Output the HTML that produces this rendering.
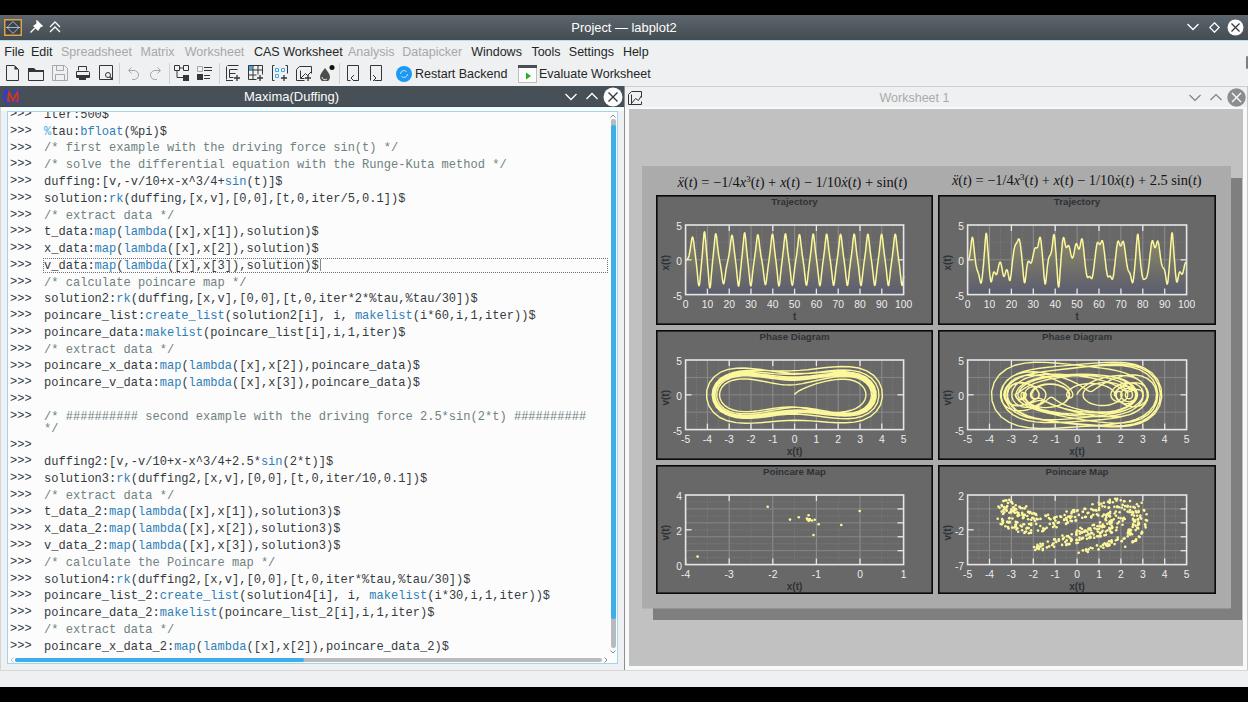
<!DOCTYPE html><html><head><meta charset="utf-8"><style>
*{margin:0;padding:0;box-sizing:border-box}
html,body{width:1248px;height:702px;overflow:hidden;background:#000}
body{position:relative;font-family:"Liberation Sans",sans-serif;font-size:12.5px;color:#232627}
.a{position:absolute}
#title{left:0;top:15px;width:1248px;height:25px;background:linear-gradient(#5d666d,#444c52)}
#tline{left:0;top:40px;width:1248px;height:1px;background:#aee0f6}
#menu{left:0;top:41px;width:1248px;height:629px;background:#eff0f1}
.mi{top:44px;height:16px;line-height:16px;white-space:nowrap}
.dis{color:#a6a8aa}
.sep{top:63px;width:1px;height:21px;background:#cfd1d3}
#ldock{left:0;top:86px;width:625px;height:21px;background:#475057}
#rdockline{left:625px;top:86px;width:623px;height:1px;background:#cdcfd1}
#editorbg{left:0;top:107px;width:624px;height:563px;background:linear-gradient(#fafbfb 0,#fafbfb 4px,#eff0f1 4px)}
#editor{left:7px;top:111px;width:611px;height:553px;background:#fcfcfc;border:1px solid #9fd5ef;overflow:hidden}
#vline{left:624px;top:86px;width:1px;height:585px;background:#8c8e91}
#rstrip{left:625px;top:107px;width:622px;height:563px;background:#f8f9f9}
#rline{left:1247px;top:86px;width:1px;height:584px;background:#c5c7c9}
#lline{left:0;top:107px;width:1px;height:563px;background:#d3d5d7}
#view{left:629px;top:109px;width:614px;height:557px;background:#c1c1c1}
#status{left:0;top:670px;width:1248px;height:17px;background:#eff0f1;border-top:1px solid #d6d8da}
.code{font-family:"Liberation Mono",monospace;font-size:12.05px;white-space:pre;color:#353a3f}
.pr{left:2px}
.kw{color:#2e7fb8}
.cm{color:#6f8181}
.pc{color:#3daee9}
</style></head><body>
<div class="a" id="title"></div><div class="a" id="tline"></div><div class="a" id="menu"></div>
<svg class="a" style="left:4px;top:19px" width="18" height="17" viewBox="0 0 18 17" ><rect x=".75" y=".75" width="16.5" height="15.5" fill="#3b434a" stroke="#e0a240" stroke-width="1.5"/><path d="M2 8.5h14M3 8.5l6-6 6 6-6 6z" fill="none" stroke="#c8d8e8" stroke-width="0.8"/></svg>
<svg class="a" style="left:29px;top:20px" width="14" height="14" viewBox="0 0 14 14" ><path d="M8 1l5 5-2 1-2 3-4-4 3-2zM6.5 7.5l-5 5" fill="#fff" stroke="#fff" stroke-width="1.3"/></svg>
<svg class="a" style="left:48px;top:20px" width="14" height="14" viewBox="0 0 14 14" ><path d="M2 7l5-5 5 5M2 12l5-5 5 5" fill="none" stroke="#fff" stroke-width="1.3"/></svg>
<div class="a" style="left:0;top:20px;width:1248px;text-align:center;color:#fff;font-size:12.9px;line-height:16px;padding-left:0px">Project — labplot2</div>
<svg class="a" style="left:1186px;top:22px" width="14" height="10" viewBox="0 0 14 10" ><path d="M1.5 2l5.5 5.5 5.5-5.5" fill="none" stroke="#fff" stroke-width="1.3"/></svg>
<svg class="a" style="left:1209px;top:22px" width="11" height="11" viewBox="0 0 11 11" ><path d="M5.5 .8l4.7 4.7-4.7 4.7-4.7-4.7z" fill="none" stroke="#fff" stroke-width="1.3"/></svg>
<svg class="a" style="left:1227px;top:19px" width="17" height="17" viewBox="0 0 17 17" ><circle cx="8.5" cy="8.5" r="8" fill="#fcfcfc"/><path d="M4.5 4.5l8 8M12.5 4.5l-8 8" stroke="#31363b" stroke-width="1.2"/></svg>
<div class="a mi" style="left:4.3px">File</div>
<div class="a mi" style="left:31.0px">Edit</div>
<div class="a mi dis" style="left:61.0px">Spreadsheet</div>
<div class="a mi dis" style="left:140.5px">Matrix</div>
<div class="a mi dis" style="left:184.8px">Worksheet</div>
<div class="a mi" style="left:254.0px">CAS Worksheet</div>
<div class="a mi dis" style="left:347.9px">Analysis</div>
<div class="a mi dis" style="left:402.3px">Datapicker</div>
<div class="a mi" style="left:471.2px">Windows</div>
<div class="a mi" style="left:531.4px">Tools</div>
<div class="a mi" style="left:568.8px">Settings</div>
<div class="a mi" style="left:622.9px">Help</div>
<svg class="a" style="left:5px;top:65px" width="16" height="16" viewBox="0 0 16 16" ><path d="M1.5 .5h8l4 4v11h-12z" fill="none" stroke="#31363b"/><path d="M9.5 .5v4h4z" fill="#31363b"/></svg>
<svg class="a" style="left:28px;top:65px" width="16" height="16" viewBox="0 0 16 16" ><path d="M.5 3.5v12h15v-10h-8l-2-2z" fill="none" stroke="#31363b"/><path d="M0 3h6l2 2h8v2h-16z" fill="#31363b"/></svg>
<svg class="a" style="left:52px;top:65px" width="16" height="16" viewBox="0 0 16 16" ><path d="M.5 .5h12l3 3v12h-15z" fill="none" stroke="#a5a7a9"/><path d="M4.5 .5v5h7v-5M3.5 15.5v-6h9v6" fill="none" stroke="#a5a7a9"/></svg>
<svg class="a" style="left:75px;top:65px" width="16" height="16" viewBox="0 0 16 16" ><path d="M3.5 5.5v-4h8v4" fill="none" stroke="#31363b"/><path d="M1.5 6.5h12a1 1 0 0 1 1 1v5h-13z" fill="none" stroke="#31363b"/><rect x="2" y="10" width="12" height="2" fill="#31363b"/><rect x="4" y="12" width="7" height="3" fill="#31363b"/></svg>
<svg class="a" style="left:99px;top:65px" width="16" height="16" viewBox="0 0 16 16" ><path d="M.5 .5h13v14h-13z" fill="none" stroke="#31363b"/><circle cx="9" cy="10" r="2.5" fill="none" stroke="#31363b"/><path d="M10.8 11.8l3 3" stroke="#31363b" stroke-width="1.5"/></svg>
<svg class="a" style="left:125px;top:65px" width="16" height="16" viewBox="0 0 16 16" ><path d="M4 5.5h5a4.5 4.5 0 0 1 0 9h-2" fill="none" stroke="#a5a7a9"/><path d="M6.5 2.5l-3 3 3 3" fill="none" stroke="#a5a7a9"/></svg>
<svg class="a" style="left:148px;top:65px" width="16" height="16" viewBox="0 0 16 16" ><path d="M12 5.5h-5a4.5 4.5 0 0 0 0 9h2" fill="none" stroke="#a5a7a9"/><path d="M9.5 2.5l3 3-3 3" fill="none" stroke="#a5a7a9"/></svg>
<svg class="a" style="left:174px;top:65px" width="16" height="16" viewBox="0 0 16 16" ><path d="M.5 .5h5v5h-5zM9.5 .5h5v5h-5zM5.5 3h4M3 5.5v7h6" fill="none" stroke="#31363b"/><rect x="9" y="10" width="6" height="6" fill="#31363b"/></svg>
<svg class="a" style="left:197px;top:65px" width="16" height="16" viewBox="0 0 16 16" ><path d="M.5 1.5h5v5h-5z" fill="none" stroke="#a5a7a9"/><path d="M7 2.5h8M7 5.5h8M7 10.5h6M7 13.5h6" stroke="#31363b"/><rect x="0" y="9" width="6" height="6" fill="#31363b"/></svg>
<svg class="a" style="left:225px;top:65px" width="16" height="16" viewBox="0 0 16 16" ><path d="M1.5 1.5v13M2.5 .5h11M1 15.5h7" stroke="#31363b"/><path d="M4.5 4.5h8M4.5 12.5v-8M4.5 8.5h6M4.5 12.5h4" fill="none" stroke="#31363b"/><path d="M12 10v6M9 13h6" stroke="#31363b" stroke-width="1.3"/></svg>
<svg class="a" style="left:248px;top:65px" width="16" height="16" viewBox="0 0 16 16" ><rect x=".5" y=".5" width="4" height="4" fill="#3daee9"/><path d="M.5 .5h14v9M.5 .5v14h8M5 .5v14M10 .5v9M.5 5h14M.5 10h8" fill="none" stroke="#31363b"/><path d="M12 10v6M9 13h6" stroke="#31363b" stroke-width="1.3"/></svg>
<svg class="a" style="left:272px;top:65px" width="16" height="16" viewBox="0 0 16 16" ><path d="M2.5 .5h-2v15h2M13.5 .5h2v8" fill="none" stroke="#31363b"/><path d="M3.5 3.5h3v3h-3zM9.5 3.5h3v3h-3zM3.5 9.5h3v3h-3z" fill="none" stroke="#3daee9"/><path d="M12 10v6M9 13h6" stroke="#31363b" stroke-width="1.3"/></svg>
<svg class="a" style="left:296px;top:65px" width="16" height="16" viewBox="0 0 16 16" ><path d="M.5 4.5l3-3h12v7M.5 4.5v11h8M4.5 5.5v8h4M4.5 13.5l5-5 2 2 4-4" fill="none" stroke="#31363b"/><path d="M12 10v6M9 13h6" stroke="#31363b" stroke-width="1.3"/></svg>
<svg class="a" style="left:319px;top:65px" width="16" height="16" viewBox="0 0 16 16" ><path d="M6 3c3 4 5 6 5 9a5 5 0 0 1-10 0c0-3 2-5 5-9z" fill="#4d4d4d"/><path d="M3 12a3 3 0 0 0 5 2" fill="none" stroke="#eee" stroke-width="1"/><circle cx="13" cy="2.5" r="2.5" fill="#111"/></svg>
<svg class="a" style="left:345px;top:65px" width="16" height="16" viewBox="0 0 16 16" ><path d="M2.5 .5h11v15h-5M2.5 .5v15h3" fill="none" stroke="#31363b"/><path d="M9 10l-3 3 3 3" fill="none" stroke="#31363b"/></svg>
<svg class="a" style="left:369px;top:65px" width="16" height="16" viewBox="0 0 16 16" ><path d="M.5 .5h11v15h-7M.5 .5v15" fill="none" stroke="#31363b" transform="translate(1 0)"/><path d="M4 10l3 3-3 3" fill="none" stroke="#31363b"/></svg>
<div class="a sep" style="left:119px"></div>
<div class="a sep" style="left:169px"></div>
<div class="a sep" style="left:219px"></div>
<div class="a sep" style="left:339px"></div>
<svg class="a" style="left:396px;top:66px" width="16" height="16" viewBox="0 0 16 16" ><circle cx="8" cy="8" r="8" fill="#1d99f3"/><path d="M4.5 8a3.5 3.5 0 0 1 6-2.4M11.5 8a3.5 3.5 0 0 1-6 2.4" fill="none" stroke="#bfe4fc" stroke-width="1"/></svg>
<div class="a" style="left:415px;top:66px;height:16px;line-height:16px">Restart Backend</div>
<svg class="a" style="left:518px;top:65px" width="19" height="18" viewBox="0 0 19 18" ><rect x=".5" y=".5" width="18" height="17" fill="#fcfcfc" stroke="#bcbec0"/><rect x="0" y="0" width="19" height="3" fill="#475057"/><path d="M8 7.5l5 3.5-5 3.5z" fill="#1cb31c"/></svg>
<div class="a" style="left:539px;top:66px;height:16px;line-height:16px">Evaluate Worksheet</div>
<div class="a" id="ldock"></div><div class="a" style="left:0;top:106px;width:625px;height:1px;background:#2f4d5c"></div><div class="a" style="left:1px;top:107px;width:623px;height:3px;background:#fafbfb"></div><div class="a" style="left:1246px;top:56px;width:2px;height:13px;background:#7d8083;border-radius:1px"></div>
<svg class="a" style="left:2px;top:88px" width="20" height="18" viewBox="0 0 20 18" ><path d="M2.5 1.8c1.5 1 2.5.3 4 1.3M5.5 3.5C1.5 5.5 .8 10.5 4 12.8c2.5 1.5 3 2.8 1.5 4" fill="none" stroke="#3434f0" stroke-width="2"/><path d="M10.5 3.6h7M17.5 3v2M12.5 13h5.5M18 12v1.5" fill="none" stroke="#3434f0" stroke-width="1.9"/><path d="M6 13l1-8.5 4 8 4.5-8.5.5 9M5 13h3M13.5 13h3" fill="none" stroke="#e8302a" stroke-width="1.4"/></svg>
<div class="a" style="left:244px;top:89px;color:#fcfcfc;font-size:13px;line-height:16px">Maxima(Duffing)</div>
<svg class="a" style="left:564px;top:92px" width="14" height="10" viewBox="0 0 14 10" ><path d="M1.5 2l5.5 5.5 5.5-5.5" fill="none" stroke="#fff" stroke-width="1.3"/></svg>
<svg class="a" style="left:585px;top:91px" width="14" height="10" viewBox="0 0 14 10" ><path d="M1.5 8l5.5-5.5 5.5 5.5" fill="none" stroke="#fff" stroke-width="1.3"/></svg>
<svg class="a" style="left:603px;top:87px" width="20" height="20" viewBox="0 0 20 20" ><circle cx="10" cy="10" r="9.5" fill="#fcfcfc"/><path d="M5.5 5.5l9 9M14.5 5.5l-9 9" stroke="#31363b" stroke-width="1.3"/></svg>
<div class="a" id="rdockline"></div>
<svg class="a" style="left:628px;top:90px" width="15" height="15" viewBox="0 0 15 15" ><path d="M.5 4.5l3-3h10v6M.5 4.5v10h13v-3M3.5 4.5v10M3.5 13.5l4-5 3 2 3-5" fill="none" stroke="#31363b"/></svg>
<div class="a dis" style="left:879.5px;top:90px;line-height:16px;color:#a9abad">Worksheet 1</div>
<svg class="a" style="left:1188px;top:93px" width="14" height="10" viewBox="0 0 14 10" ><path d="M1.5 2l5.5 5.5 5.5-5.5" fill="none" stroke="#7f8285" stroke-width="1.2"/></svg>
<svg class="a" style="left:1209px;top:92px" width="14" height="10" viewBox="0 0 14 10" ><path d="M1.5 8l5.5-5.5 5.5 5.5" fill="none" stroke="#7f8285" stroke-width="1.2"/></svg>
<svg class="a" style="left:1227px;top:88px" width="19" height="19" viewBox="0 0 19 19" ><circle cx="9.5" cy="9.5" r="9.2" fill="#8b8e91"/><path d="M5 5l9 9M14 5l-9 9" stroke="#fcfcfc" stroke-width="1.3"/></svg>
<div class="a" id="editorbg"></div><div class="a" id="vline"></div><div class="a" id="rstrip"></div><div class="a" id="rline"></div><div class="a" id="lline"></div><div class="a" id="status"></div>
<div class="a" id="editor">
<div class="a code pr" style="top:-4.85px;line-height:14.00px">&gt;&gt;&gt;</div>
<div class="a code" style="left:36.00px;top:-3.05px;line-height:12.04px">iter:500$</div>
<div class="a code pr" style="top:11.91px;line-height:14.00px">&gt;&gt;&gt;</div>
<div class="a code" style="left:36.00px;top:13.71px;line-height:12.04px"><span class="pc">%</span>tau:<span class="kw">bfloat</span>(%pi)$</div>
<div class="a code pr" style="top:28.67px;line-height:14.00px">&gt;&gt;&gt;</div>
<div class="a code" style="left:36.00px;top:30.47px;line-height:12.04px"><span class="cm">/* first example with the driving force sin(t) */</span></div>
<div class="a code pr" style="top:45.43px;line-height:14.00px">&gt;&gt;&gt;</div>
<div class="a code" style="left:36.00px;top:47.23px;line-height:12.04px"><span class="cm">/* solve the differential equation with the Runge-Kuta method */</span></div>
<div class="a code pr" style="top:62.19px;line-height:14.00px">&gt;&gt;&gt;</div>
<div class="a code" style="left:36.00px;top:63.99px;line-height:12.04px">duffing:[v,-v/10+x-x^3/4+<span class="kw">sin</span>(t)]$</div>
<div class="a code pr" style="top:78.95px;line-height:14.00px">&gt;&gt;&gt;</div>
<div class="a code" style="left:36.00px;top:80.75px;line-height:12.04px">solution:<span class="kw">rk</span>(duffing,[x,v],[0,0],[t,0,iter/5,0.1])$</div>
<div class="a code pr" style="top:95.71px;line-height:14.00px">&gt;&gt;&gt;</div>
<div class="a code" style="left:36.00px;top:97.51px;line-height:12.04px"><span class="cm">/* extract data */</span></div>
<div class="a code pr" style="top:112.47px;line-height:14.00px">&gt;&gt;&gt;</div>
<div class="a code" style="left:36.00px;top:114.27px;line-height:12.04px">t_data:<span class="kw">map</span>(<span class="kw">lambda</span>([x],x[1]),solution)$</div>
<div class="a code pr" style="top:129.23px;line-height:14.00px">&gt;&gt;&gt;</div>
<div class="a code" style="left:36.00px;top:131.03px;line-height:12.04px">x_data:<span class="kw">map</span>(<span class="kw">lambda</span>([x],x[2]),solution)$</div>
<div class="a code pr" style="top:145.99px;line-height:14.00px">&gt;&gt;&gt;</div>
<div class="a code" style="left:36.00px;top:147.79px;line-height:12.04px">v_data:<span class="kw">map</span>(<span class="kw">lambda</span>([x],x[3]),solution)$</div>
<div class="a code pr" style="top:162.75px;line-height:14.00px">&gt;&gt;&gt;</div>
<div class="a code" style="left:36.00px;top:164.55px;line-height:12.04px"><span class="cm">/* calculate poincare map */</span></div>
<div class="a code pr" style="top:179.51px;line-height:14.00px">&gt;&gt;&gt;</div>
<div class="a code" style="left:36.00px;top:181.31px;line-height:12.04px">solution2:<span class="kw">rk</span>(duffing,[x,v],[0,0],[t,0,iter*2*%tau,%tau/30])$</div>
<div class="a code pr" style="top:196.27px;line-height:14.00px">&gt;&gt;&gt;</div>
<div class="a code" style="left:36.00px;top:198.07px;line-height:12.04px">poincare_list:<span class="kw">create_list</span>(solution2[i], i, <span class="kw">makelist</span>(i*60,i,1,iter))$</div>
<div class="a code pr" style="top:213.03px;line-height:14.00px">&gt;&gt;&gt;</div>
<div class="a code" style="left:36.00px;top:214.83px;line-height:12.04px">poincare_data:<span class="kw">makelist</span>(poincare_list[i],i,1,iter)$</div>
<div class="a code pr" style="top:229.79px;line-height:14.00px">&gt;&gt;&gt;</div>
<div class="a code" style="left:36.00px;top:231.59px;line-height:12.04px"><span class="cm">/* extract data */</span></div>
<div class="a code pr" style="top:246.55px;line-height:14.00px">&gt;&gt;&gt;</div>
<div class="a code" style="left:36.00px;top:248.35px;line-height:12.04px">poincare_x_data:<span class="kw">map</span>(<span class="kw">lambda</span>([x],x[2]),poincare_data)$</div>
<div class="a code pr" style="top:263.31px;line-height:14.00px">&gt;&gt;&gt;</div>
<div class="a code" style="left:36.00px;top:265.11px;line-height:12.04px">poincare_v_data:<span class="kw">map</span>(<span class="kw">lambda</span>([x],x[3]),poincare_data)$</div>
<div class="a code pr" style="top:280.07px;line-height:14.00px">&gt;&gt;&gt;</div>
<div class="a code pr" style="top:296.83px;line-height:14.00px">&gt;&gt;&gt;</div>
<div class="a code" style="left:36.00px;top:298.63px;line-height:12.04px"><span class="cm">/* ########## second example with the driving force 2.5*sin(2*t) ##########
*/</span></div>
<div class="a code pr" style="top:325.63px;line-height:14.00px">&gt;&gt;&gt;</div>
<div class="a code pr" style="top:342.39px;line-height:14.00px">&gt;&gt;&gt;</div>
<div class="a code" style="left:36.00px;top:344.19px;line-height:12.04px">duffing2:[v,-v/10+x-x^3/4+2.5*<span class="kw">sin</span>(2*t)]$</div>
<div class="a code pr" style="top:359.15px;line-height:14.00px">&gt;&gt;&gt;</div>
<div class="a code" style="left:36.00px;top:360.95px;line-height:12.04px">solution3:<span class="kw">rk</span>(duffing2,[x,v],[0,0],[t,0,iter/10,0.1])$</div>
<div class="a code pr" style="top:375.91px;line-height:14.00px">&gt;&gt;&gt;</div>
<div class="a code" style="left:36.00px;top:377.71px;line-height:12.04px"><span class="cm">/* extract data */</span></div>
<div class="a code pr" style="top:392.67px;line-height:14.00px">&gt;&gt;&gt;</div>
<div class="a code" style="left:36.00px;top:394.47px;line-height:12.04px">t_data_2:<span class="kw">map</span>(<span class="kw">lambda</span>([x],x[1]),solution3)$</div>
<div class="a code pr" style="top:409.43px;line-height:14.00px">&gt;&gt;&gt;</div>
<div class="a code" style="left:36.00px;top:411.23px;line-height:12.04px">x_data_2:<span class="kw">map</span>(<span class="kw">lambda</span>([x],x[2]),solution3)$</div>
<div class="a code pr" style="top:426.19px;line-height:14.00px">&gt;&gt;&gt;</div>
<div class="a code" style="left:36.00px;top:427.99px;line-height:12.04px">v_data_2:<span class="kw">map</span>(<span class="kw">lambda</span>([x],x[3]),solution3)$</div>
<div class="a code pr" style="top:442.95px;line-height:14.00px">&gt;&gt;&gt;</div>
<div class="a code" style="left:36.00px;top:444.75px;line-height:12.04px"><span class="cm">/* calculate the Poincare map */</span></div>
<div class="a code pr" style="top:459.71px;line-height:14.00px">&gt;&gt;&gt;</div>
<div class="a code" style="left:36.00px;top:461.51px;line-height:12.04px">solution4:<span class="kw">rk</span>(duffing2,[x,v],[0,0],[t,0,iter*%tau,%tau/30])$</div>
<div class="a code pr" style="top:476.47px;line-height:14.00px">&gt;&gt;&gt;</div>
<div class="a code" style="left:36.00px;top:478.27px;line-height:12.04px">poincare_list_2:<span class="kw">create_list</span>(solution4[i], i, <span class="kw">makelist</span>(i*30,i,1,iter))$</div>
<div class="a code pr" style="top:493.23px;line-height:14.00px">&gt;&gt;&gt;</div>
<div class="a code" style="left:36.00px;top:495.03px;line-height:12.04px">poincare_data_2:<span class="kw">makelist</span>(poincare_list_2[i],i,1,iter)$</div>
<div class="a code pr" style="top:509.99px;line-height:14.00px">&gt;&gt;&gt;</div>
<div class="a code" style="left:36.00px;top:511.79px;line-height:12.04px"><span class="cm">/* extract data */</span></div>
<div class="a code pr" style="top:526.75px;line-height:14.00px">&gt;&gt;&gt;</div>
<div class="a code" style="left:36.00px;top:528.55px;line-height:12.04px">poincare_x_data_2:<span class="kw">map</span>(<span class="kw">lambda</span>([x],x[2]),poincare_data_2)$</div>
<div class="a" style="left:34.50px;top:145.50px;width:565.50px;height:15.50px;border:1px dotted #707070"></div>
<div class="a" style="left:312.00px;top:147.00px;width:1.00px;height:12.00px;background:#8a8a8a"></div>
<div class="a" style="left:603.00px;top:7.00px;width:4.50px;height:529.00px;background:#b9babc;border-radius:2.25px"></div>
<div class="a" style="left:603.00px;top:12.50px;width:4.50px;height:494.00px;background:#3daee9;border-radius:2.25px"></div>
<svg class="a" style="left:601px;top:1px" width="8" height="6"><path d="M1.5 4.5l2.5-2.5 2.5 2.5" fill="none" stroke="#8a8c8e" stroke-width="1"/></svg>
<svg class="a" style="left:601px;top:537px" width="8" height="6"><path d="M1.5 1.5l2.5 2.5 2.5-2.5" fill="none" stroke="#8a8c8e" stroke-width="1"/></svg>
<div class="a" style="left:7.00px;top:546.00px;width:586.50px;height:4.00px;background:#b9babc;border-radius:2px"></div>
<div class="a" style="left:7.00px;top:546.00px;width:289.00px;height:4.00px;background:#3daee9;border-radius:2px"></div>
<svg class="a" style="left:1px;top:544px" width="6" height="8"><path d="M4.5 1.5l-2.5 2.5 2.5 2.5" fill="none" stroke="#c0c2c4" stroke-width="1"/></svg>
<svg class="a" style="left:595px;top:544px" width="6" height="8"><path d="M1.5 1.5l2.5 2.5-2.5 2.5" fill="none" stroke="#8a8c8e" stroke-width="1"/></svg>
</div>
<div class="a" id="view"></div>
<svg class="a" style="left:0;top:0" width="1248" height="702" font-family="Liberation Sans, sans-serif">
<rect x="653" y="178" width="589" height="442" fill="#7f7f7f"/>
<rect x="642" y="166" width="589" height="442.5" fill="#ababab"/>
<text x="792.5" y="187.3" text-anchor="middle" font-family="Liberation Serif, serif" font-size="14.5" fill="#141414"><tspan font-style="italic">x&#776;</tspan>(<tspan font-style="italic">t</tspan>) = &#8722;1/4<tspan font-style="italic">x</tspan><tspan font-size="9" dy="-5">3</tspan><tspan dy="5">(</tspan><tspan font-style="italic">t</tspan>) + <tspan font-style="italic">x</tspan>(<tspan font-style="italic">t</tspan>) &#8722; 1/10<tspan font-style="italic">x&#775;</tspan>(<tspan font-style="italic">t</tspan>) + sin(<tspan font-style="italic">t</tspan>)</text>
<text x="1076.8" y="185.1" text-anchor="middle" font-family="Liberation Serif, serif" font-size="14.4" fill="#141414"><tspan font-style="italic">x&#776;</tspan>(<tspan font-style="italic">t</tspan>) = &#8722;1/4<tspan font-style="italic">x</tspan><tspan font-size="9" dy="-5">3</tspan><tspan dy="5">(</tspan><tspan font-style="italic">t</tspan>) + <tspan font-style="italic">x</tspan>(<tspan font-style="italic">t</tspan>) &#8722; 1/10<tspan font-style="italic">x&#775;</tspan>(<tspan font-style="italic">t</tspan>) + 2.5 sin(<tspan font-style="italic">t</tspan>)</text>
<rect x="656.80" y="195.80" width="275.40" height="128.40" fill="#686868" stroke="#0a0a0a" stroke-width="1.6"/>
<text x="794.50" y="205.20" text-anchor="middle" font-size="9.7" font-weight="bold" fill="#2d3236">Trajectory</text>
<line x1="696.50" y1="225.00" x2="696.50" y2="294.60" stroke="#7c7c7c" stroke-width="0.8" stroke-dasharray="1.5,1.5"/>
<line x1="718.30" y1="225.00" x2="718.30" y2="294.60" stroke="#7c7c7c" stroke-width="0.8" stroke-dasharray="1.5,1.5"/>
<line x1="740.10" y1="225.00" x2="740.10" y2="294.60" stroke="#7c7c7c" stroke-width="0.8" stroke-dasharray="1.5,1.5"/>
<line x1="761.90" y1="225.00" x2="761.90" y2="294.60" stroke="#7c7c7c" stroke-width="0.8" stroke-dasharray="1.5,1.5"/>
<line x1="783.70" y1="225.00" x2="783.70" y2="294.60" stroke="#7c7c7c" stroke-width="0.8" stroke-dasharray="1.5,1.5"/>
<line x1="805.50" y1="225.00" x2="805.50" y2="294.60" stroke="#7c7c7c" stroke-width="0.8" stroke-dasharray="1.5,1.5"/>
<line x1="827.30" y1="225.00" x2="827.30" y2="294.60" stroke="#7c7c7c" stroke-width="0.8" stroke-dasharray="1.5,1.5"/>
<line x1="849.10" y1="225.00" x2="849.10" y2="294.60" stroke="#7c7c7c" stroke-width="0.8" stroke-dasharray="1.5,1.5"/>
<line x1="870.90" y1="225.00" x2="870.90" y2="294.60" stroke="#7c7c7c" stroke-width="0.8" stroke-dasharray="1.5,1.5"/>
<line x1="892.70" y1="225.00" x2="892.70" y2="294.60" stroke="#7c7c7c" stroke-width="0.8" stroke-dasharray="1.5,1.5"/>
<line x1="685.60" y1="277.20" x2="903.60" y2="277.20" stroke="#7c7c7c" stroke-width="0.8" stroke-dasharray="1.5,1.5"/>
<line x1="685.60" y1="242.40" x2="903.60" y2="242.40" stroke="#7c7c7c" stroke-width="0.8" stroke-dasharray="1.5,1.5"/>
<line x1="707.40" y1="225.00" x2="707.40" y2="294.60" stroke="#8e8e8e" stroke-width="1"/>
<line x1="729.20" y1="225.00" x2="729.20" y2="294.60" stroke="#8e8e8e" stroke-width="1"/>
<line x1="751.00" y1="225.00" x2="751.00" y2="294.60" stroke="#8e8e8e" stroke-width="1"/>
<line x1="772.80" y1="225.00" x2="772.80" y2="294.60" stroke="#8e8e8e" stroke-width="1"/>
<line x1="794.60" y1="225.00" x2="794.60" y2="294.60" stroke="#8e8e8e" stroke-width="1"/>
<line x1="816.40" y1="225.00" x2="816.40" y2="294.60" stroke="#8e8e8e" stroke-width="1"/>
<line x1="838.20" y1="225.00" x2="838.20" y2="294.60" stroke="#8e8e8e" stroke-width="1"/>
<line x1="860.00" y1="225.00" x2="860.00" y2="294.60" stroke="#8e8e8e" stroke-width="1"/>
<line x1="881.80" y1="225.00" x2="881.80" y2="294.60" stroke="#8e8e8e" stroke-width="1"/>
<line x1="685.60" y1="259.80" x2="903.60" y2="259.80" stroke="#8a8a8a" stroke-width="0.9"/>
<defs><linearGradient id="g1" x1="0" y1="0" x2="0" y2="1"><stop offset="0" stop-color="#8c8b71"/><stop offset="0.4" stop-color="#7b7a69"/><stop offset="0.7" stop-color="#6a6a6b"/><stop offset="1" stop-color="#5b5d6f"/></linearGradient></defs>
<polygon points="685.6,294.6 685.6,259.8 685.8,259.8 686.0,259.8 686.3,259.8 686.5,259.7 686.7,259.7 686.9,259.6 687.1,259.4 687.3,259.2 687.6,259.0 687.8,258.7 688.0,258.3 688.2,257.9 688.4,257.3 688.7,256.7 688.9,256.0 689.1,255.2 689.3,254.3 689.5,253.3 689.7,252.2 690.0,251.0 690.2,249.7 690.4,248.3 690.6,246.8 690.8,245.2 691.1,243.7 691.3,242.1 691.5,240.7 691.7,239.4 691.9,238.3 692.1,237.6 692.4,237.1 692.6,237.0 692.8,237.4 693.0,238.0 693.2,239.0 693.4,240.3 693.7,241.8 693.9,243.4 694.1,245.1 694.3,246.9 694.5,248.6 694.8,250.4 695.0,252.2 695.2,253.9 695.4,255.7 695.6,257.5 695.8,259.3 696.1,261.1 696.3,263.0 696.5,265.0 696.7,267.1 696.9,269.3 697.2,271.5 697.4,273.9 697.6,276.2 697.8,278.5 698.0,280.7 698.2,282.6 698.5,284.2 698.7,285.3 698.9,285.8 699.1,285.6 699.3,284.9 699.6,283.6 699.8,281.8 700.0,279.7 700.2,277.4 700.4,275.0 700.6,272.6 700.9,270.1 701.1,267.7 701.3,265.3 701.5,262.9 701.7,260.6 702.0,258.1 702.2,255.7 702.4,253.1 702.6,250.5 702.8,247.7 703.0,244.9 703.3,242.1 703.5,239.3 703.7,236.8 703.9,234.6 704.1,232.9 704.3,232.0 704.6,231.8 704.8,232.4 705.0,233.7 705.2,235.7 705.4,238.1 705.7,240.7 705.9,243.5 706.1,246.3 706.3,249.0 706.5,251.7 706.7,254.4 707.0,257.0 707.2,259.5 707.4,262.1 707.6,264.7 707.8,267.3 708.1,270.1 708.3,272.9 708.5,275.7 708.7,278.5 708.9,281.2 709.1,283.7 709.4,285.7 709.6,287.2 709.8,287.9 710.0,287.8 710.2,287.0 710.5,285.5 710.7,283.4 710.9,281.0 711.1,278.4 711.3,275.7 711.5,273.1 711.8,270.5 712.0,268.0 712.2,265.6 712.4,263.4 712.6,261.2 712.9,259.0 713.1,256.9 713.3,254.8 713.5,252.6 713.7,250.4 713.9,248.1 714.2,245.8 714.4,243.5 714.6,241.2 714.8,239.1 715.0,237.1 715.2,235.6 715.5,234.4 715.7,233.8 715.9,233.8 716.1,234.3 716.3,235.4 716.6,236.9 716.8,238.7 717.0,240.6 717.2,242.7 717.4,244.8 717.6,246.8 717.9,248.7 718.1,250.5 718.3,252.2 718.5,253.8 718.7,255.3 719.0,256.7 719.2,258.0 719.4,259.2 719.6,260.5 719.8,261.7 720.0,262.9 720.3,264.1 720.5,265.4 720.7,266.8 720.9,268.2 721.1,269.6 721.4,271.2 721.6,272.8 721.8,274.4 722.0,276.1 722.2,277.8 722.4,279.4 722.7,280.8 722.9,282.0 723.1,283.0 723.3,283.6 723.5,283.8 723.8,283.6 724.0,283.0 724.2,282.1 724.4,280.9 724.6,279.5 724.8,278.0 725.1,276.4 725.3,274.8 725.5,273.3 725.7,271.8 725.9,270.4 726.1,269.0 726.4,267.8 726.6,266.6 726.8,265.5 727.0,264.4 727.2,263.4 727.5,262.4 727.7,261.4 727.9,260.4 728.1,259.4 728.3,258.4 728.5,257.3 728.8,256.1 729.0,254.9 729.2,253.5 729.4,252.1 729.6,250.6 729.9,249.0 730.1,247.2 730.3,245.4 730.5,243.6 730.7,241.7 730.9,240.0 731.2,238.4 731.4,237.0 731.6,236.0 731.8,235.4 732.0,235.2 732.3,235.6 732.5,236.3 732.7,237.5 732.9,238.9 733.1,240.6 733.3,242.4 733.6,244.4 733.8,246.3 734.0,248.2 734.2,250.0 734.4,251.9 734.6,253.6 734.9,255.4 735.1,257.1 735.3,258.8 735.5,260.6 735.7,262.4 736.0,264.2 736.2,266.2 736.4,268.2 736.6,270.4 736.8,272.6 737.0,274.9 737.3,277.2 737.5,279.4 737.7,281.6 737.9,283.4 738.1,284.8 738.4,285.8 738.6,286.1 738.8,285.8 739.0,285.0 739.2,283.6 739.4,281.8 739.7,279.7 739.9,277.5 740.1,275.2 740.3,272.9 740.5,270.6 740.8,268.4 741.0,266.2 741.2,264.1 741.4,262.1 741.6,260.0 741.8,257.9 742.1,255.8 742.3,253.7 742.5,251.4 742.7,249.1 742.9,246.7 743.2,244.2 743.4,241.7 743.6,239.3 743.8,237.1 744.0,235.3 744.2,233.9 744.5,233.1 744.7,232.9 744.9,233.4 745.1,234.5 745.3,236.1 745.6,238.1 745.8,240.3 746.0,242.7 746.2,245.1 746.4,247.4 746.6,249.7 746.9,251.9 747.1,254.0 747.3,256.0 747.5,258.0 747.7,260.0 747.9,261.9 748.2,263.9 748.4,265.9 748.6,268.0 748.8,270.2 749.0,272.4 749.3,274.6 749.5,276.9 749.7,279.2 749.9,281.3 750.1,283.1 750.3,284.6 750.6,285.6 750.8,286.0 751.0,285.8 751.2,285.1 751.4,283.9 751.7,282.2 751.9,280.3 752.1,278.3 752.3,276.1 752.5,274.0 752.7,271.9 753.0,269.9 753.2,268.1 753.4,266.3 753.6,264.6 753.8,263.0 754.1,261.4 754.3,259.9 754.5,258.3 754.7,256.8 754.9,255.2 755.1,253.6 755.4,251.9 755.6,250.2 755.8,248.3 756.0,246.4 756.2,244.5 756.5,242.6 756.7,240.7 756.9,238.9 757.1,237.3 757.3,236.1 757.5,235.2 757.8,234.8 758.0,234.9 758.2,235.4 758.4,236.4 758.6,237.7 758.8,239.3 759.1,241.1 759.3,242.9 759.5,244.8 759.7,246.6 759.9,248.3 760.2,250.0 760.4,251.6 760.6,253.0 760.8,254.5 761.0,255.8 761.2,257.1 761.5,258.4 761.7,259.6 761.9,260.9 762.1,262.2 762.3,263.5 762.6,265.0 762.8,266.4 763.0,268.0 763.2,269.7 763.4,271.4 763.6,273.3 763.9,275.2 764.1,277.1 764.3,278.9 764.5,280.7 764.7,282.2 765.0,283.4 765.2,284.3 765.4,284.7 765.6,284.6 765.8,284.0 766.0,283.0 766.3,281.7 766.5,280.1 766.7,278.3 766.9,276.5 767.1,274.6 767.4,272.7 767.6,270.9 767.8,269.1 768.0,267.4 768.2,265.8 768.4,264.2 768.7,262.7 768.9,261.1 769.1,259.6 769.3,258.0 769.5,256.4 769.7,254.7 770.0,253.0 770.2,251.1 770.4,249.2 770.6,247.2 770.8,245.1 771.1,243.0 771.3,240.9 771.5,238.9 771.7,237.1 771.9,235.7 772.1,234.7 772.4,234.2 772.6,234.2 772.8,234.8 773.0,235.9 773.2,237.4 773.5,239.2 773.7,241.2 773.9,243.2 774.1,245.3 774.3,247.4 774.5,249.5 774.8,251.4 775.0,253.3 775.2,255.2 775.4,257.0 775.6,258.7 775.9,260.5 776.1,262.3 776.3,264.2 776.5,266.1 776.7,268.1 776.9,270.2 777.2,272.4 777.4,274.6 777.6,276.9 777.8,279.1 778.0,281.2 778.2,283.0 778.5,284.5 778.7,285.5 778.9,286.0 779.1,285.8 779.3,285.1 779.6,283.9 779.8,282.2 780.0,280.3 780.2,278.2 780.4,276.0 780.6,273.8 780.9,271.6 781.1,269.6 781.3,267.6 781.5,265.6 781.7,263.8 782.0,262.0 782.2,260.2 782.4,258.4 782.6,256.6 782.8,254.7 783.0,252.8 783.3,250.8 783.5,248.8 783.7,246.6 783.9,244.4 784.1,242.2 784.4,240.0 784.6,238.1 784.8,236.3 785.0,235.0 785.2,234.1 785.4,233.8 785.7,234.1 785.9,234.9 786.1,236.1 786.3,237.8 786.5,239.7 786.8,241.8 787.0,243.9 787.2,246.0 787.4,248.0 787.6,250.0 787.8,251.9 788.1,253.7 788.3,255.4 788.5,257.0 788.7,258.6 788.9,260.2 789.1,261.9 789.4,263.5 789.6,265.2 789.8,266.9 790.0,268.8 790.2,270.7 790.5,272.7 790.7,274.7 790.9,276.8 791.1,278.8 791.3,280.7 791.5,282.4 791.8,283.8 792.0,284.7 792.2,285.2 792.4,285.2 792.6,284.6 792.9,283.6 793.1,282.2 793.3,280.5 793.5,278.6 793.7,276.7 793.9,274.7 794.2,272.8 794.4,270.9 794.6,269.1 794.8,267.4 795.0,265.8 795.3,264.2 795.5,262.7 795.7,261.2 795.9,259.8 796.1,258.3 796.3,256.8 796.6,255.3 796.8,253.7 797.0,252.0 797.2,250.2 797.4,248.3 797.7,246.4 797.9,244.4 798.1,242.4 798.3,240.5 798.5,238.6 798.7,237.0 799.0,235.8 799.2,234.9 799.4,234.6 799.6,234.7 799.8,235.3 800.1,236.4 800.3,237.8 800.5,239.5 800.7,241.4 800.9,243.3 801.1,245.3 801.4,247.2 801.6,249.1 801.8,250.9 802.0,252.6 802.2,254.2 802.4,255.8 802.7,257.3 802.9,258.9 803.1,260.4 803.3,261.9 803.5,263.5 803.8,265.2 804.0,266.9 804.2,268.7 804.4,270.7 804.6,272.6 804.8,274.7 805.1,276.8 805.3,278.8 805.5,280.8 805.7,282.5 805.9,283.9 806.2,284.8 806.4,285.3 806.6,285.2 806.8,284.7 807.0,283.6 807.2,282.1 807.5,280.4 807.7,278.5 807.9,276.4 808.1,274.4 808.3,272.4 808.6,270.4 808.8,268.5 809.0,266.7 809.2,265.0 809.4,263.3 809.6,261.6 809.9,260.0 810.1,258.3 810.3,256.6 810.5,254.8 810.7,253.0 811.0,251.1 811.2,249.1 811.4,247.0 811.6,244.9 811.8,242.7 812.0,240.6 812.3,238.6 812.5,236.8 812.7,235.4 812.9,234.4 813.1,234.0 813.3,234.1 813.6,234.8 813.8,235.9 814.0,237.5 814.2,239.3 814.4,241.3 814.7,243.4 814.9,245.5 815.1,247.6 815.3,249.6 815.5,251.5 815.7,253.4 816.0,255.1 816.2,256.9 816.4,258.6 816.6,260.2 816.8,262.0 817.1,263.7 817.3,265.5 817.5,267.4 817.7,269.3 817.9,271.4 818.1,273.5 818.4,275.6 818.6,277.8 818.8,279.9 819.0,281.8 819.2,283.4 819.5,284.7 819.7,285.4 819.9,285.6 820.1,285.3 820.3,284.4 820.5,283.1 820.8,281.4 821.0,279.5 821.2,277.5 821.4,275.4 821.6,273.3 821.9,271.3 822.1,269.4 822.3,267.5 822.5,265.7 822.7,264.0 822.9,262.4 823.2,260.7 823.4,259.1 823.6,257.5 823.8,255.8 824.0,254.1 824.2,252.3 824.5,250.4 824.7,248.4 824.9,246.4 825.1,244.3 825.3,242.2 825.6,240.2 825.8,238.3 826.0,236.6 826.2,235.4 826.4,234.5 826.6,234.2 826.9,234.4 827.1,235.2 827.3,236.3 827.5,237.9 827.7,239.7 828.0,241.7 828.2,243.7 828.4,245.7 828.6,247.7 828.8,249.6 829.0,251.4 829.3,253.1 829.5,254.8 829.7,256.4 829.9,257.9 830.1,259.5 830.4,261.0 830.6,262.6 830.8,264.2 831.0,265.9 831.2,267.7 831.4,269.5 831.7,271.5 831.9,273.5 832.1,275.5 832.3,277.6 832.5,279.6 832.8,281.4 833.0,283.0 833.2,284.2 833.4,285.0 833.6,285.3 833.8,285.0 834.1,284.3 834.3,283.1 834.5,281.5 834.7,279.7 834.9,277.8 835.1,275.8 835.4,273.8 835.6,271.9 835.8,270.0 836.0,268.2 836.2,266.5 836.5,264.8 836.7,263.2 836.9,261.6 837.1,260.1 837.3,258.5 837.5,256.9 837.8,255.3 838.0,253.6 838.2,251.8 838.4,249.9 838.6,248.0 838.9,245.9 839.1,243.9 839.3,241.8 839.5,239.8 839.7,238.0 839.9,236.4 840.2,235.2 840.4,234.5 840.6,234.3 840.8,234.6 841.0,235.4 841.3,236.7 841.5,238.3 841.7,240.1 841.9,242.1 842.1,244.1 842.3,246.1 842.6,248.1 842.8,250.0 843.0,251.8 843.2,253.6 843.4,255.3 843.6,256.9 843.9,258.5 844.1,260.2 844.3,261.8 844.5,263.4 844.7,265.2 845.0,267.0 845.2,268.9 845.4,270.8 845.6,272.9 845.8,275.0 846.0,277.1 846.3,279.2 846.5,281.1 846.7,282.8 846.9,284.2 847.1,285.1 847.4,285.5 847.6,285.3 847.8,284.6 848.0,283.5 848.2,281.9 848.4,280.1 848.7,278.1 848.9,276.1 849.1,274.0 849.3,272.0 849.5,270.0 849.8,268.2 850.0,266.4 850.2,264.6 850.4,262.9 850.6,261.3 850.8,259.7 851.1,258.0 851.3,256.3 851.5,254.6 851.7,252.8 851.9,250.9 852.2,248.9 852.4,246.8 852.6,244.7 852.8,242.6 853.0,240.5 853.2,238.5 853.5,236.8 853.7,235.4 853.9,234.5 854.1,234.1 854.3,234.2 854.6,234.9 854.8,236.0 855.0,237.6 855.2,239.4 855.4,241.4 855.6,243.4 855.9,245.5 856.1,247.5 856.3,249.5 856.5,251.3 856.7,253.1 856.9,254.9 857.2,256.5 857.4,258.2 857.6,259.8 857.8,261.4 858.0,263.1 858.3,264.8 858.5,266.5 858.7,268.4 858.9,270.3 859.1,272.4 859.3,274.5 859.6,276.6 859.8,278.6 860.0,280.6 860.2,282.4 860.4,283.8 860.7,284.8 860.9,285.4 861.1,285.4 861.3,284.8 861.5,283.8 861.7,282.4 862.0,280.6 862.2,278.7 862.4,276.7 862.6,274.7 862.8,272.6 863.1,270.7 863.3,268.8 863.5,267.0 863.7,265.3 863.9,263.7 864.1,262.1 864.4,260.5 864.6,258.9 864.8,257.3 865.0,255.7 865.2,253.9 865.5,252.2 865.7,250.3 865.9,248.3 866.1,246.3 866.3,244.2 866.5,242.1 866.8,240.1 867.0,238.3 867.2,236.6 867.4,235.4 867.6,234.5 867.8,234.2 868.1,234.5 868.3,235.2 868.5,236.4 868.7,238.0 868.9,239.8 869.2,241.7 869.4,243.7 869.6,245.7 869.8,247.7 870.0,249.6 870.2,251.5 870.5,253.2 870.7,254.9 870.9,256.5 871.1,258.1 871.3,259.7 871.6,261.2 871.8,262.8 872.0,264.5 872.2,266.2 872.4,268.1 872.6,270.0 872.9,271.9 873.1,274.0 873.3,276.1 873.5,278.2 873.7,280.1 874.0,281.9 874.2,283.5 874.4,284.6 874.6,285.2 874.8,285.4 875.0,284.9 875.3,284.0 875.5,282.7 875.7,281.0 875.9,279.2 876.1,277.2 876.4,275.1 876.6,273.1 876.8,271.2 877.0,269.3 877.2,267.5 877.4,265.7 877.7,264.1 877.9,262.4 878.1,260.8 878.3,259.2 878.5,257.6 878.7,256.0 879.0,254.2 879.2,252.5 879.4,250.6 879.6,248.6 879.8,246.6 880.1,244.5 880.3,242.4 880.5,240.3 880.7,238.4 880.9,236.7 881.1,235.4 881.4,234.5 881.6,234.2 881.8,234.3 882.0,235.1 882.2,236.2 882.5,237.8 882.7,239.6 882.9,241.5 883.1,243.6 883.3,245.6 883.5,247.6 883.8,249.6 884.0,251.4 884.2,253.2 884.4,254.9 884.6,256.6 884.9,258.2 885.1,259.8 885.3,261.5 885.5,263.1 885.7,264.8 885.9,266.6 886.2,268.5 886.4,270.4 886.6,272.5 886.8,274.6 887.0,276.7 887.2,278.8 887.5,280.7 887.7,282.5 887.9,283.9 888.1,284.9 888.3,285.4 888.6,285.4 888.8,284.8 889.0,283.7 889.2,282.3 889.4,280.5 889.6,278.6 889.9,276.5 890.1,274.5 890.3,272.5 890.5,270.5 890.7,268.6 891.0,266.8 891.2,265.1 891.4,263.4 891.6,261.8 891.8,260.2 892.0,258.6 892.3,256.9 892.5,255.2 892.7,253.5 892.9,251.6 893.1,249.7 893.4,247.7 893.6,245.6 893.8,243.5 894.0,241.4 894.2,239.4 894.4,237.6 894.7,236.1 894.9,235.0 895.1,234.3 895.3,234.2 895.5,234.6 895.8,235.5 896.0,236.9 896.2,238.5 896.4,240.4 896.6,242.4 896.8,244.5 897.1,246.5 897.3,248.5 897.5,250.4 897.7,252.2 897.9,253.9 898.1,255.6 898.4,257.2 898.6,258.8 898.8,260.4 899.0,262.0 899.2,263.7 899.5,265.4 899.7,267.2 899.9,269.0 900.1,271.0 900.3,273.0 900.5,275.1 900.8,277.2 901.0,279.3 901.2,281.2 901.4,282.8 901.6,284.1 901.9,285.0 902.1,285.4 902.3,285.2 902.5,284.5 902.7,283.4 902.9,281.8 903.2,280.1 903.4,278.1 903.6,276.1 903.6,294.6" fill="url(#g1)"/>
<polyline points="685.6,259.8 685.8,259.8 686.0,259.8 686.3,259.8 686.5,259.7 686.7,259.7 686.9,259.6 687.1,259.4 687.3,259.2 687.6,259.0 687.8,258.7 688.0,258.3 688.2,257.9 688.4,257.3 688.7,256.7 688.9,256.0 689.1,255.2 689.3,254.3 689.5,253.3 689.7,252.2 690.0,251.0 690.2,249.7 690.4,248.3 690.6,246.8 690.8,245.2 691.1,243.7 691.3,242.1 691.5,240.7 691.7,239.4 691.9,238.3 692.1,237.6 692.4,237.1 692.6,237.0 692.8,237.4 693.0,238.0 693.2,239.0 693.4,240.3 693.7,241.8 693.9,243.4 694.1,245.1 694.3,246.9 694.5,248.6 694.8,250.4 695.0,252.2 695.2,253.9 695.4,255.7 695.6,257.5 695.8,259.3 696.1,261.1 696.3,263.0 696.5,265.0 696.7,267.1 696.9,269.3 697.2,271.5 697.4,273.9 697.6,276.2 697.8,278.5 698.0,280.7 698.2,282.6 698.5,284.2 698.7,285.3 698.9,285.8 699.1,285.6 699.3,284.9 699.6,283.6 699.8,281.8 700.0,279.7 700.2,277.4 700.4,275.0 700.6,272.6 700.9,270.1 701.1,267.7 701.3,265.3 701.5,262.9 701.7,260.6 702.0,258.1 702.2,255.7 702.4,253.1 702.6,250.5 702.8,247.7 703.0,244.9 703.3,242.1 703.5,239.3 703.7,236.8 703.9,234.6 704.1,232.9 704.3,232.0 704.6,231.8 704.8,232.4 705.0,233.7 705.2,235.7 705.4,238.1 705.7,240.7 705.9,243.5 706.1,246.3 706.3,249.0 706.5,251.7 706.7,254.4 707.0,257.0 707.2,259.5 707.4,262.1 707.6,264.7 707.8,267.3 708.1,270.1 708.3,272.9 708.5,275.7 708.7,278.5 708.9,281.2 709.1,283.7 709.4,285.7 709.6,287.2 709.8,287.9 710.0,287.8 710.2,287.0 710.5,285.5 710.7,283.4 710.9,281.0 711.1,278.4 711.3,275.7 711.5,273.1 711.8,270.5 712.0,268.0 712.2,265.6 712.4,263.4 712.6,261.2 712.9,259.0 713.1,256.9 713.3,254.8 713.5,252.6 713.7,250.4 713.9,248.1 714.2,245.8 714.4,243.5 714.6,241.2 714.8,239.1 715.0,237.1 715.2,235.6 715.5,234.4 715.7,233.8 715.9,233.8 716.1,234.3 716.3,235.4 716.6,236.9 716.8,238.7 717.0,240.6 717.2,242.7 717.4,244.8 717.6,246.8 717.9,248.7 718.1,250.5 718.3,252.2 718.5,253.8 718.7,255.3 719.0,256.7 719.2,258.0 719.4,259.2 719.6,260.5 719.8,261.7 720.0,262.9 720.3,264.1 720.5,265.4 720.7,266.8 720.9,268.2 721.1,269.6 721.4,271.2 721.6,272.8 721.8,274.4 722.0,276.1 722.2,277.8 722.4,279.4 722.7,280.8 722.9,282.0 723.1,283.0 723.3,283.6 723.5,283.8 723.8,283.6 724.0,283.0 724.2,282.1 724.4,280.9 724.6,279.5 724.8,278.0 725.1,276.4 725.3,274.8 725.5,273.3 725.7,271.8 725.9,270.4 726.1,269.0 726.4,267.8 726.6,266.6 726.8,265.5 727.0,264.4 727.2,263.4 727.5,262.4 727.7,261.4 727.9,260.4 728.1,259.4 728.3,258.4 728.5,257.3 728.8,256.1 729.0,254.9 729.2,253.5 729.4,252.1 729.6,250.6 729.9,249.0 730.1,247.2 730.3,245.4 730.5,243.6 730.7,241.7 730.9,240.0 731.2,238.4 731.4,237.0 731.6,236.0 731.8,235.4 732.0,235.2 732.3,235.6 732.5,236.3 732.7,237.5 732.9,238.9 733.1,240.6 733.3,242.4 733.6,244.4 733.8,246.3 734.0,248.2 734.2,250.0 734.4,251.9 734.6,253.6 734.9,255.4 735.1,257.1 735.3,258.8 735.5,260.6 735.7,262.4 736.0,264.2 736.2,266.2 736.4,268.2 736.6,270.4 736.8,272.6 737.0,274.9 737.3,277.2 737.5,279.4 737.7,281.6 737.9,283.4 738.1,284.8 738.4,285.8 738.6,286.1 738.8,285.8 739.0,285.0 739.2,283.6 739.4,281.8 739.7,279.7 739.9,277.5 740.1,275.2 740.3,272.9 740.5,270.6 740.8,268.4 741.0,266.2 741.2,264.1 741.4,262.1 741.6,260.0 741.8,257.9 742.1,255.8 742.3,253.7 742.5,251.4 742.7,249.1 742.9,246.7 743.2,244.2 743.4,241.7 743.6,239.3 743.8,237.1 744.0,235.3 744.2,233.9 744.5,233.1 744.7,232.9 744.9,233.4 745.1,234.5 745.3,236.1 745.6,238.1 745.8,240.3 746.0,242.7 746.2,245.1 746.4,247.4 746.6,249.7 746.9,251.9 747.1,254.0 747.3,256.0 747.5,258.0 747.7,260.0 747.9,261.9 748.2,263.9 748.4,265.9 748.6,268.0 748.8,270.2 749.0,272.4 749.3,274.6 749.5,276.9 749.7,279.2 749.9,281.3 750.1,283.1 750.3,284.6 750.6,285.6 750.8,286.0 751.0,285.8 751.2,285.1 751.4,283.9 751.7,282.2 751.9,280.3 752.1,278.3 752.3,276.1 752.5,274.0 752.7,271.9 753.0,269.9 753.2,268.1 753.4,266.3 753.6,264.6 753.8,263.0 754.1,261.4 754.3,259.9 754.5,258.3 754.7,256.8 754.9,255.2 755.1,253.6 755.4,251.9 755.6,250.2 755.8,248.3 756.0,246.4 756.2,244.5 756.5,242.6 756.7,240.7 756.9,238.9 757.1,237.3 757.3,236.1 757.5,235.2 757.8,234.8 758.0,234.9 758.2,235.4 758.4,236.4 758.6,237.7 758.8,239.3 759.1,241.1 759.3,242.9 759.5,244.8 759.7,246.6 759.9,248.3 760.2,250.0 760.4,251.6 760.6,253.0 760.8,254.5 761.0,255.8 761.2,257.1 761.5,258.4 761.7,259.6 761.9,260.9 762.1,262.2 762.3,263.5 762.6,265.0 762.8,266.4 763.0,268.0 763.2,269.7 763.4,271.4 763.6,273.3 763.9,275.2 764.1,277.1 764.3,278.9 764.5,280.7 764.7,282.2 765.0,283.4 765.2,284.3 765.4,284.7 765.6,284.6 765.8,284.0 766.0,283.0 766.3,281.7 766.5,280.1 766.7,278.3 766.9,276.5 767.1,274.6 767.4,272.7 767.6,270.9 767.8,269.1 768.0,267.4 768.2,265.8 768.4,264.2 768.7,262.7 768.9,261.1 769.1,259.6 769.3,258.0 769.5,256.4 769.7,254.7 770.0,253.0 770.2,251.1 770.4,249.2 770.6,247.2 770.8,245.1 771.1,243.0 771.3,240.9 771.5,238.9 771.7,237.1 771.9,235.7 772.1,234.7 772.4,234.2 772.6,234.2 772.8,234.8 773.0,235.9 773.2,237.4 773.5,239.2 773.7,241.2 773.9,243.2 774.1,245.3 774.3,247.4 774.5,249.5 774.8,251.4 775.0,253.3 775.2,255.2 775.4,257.0 775.6,258.7 775.9,260.5 776.1,262.3 776.3,264.2 776.5,266.1 776.7,268.1 776.9,270.2 777.2,272.4 777.4,274.6 777.6,276.9 777.8,279.1 778.0,281.2 778.2,283.0 778.5,284.5 778.7,285.5 778.9,286.0 779.1,285.8 779.3,285.1 779.6,283.9 779.8,282.2 780.0,280.3 780.2,278.2 780.4,276.0 780.6,273.8 780.9,271.6 781.1,269.6 781.3,267.6 781.5,265.6 781.7,263.8 782.0,262.0 782.2,260.2 782.4,258.4 782.6,256.6 782.8,254.7 783.0,252.8 783.3,250.8 783.5,248.8 783.7,246.6 783.9,244.4 784.1,242.2 784.4,240.0 784.6,238.1 784.8,236.3 785.0,235.0 785.2,234.1 785.4,233.8 785.7,234.1 785.9,234.9 786.1,236.1 786.3,237.8 786.5,239.7 786.8,241.8 787.0,243.9 787.2,246.0 787.4,248.0 787.6,250.0 787.8,251.9 788.1,253.7 788.3,255.4 788.5,257.0 788.7,258.6 788.9,260.2 789.1,261.9 789.4,263.5 789.6,265.2 789.8,266.9 790.0,268.8 790.2,270.7 790.5,272.7 790.7,274.7 790.9,276.8 791.1,278.8 791.3,280.7 791.5,282.4 791.8,283.8 792.0,284.7 792.2,285.2 792.4,285.2 792.6,284.6 792.9,283.6 793.1,282.2 793.3,280.5 793.5,278.6 793.7,276.7 793.9,274.7 794.2,272.8 794.4,270.9 794.6,269.1 794.8,267.4 795.0,265.8 795.3,264.2 795.5,262.7 795.7,261.2 795.9,259.8 796.1,258.3 796.3,256.8 796.6,255.3 796.8,253.7 797.0,252.0 797.2,250.2 797.4,248.3 797.7,246.4 797.9,244.4 798.1,242.4 798.3,240.5 798.5,238.6 798.7,237.0 799.0,235.8 799.2,234.9 799.4,234.6 799.6,234.7 799.8,235.3 800.1,236.4 800.3,237.8 800.5,239.5 800.7,241.4 800.9,243.3 801.1,245.3 801.4,247.2 801.6,249.1 801.8,250.9 802.0,252.6 802.2,254.2 802.4,255.8 802.7,257.3 802.9,258.9 803.1,260.4 803.3,261.9 803.5,263.5 803.8,265.2 804.0,266.9 804.2,268.7 804.4,270.7 804.6,272.6 804.8,274.7 805.1,276.8 805.3,278.8 805.5,280.8 805.7,282.5 805.9,283.9 806.2,284.8 806.4,285.3 806.6,285.2 806.8,284.7 807.0,283.6 807.2,282.1 807.5,280.4 807.7,278.5 807.9,276.4 808.1,274.4 808.3,272.4 808.6,270.4 808.8,268.5 809.0,266.7 809.2,265.0 809.4,263.3 809.6,261.6 809.9,260.0 810.1,258.3 810.3,256.6 810.5,254.8 810.7,253.0 811.0,251.1 811.2,249.1 811.4,247.0 811.6,244.9 811.8,242.7 812.0,240.6 812.3,238.6 812.5,236.8 812.7,235.4 812.9,234.4 813.1,234.0 813.3,234.1 813.6,234.8 813.8,235.9 814.0,237.5 814.2,239.3 814.4,241.3 814.7,243.4 814.9,245.5 815.1,247.6 815.3,249.6 815.5,251.5 815.7,253.4 816.0,255.1 816.2,256.9 816.4,258.6 816.6,260.2 816.8,262.0 817.1,263.7 817.3,265.5 817.5,267.4 817.7,269.3 817.9,271.4 818.1,273.5 818.4,275.6 818.6,277.8 818.8,279.9 819.0,281.8 819.2,283.4 819.5,284.7 819.7,285.4 819.9,285.6 820.1,285.3 820.3,284.4 820.5,283.1 820.8,281.4 821.0,279.5 821.2,277.5 821.4,275.4 821.6,273.3 821.9,271.3 822.1,269.4 822.3,267.5 822.5,265.7 822.7,264.0 822.9,262.4 823.2,260.7 823.4,259.1 823.6,257.5 823.8,255.8 824.0,254.1 824.2,252.3 824.5,250.4 824.7,248.4 824.9,246.4 825.1,244.3 825.3,242.2 825.6,240.2 825.8,238.3 826.0,236.6 826.2,235.4 826.4,234.5 826.6,234.2 826.9,234.4 827.1,235.2 827.3,236.3 827.5,237.9 827.7,239.7 828.0,241.7 828.2,243.7 828.4,245.7 828.6,247.7 828.8,249.6 829.0,251.4 829.3,253.1 829.5,254.8 829.7,256.4 829.9,257.9 830.1,259.5 830.4,261.0 830.6,262.6 830.8,264.2 831.0,265.9 831.2,267.7 831.4,269.5 831.7,271.5 831.9,273.5 832.1,275.5 832.3,277.6 832.5,279.6 832.8,281.4 833.0,283.0 833.2,284.2 833.4,285.0 833.6,285.3 833.8,285.0 834.1,284.3 834.3,283.1 834.5,281.5 834.7,279.7 834.9,277.8 835.1,275.8 835.4,273.8 835.6,271.9 835.8,270.0 836.0,268.2 836.2,266.5 836.5,264.8 836.7,263.2 836.9,261.6 837.1,260.1 837.3,258.5 837.5,256.9 837.8,255.3 838.0,253.6 838.2,251.8 838.4,249.9 838.6,248.0 838.9,245.9 839.1,243.9 839.3,241.8 839.5,239.8 839.7,238.0 839.9,236.4 840.2,235.2 840.4,234.5 840.6,234.3 840.8,234.6 841.0,235.4 841.3,236.7 841.5,238.3 841.7,240.1 841.9,242.1 842.1,244.1 842.3,246.1 842.6,248.1 842.8,250.0 843.0,251.8 843.2,253.6 843.4,255.3 843.6,256.9 843.9,258.5 844.1,260.2 844.3,261.8 844.5,263.4 844.7,265.2 845.0,267.0 845.2,268.9 845.4,270.8 845.6,272.9 845.8,275.0 846.0,277.1 846.3,279.2 846.5,281.1 846.7,282.8 846.9,284.2 847.1,285.1 847.4,285.5 847.6,285.3 847.8,284.6 848.0,283.5 848.2,281.9 848.4,280.1 848.7,278.1 848.9,276.1 849.1,274.0 849.3,272.0 849.5,270.0 849.8,268.2 850.0,266.4 850.2,264.6 850.4,262.9 850.6,261.3 850.8,259.7 851.1,258.0 851.3,256.3 851.5,254.6 851.7,252.8 851.9,250.9 852.2,248.9 852.4,246.8 852.6,244.7 852.8,242.6 853.0,240.5 853.2,238.5 853.5,236.8 853.7,235.4 853.9,234.5 854.1,234.1 854.3,234.2 854.6,234.9 854.8,236.0 855.0,237.6 855.2,239.4 855.4,241.4 855.6,243.4 855.9,245.5 856.1,247.5 856.3,249.5 856.5,251.3 856.7,253.1 856.9,254.9 857.2,256.5 857.4,258.2 857.6,259.8 857.8,261.4 858.0,263.1 858.3,264.8 858.5,266.5 858.7,268.4 858.9,270.3 859.1,272.4 859.3,274.5 859.6,276.6 859.8,278.6 860.0,280.6 860.2,282.4 860.4,283.8 860.7,284.8 860.9,285.4 861.1,285.4 861.3,284.8 861.5,283.8 861.7,282.4 862.0,280.6 862.2,278.7 862.4,276.7 862.6,274.7 862.8,272.6 863.1,270.7 863.3,268.8 863.5,267.0 863.7,265.3 863.9,263.7 864.1,262.1 864.4,260.5 864.6,258.9 864.8,257.3 865.0,255.7 865.2,253.9 865.5,252.2 865.7,250.3 865.9,248.3 866.1,246.3 866.3,244.2 866.5,242.1 866.8,240.1 867.0,238.3 867.2,236.6 867.4,235.4 867.6,234.5 867.8,234.2 868.1,234.5 868.3,235.2 868.5,236.4 868.7,238.0 868.9,239.8 869.2,241.7 869.4,243.7 869.6,245.7 869.8,247.7 870.0,249.6 870.2,251.5 870.5,253.2 870.7,254.9 870.9,256.5 871.1,258.1 871.3,259.7 871.6,261.2 871.8,262.8 872.0,264.5 872.2,266.2 872.4,268.1 872.6,270.0 872.9,271.9 873.1,274.0 873.3,276.1 873.5,278.2 873.7,280.1 874.0,281.9 874.2,283.5 874.4,284.6 874.6,285.2 874.8,285.4 875.0,284.9 875.3,284.0 875.5,282.7 875.7,281.0 875.9,279.2 876.1,277.2 876.4,275.1 876.6,273.1 876.8,271.2 877.0,269.3 877.2,267.5 877.4,265.7 877.7,264.1 877.9,262.4 878.1,260.8 878.3,259.2 878.5,257.6 878.7,256.0 879.0,254.2 879.2,252.5 879.4,250.6 879.6,248.6 879.8,246.6 880.1,244.5 880.3,242.4 880.5,240.3 880.7,238.4 880.9,236.7 881.1,235.4 881.4,234.5 881.6,234.2 881.8,234.3 882.0,235.1 882.2,236.2 882.5,237.8 882.7,239.6 882.9,241.5 883.1,243.6 883.3,245.6 883.5,247.6 883.8,249.6 884.0,251.4 884.2,253.2 884.4,254.9 884.6,256.6 884.9,258.2 885.1,259.8 885.3,261.5 885.5,263.1 885.7,264.8 885.9,266.6 886.2,268.5 886.4,270.4 886.6,272.5 886.8,274.6 887.0,276.7 887.2,278.8 887.5,280.7 887.7,282.5 887.9,283.9 888.1,284.9 888.3,285.4 888.6,285.4 888.8,284.8 889.0,283.7 889.2,282.3 889.4,280.5 889.6,278.6 889.9,276.5 890.1,274.5 890.3,272.5 890.5,270.5 890.7,268.6 891.0,266.8 891.2,265.1 891.4,263.4 891.6,261.8 891.8,260.2 892.0,258.6 892.3,256.9 892.5,255.2 892.7,253.5 892.9,251.6 893.1,249.7 893.4,247.7 893.6,245.6 893.8,243.5 894.0,241.4 894.2,239.4 894.4,237.6 894.7,236.1 894.9,235.0 895.1,234.3 895.3,234.2 895.5,234.6 895.8,235.5 896.0,236.9 896.2,238.5 896.4,240.4 896.6,242.4 896.8,244.5 897.1,246.5 897.3,248.5 897.5,250.4 897.7,252.2 897.9,253.9 898.1,255.6 898.4,257.2 898.6,258.8 898.8,260.4 899.0,262.0 899.2,263.7 899.5,265.4 899.7,267.2 899.9,269.0 900.1,271.0 900.3,273.0 900.5,275.1 900.8,277.2 901.0,279.3 901.2,281.2 901.4,282.8 901.6,284.1 901.9,285.0 902.1,285.4 902.3,285.2 902.5,284.5 902.7,283.4 902.9,281.8 903.2,280.1 903.4,278.1 903.6,276.1" fill="none" stroke="#fbf79a" stroke-width="1.5" stroke-linejoin="round"/>
<rect x="685.60" y="225.00" width="218.00" height="69.60" fill="none" stroke="#e6e6e6" stroke-width="1.6"/>
<line x1="707.40" y1="294.60" x2="707.40" y2="288.60" stroke="#e6e6e6" stroke-width="1.3"/>
<line x1="729.20" y1="294.60" x2="729.20" y2="288.60" stroke="#e6e6e6" stroke-width="1.3"/>
<line x1="729.20" y1="225.00" x2="729.20" y2="231.00" stroke="#e6e6e6" stroke-width="1.3"/>
<line x1="751.00" y1="294.60" x2="751.00" y2="288.60" stroke="#e6e6e6" stroke-width="1.3"/>
<line x1="772.80" y1="294.60" x2="772.80" y2="288.60" stroke="#e6e6e6" stroke-width="1.3"/>
<line x1="772.80" y1="225.00" x2="772.80" y2="231.00" stroke="#e6e6e6" stroke-width="1.3"/>
<line x1="794.60" y1="294.60" x2="794.60" y2="288.60" stroke="#e6e6e6" stroke-width="1.3"/>
<line x1="816.40" y1="294.60" x2="816.40" y2="288.60" stroke="#e6e6e6" stroke-width="1.3"/>
<line x1="816.40" y1="225.00" x2="816.40" y2="231.00" stroke="#e6e6e6" stroke-width="1.3"/>
<line x1="838.20" y1="294.60" x2="838.20" y2="288.60" stroke="#e6e6e6" stroke-width="1.3"/>
<line x1="860.00" y1="294.60" x2="860.00" y2="288.60" stroke="#e6e6e6" stroke-width="1.3"/>
<line x1="860.00" y1="225.00" x2="860.00" y2="231.00" stroke="#e6e6e6" stroke-width="1.3"/>
<line x1="881.80" y1="294.60" x2="881.80" y2="288.60" stroke="#e6e6e6" stroke-width="1.3"/>
<line x1="685.60" y1="259.80" x2="691.60" y2="259.80" stroke="#e6e6e6" stroke-width="1.3"/>
<line x1="903.60" y1="259.80" x2="897.60" y2="259.80" stroke="#e6e6e6" stroke-width="1.3"/>
<text x="685.60" y="308.10" text-anchor="middle" font-size="10.3" fill="#ededed">0</text>
<text x="707.40" y="308.10" text-anchor="middle" font-size="10.3" fill="#ededed">10</text>
<text x="729.20" y="308.10" text-anchor="middle" font-size="10.3" fill="#ededed">20</text>
<text x="751.00" y="308.10" text-anchor="middle" font-size="10.3" fill="#ededed">30</text>
<text x="772.80" y="308.10" text-anchor="middle" font-size="10.3" fill="#ededed">40</text>
<text x="794.60" y="308.10" text-anchor="middle" font-size="10.3" fill="#ededed">50</text>
<text x="816.40" y="308.10" text-anchor="middle" font-size="10.3" fill="#ededed">60</text>
<text x="838.20" y="308.10" text-anchor="middle" font-size="10.3" fill="#ededed">70</text>
<text x="860.00" y="308.10" text-anchor="middle" font-size="10.3" fill="#ededed">80</text>
<text x="881.80" y="308.10" text-anchor="middle" font-size="10.3" fill="#ededed">90</text>
<text x="903.60" y="308.10" text-anchor="middle" font-size="10.3" fill="#ededed">100</text>
<text x="682.10" y="230.30" text-anchor="end" font-size="10.3" fill="#ededed">5</text>
<text x="682.10" y="265.10" text-anchor="end" font-size="10.3" fill="#ededed">0</text>
<text x="682.10" y="299.90" text-anchor="end" font-size="10.3" fill="#ededed">-5</text>
<text x="794.60" y="320.10" text-anchor="middle" font-size="10" font-weight="bold" fill="#2d3236">t</text>
<text x="666.10" y="266.10" text-anchor="middle" font-size="10" font-weight="bold" fill="#2d3236" transform="rotate(-90 666.10 262.80)">x(t)</text>
<rect x="938.80" y="195.80" width="276.40" height="128.40" fill="#686868" stroke="#0a0a0a" stroke-width="1.6"/>
<text x="1077.00" y="205.20" text-anchor="middle" font-size="9.7" font-weight="bold" fill="#2d3236">Trajectory</text>
<line x1="978.55" y1="225.00" x2="978.55" y2="294.60" stroke="#7c7c7c" stroke-width="0.8" stroke-dasharray="1.5,1.5"/>
<line x1="1000.45" y1="225.00" x2="1000.45" y2="294.60" stroke="#7c7c7c" stroke-width="0.8" stroke-dasharray="1.5,1.5"/>
<line x1="1022.35" y1="225.00" x2="1022.35" y2="294.60" stroke="#7c7c7c" stroke-width="0.8" stroke-dasharray="1.5,1.5"/>
<line x1="1044.25" y1="225.00" x2="1044.25" y2="294.60" stroke="#7c7c7c" stroke-width="0.8" stroke-dasharray="1.5,1.5"/>
<line x1="1066.15" y1="225.00" x2="1066.15" y2="294.60" stroke="#7c7c7c" stroke-width="0.8" stroke-dasharray="1.5,1.5"/>
<line x1="1088.05" y1="225.00" x2="1088.05" y2="294.60" stroke="#7c7c7c" stroke-width="0.8" stroke-dasharray="1.5,1.5"/>
<line x1="1109.95" y1="225.00" x2="1109.95" y2="294.60" stroke="#7c7c7c" stroke-width="0.8" stroke-dasharray="1.5,1.5"/>
<line x1="1131.85" y1="225.00" x2="1131.85" y2="294.60" stroke="#7c7c7c" stroke-width="0.8" stroke-dasharray="1.5,1.5"/>
<line x1="1153.75" y1="225.00" x2="1153.75" y2="294.60" stroke="#7c7c7c" stroke-width="0.8" stroke-dasharray="1.5,1.5"/>
<line x1="1175.65" y1="225.00" x2="1175.65" y2="294.60" stroke="#7c7c7c" stroke-width="0.8" stroke-dasharray="1.5,1.5"/>
<line x1="967.60" y1="277.20" x2="1186.60" y2="277.20" stroke="#7c7c7c" stroke-width="0.8" stroke-dasharray="1.5,1.5"/>
<line x1="967.60" y1="242.40" x2="1186.60" y2="242.40" stroke="#7c7c7c" stroke-width="0.8" stroke-dasharray="1.5,1.5"/>
<line x1="989.50" y1="225.00" x2="989.50" y2="294.60" stroke="#8e8e8e" stroke-width="1"/>
<line x1="1011.40" y1="225.00" x2="1011.40" y2="294.60" stroke="#8e8e8e" stroke-width="1"/>
<line x1="1033.30" y1="225.00" x2="1033.30" y2="294.60" stroke="#8e8e8e" stroke-width="1"/>
<line x1="1055.20" y1="225.00" x2="1055.20" y2="294.60" stroke="#8e8e8e" stroke-width="1"/>
<line x1="1077.10" y1="225.00" x2="1077.10" y2="294.60" stroke="#8e8e8e" stroke-width="1"/>
<line x1="1099.00" y1="225.00" x2="1099.00" y2="294.60" stroke="#8e8e8e" stroke-width="1"/>
<line x1="1120.90" y1="225.00" x2="1120.90" y2="294.60" stroke="#8e8e8e" stroke-width="1"/>
<line x1="1142.80" y1="225.00" x2="1142.80" y2="294.60" stroke="#8e8e8e" stroke-width="1"/>
<line x1="1164.70" y1="225.00" x2="1164.70" y2="294.60" stroke="#8e8e8e" stroke-width="1"/>
<line x1="967.60" y1="259.80" x2="1186.60" y2="259.80" stroke="#8a8a8a" stroke-width="0.9"/>
<defs><linearGradient id="g2" x1="0" y1="0" x2="0" y2="1"><stop offset="0" stop-color="#8c8b71"/><stop offset="0.4" stop-color="#7b7a69"/><stop offset="0.7" stop-color="#6a6a6b"/><stop offset="1" stop-color="#5b5d6f"/></linearGradient></defs>
<polygon points="967.6,294.6 967.6,259.8 967.8,259.8 968.0,259.8 968.3,259.6 968.5,259.4 968.7,259.1 968.9,258.6 969.1,258.0 969.4,257.2 969.6,256.1 969.8,254.9 970.0,253.5 970.2,252.0 970.4,250.2 970.7,248.4 970.9,246.5 971.1,244.5 971.3,242.6 971.5,240.9 971.8,239.4 972.0,238.3 972.2,237.6 972.4,237.4 972.6,237.8 972.9,238.6 973.1,239.8 973.3,241.5 973.5,243.4 973.7,245.4 974.0,247.6 974.2,249.8 974.4,252.0 974.6,254.1 974.8,256.1 975.0,258.1 975.3,259.9 975.5,261.5 975.7,263.1 975.9,264.5 976.1,265.7 976.4,266.9 976.6,267.8 976.8,268.7 977.0,269.5 977.2,270.2 977.5,270.8 977.7,271.4 977.9,272.0 978.1,272.6 978.3,273.2 978.6,273.9 978.8,274.7 979.0,275.6 979.2,276.5 979.4,277.6 979.6,278.7 979.9,279.8 980.1,280.8 980.3,281.7 980.5,282.5 980.7,282.9 981.0,283.1 981.2,282.9 981.4,282.3 981.6,281.4 981.8,280.1 982.1,278.6 982.3,276.8 982.5,274.8 982.7,272.7 982.9,270.4 983.1,268.0 983.4,265.6 983.6,263.0 983.8,260.4 984.0,257.6 984.2,254.7 984.5,251.7 984.7,248.7 984.9,245.6 985.1,242.6 985.3,239.8 985.6,237.3 985.8,235.2 986.0,233.9 986.2,233.3 986.4,233.6 986.7,234.8 986.9,236.6 987.1,239.0 987.3,241.8 987.5,244.8 987.7,247.9 988.0,251.0 988.2,254.1 988.4,257.1 988.6,260.0 988.8,262.8 989.1,265.6 989.3,268.3 989.5,270.8 989.7,273.2 989.9,275.4 990.2,277.4 990.4,279.1 990.6,280.4 990.8,281.3 991.0,281.8 991.3,281.9 991.5,281.6 991.7,280.9 991.9,280.0 992.1,278.9 992.3,277.7 992.6,276.5 992.8,275.3 993.0,274.3 993.2,273.5 993.4,272.8 993.7,272.3 993.9,272.0 994.1,271.9 994.3,272.0 994.5,272.2 994.8,272.5 995.0,272.9 995.2,273.4 995.4,273.8 995.6,274.2 995.9,274.4 996.1,274.6 996.3,274.6 996.5,274.4 996.7,274.1 996.9,273.6 997.2,272.9 997.4,272.1 997.6,271.1 997.8,270.1 998.0,269.0 998.3,267.9 998.5,266.8 998.7,265.8 998.9,264.9 999.1,264.0 999.4,263.3 999.6,262.8 999.8,262.4 1000.0,262.2 1000.2,262.2 1000.5,262.4 1000.7,262.8 1000.9,263.3 1001.1,264.1 1001.3,265.0 1001.5,266.0 1001.8,267.2 1002.0,268.4 1002.2,269.6 1002.4,270.9 1002.6,272.2 1002.9,273.3 1003.1,274.3 1003.3,275.2 1003.5,275.8 1003.7,276.3 1004.0,276.5 1004.2,276.4 1004.4,276.1 1004.6,275.6 1004.8,275.0 1005.0,274.3 1005.3,273.4 1005.5,272.6 1005.7,271.8 1005.9,271.1 1006.1,270.5 1006.4,270.0 1006.6,269.8 1006.8,269.7 1007.0,269.9 1007.2,270.2 1007.5,270.8 1007.7,271.6 1007.9,272.5 1008.1,273.6 1008.3,274.8 1008.6,276.1 1008.8,277.3 1009.0,278.5 1009.2,279.4 1009.4,280.1 1009.6,280.5 1009.9,280.5 1010.1,280.2 1010.3,279.4 1010.5,278.3 1010.7,276.9 1011.0,275.3 1011.2,273.5 1011.4,271.5 1011.6,269.5 1011.8,267.4 1012.1,265.4 1012.3,263.3 1012.5,261.3 1012.7,259.4 1012.9,257.6 1013.2,255.8 1013.4,254.1 1013.6,252.6 1013.8,251.2 1014.0,249.9 1014.2,248.7 1014.5,247.7 1014.7,246.8 1014.9,246.0 1015.1,245.4 1015.3,244.9 1015.6,244.5 1015.8,244.1 1016.0,243.8 1016.2,243.5 1016.4,243.2 1016.7,242.9 1016.9,242.5 1017.1,242.1 1017.3,241.6 1017.5,241.1 1017.8,240.6 1018.0,240.1 1018.2,239.6 1018.4,239.2 1018.6,239.0 1018.8,238.9 1019.1,239.0 1019.3,239.4 1019.5,240.0 1019.7,240.8 1019.9,241.9 1020.2,243.2 1020.4,244.7 1020.6,246.3 1020.8,248.1 1021.0,250.0 1021.3,252.0 1021.5,254.1 1021.7,256.3 1021.9,258.6 1022.1,260.9 1022.4,263.3 1022.6,265.8 1022.8,268.3 1023.0,270.8 1023.2,273.2 1023.4,275.6 1023.7,277.7 1023.9,279.6 1024.1,281.1 1024.3,282.2 1024.5,282.7 1024.8,282.6 1025.0,282.0 1025.2,281.0 1025.4,279.5 1025.6,277.8 1025.9,275.9 1026.1,273.9 1026.3,271.9 1026.5,270.0 1026.7,268.3 1026.9,266.7 1027.2,265.3 1027.4,264.1 1027.6,263.1 1027.8,262.3 1028.0,261.8 1028.3,261.4 1028.5,261.2 1028.7,261.2 1028.9,261.3 1029.1,261.5 1029.4,261.7 1029.6,262.0 1029.8,262.3 1030.0,262.6 1030.2,262.9 1030.5,263.1 1030.7,263.1 1030.9,263.1 1031.1,262.9 1031.3,262.6 1031.5,262.1 1031.8,261.5 1032.0,260.8 1032.2,259.9 1032.4,259.0 1032.6,257.9 1032.9,256.8 1033.1,255.7 1033.3,254.6 1033.5,253.5 1033.7,252.4 1034.0,251.4 1034.2,250.5 1034.4,249.7 1034.6,249.0 1034.8,248.5 1035.1,248.1 1035.3,247.9 1035.5,247.7 1035.7,247.7 1035.9,247.7 1036.1,247.8 1036.4,247.9 1036.6,247.9 1036.8,247.9 1037.0,247.8 1037.2,247.6 1037.5,247.2 1037.7,246.7 1037.9,246.0 1038.1,245.2 1038.3,244.1 1038.6,243.0 1038.8,241.8 1039.0,240.6 1039.2,239.5 1039.4,238.5 1039.7,237.7 1039.9,237.2 1040.1,237.2 1040.3,237.5 1040.5,238.2 1040.7,239.4 1041.0,240.8 1041.2,242.6 1041.4,244.6 1041.6,246.8 1041.8,249.1 1042.1,251.6 1042.3,254.1 1042.5,256.7 1042.7,259.3 1042.9,262.0 1043.2,264.7 1043.4,267.5 1043.6,270.2 1043.8,273.0 1044.0,275.6 1044.2,278.1 1044.5,280.3 1044.7,282.0 1044.9,283.3 1045.1,283.9 1045.3,283.9 1045.6,283.2 1045.8,282.0 1046.0,280.3 1046.2,278.3 1046.4,276.1 1046.7,273.8 1046.9,271.5 1047.1,269.3 1047.3,267.2 1047.5,265.3 1047.8,263.6 1048.0,262.1 1048.2,260.7 1048.4,259.6 1048.6,258.6 1048.8,257.8 1049.1,257.1 1049.3,256.6 1049.5,256.2 1049.7,255.8 1049.9,255.5 1050.2,255.2 1050.4,254.8 1050.6,254.4 1050.8,253.8 1051.0,253.1 1051.3,252.3 1051.5,251.2 1051.7,250.0 1051.9,248.5 1052.1,246.9 1052.4,245.1 1052.6,243.1 1052.8,241.1 1053.0,239.2 1053.2,237.4 1053.4,236.0 1053.7,235.0 1053.9,234.6 1054.1,234.7 1054.3,235.5 1054.5,236.9 1054.8,238.8 1055.0,241.1 1055.2,243.7 1055.4,246.5 1055.6,249.4 1055.9,252.4 1056.1,255.5 1056.3,258.6 1056.5,261.9 1056.7,265.1 1057.0,268.5 1057.2,271.9 1057.4,275.2 1057.6,278.4 1057.8,281.4 1058.0,283.9 1058.3,285.8 1058.5,286.8 1058.7,287.0 1058.9,286.2 1059.1,284.6 1059.4,282.3 1059.6,279.5 1059.8,276.4 1060.0,273.2 1060.2,269.9 1060.5,266.7 1060.7,263.6 1060.9,260.6 1061.1,257.6 1061.3,254.8 1061.6,252.0 1061.8,249.4 1062.0,247.0 1062.2,244.7 1062.4,242.6 1062.6,240.8 1062.9,239.4 1063.1,238.3 1063.3,237.7 1063.5,237.5 1063.7,237.7 1064.0,238.2 1064.2,239.1 1064.4,240.2 1064.6,241.3 1064.8,242.5 1065.1,243.7 1065.3,244.7 1065.5,245.6 1065.7,246.3 1065.9,246.9 1066.2,247.2 1066.4,247.4 1066.6,247.4 1066.8,247.2 1067.0,247.0 1067.2,246.7 1067.5,246.4 1067.7,246.0 1067.9,245.8 1068.1,245.6 1068.3,245.5 1068.6,245.6 1068.8,245.8 1069.0,246.2 1069.2,246.8 1069.4,247.5 1069.7,248.3 1069.9,249.2 1070.1,250.3 1070.3,251.3 1070.5,252.4 1070.7,253.4 1071.0,254.4 1071.2,255.4 1071.4,256.2 1071.6,256.8 1071.8,257.4 1072.1,257.7 1072.3,257.9 1072.5,257.9 1072.7,257.7 1072.9,257.3 1073.2,256.7 1073.4,256.0 1073.6,255.1 1073.8,254.1 1074.0,252.9 1074.3,251.7 1074.5,250.5 1074.7,249.3 1074.9,248.1 1075.1,246.9 1075.3,245.9 1075.6,245.1 1075.8,244.4 1076.0,244.0 1076.2,243.7 1076.4,243.7 1076.7,243.9 1076.9,244.3 1077.1,244.8 1077.3,245.5 1077.5,246.2 1077.8,246.9 1078.0,247.5 1078.2,248.1 1078.4,248.6 1078.6,248.9 1078.9,249.1 1079.1,249.0 1079.3,248.8 1079.5,248.3 1079.7,247.6 1079.9,246.8 1080.2,245.7 1080.4,244.6 1080.6,243.4 1080.8,242.2 1081.0,241.1 1081.3,240.1 1081.5,239.3 1081.7,238.9 1081.9,238.8 1082.1,239.0 1082.4,239.7 1082.6,240.7 1082.8,242.1 1083.0,243.7 1083.2,245.5 1083.5,247.5 1083.7,249.6 1083.9,251.7 1084.1,253.9 1084.3,256.1 1084.5,258.2 1084.8,260.3 1085.0,262.4 1085.2,264.4 1085.4,266.3 1085.6,268.2 1085.9,269.9 1086.1,271.5 1086.3,273.0 1086.5,274.2 1086.7,275.3 1087.0,276.2 1087.2,276.9 1087.4,277.3 1087.6,277.6 1087.8,277.6 1088.0,277.6 1088.3,277.4 1088.5,277.2 1088.7,277.0 1088.9,276.7 1089.1,276.6 1089.4,276.5 1089.6,276.4 1089.8,276.5 1090.0,276.7 1090.2,277.0 1090.5,277.3 1090.7,277.7 1090.9,278.0 1091.1,278.3 1091.3,278.5 1091.6,278.6 1091.8,278.5 1092.0,278.2 1092.2,277.7 1092.4,276.9 1092.6,276.0 1092.9,274.8 1093.1,273.5 1093.3,272.0 1093.5,270.4 1093.7,268.6 1094.0,266.8 1094.2,265.0 1094.4,263.1 1094.6,261.1 1094.8,259.2 1095.1,257.3 1095.3,255.4 1095.5,253.5 1095.7,251.7 1095.9,250.0 1096.2,248.4 1096.4,246.9 1096.6,245.6 1096.8,244.5 1097.0,243.6 1097.2,242.9 1097.5,242.4 1097.7,242.2 1097.9,242.2 1098.1,242.3 1098.3,242.6 1098.6,243.0 1098.8,243.4 1099.0,243.7 1099.2,244.1 1099.4,244.3 1099.7,244.5 1099.9,244.5 1100.1,244.3 1100.3,244.1 1100.5,243.7 1100.8,243.2 1101.0,242.6 1101.2,242.1 1101.4,241.5 1101.6,241.1 1101.8,240.8 1102.1,240.6 1102.3,240.7 1102.5,241.0 1102.7,241.6 1102.9,242.4 1103.2,243.5 1103.4,244.8 1103.6,246.3 1103.8,247.9 1104.0,249.7 1104.3,251.5 1104.5,253.4 1104.7,255.3 1104.9,257.2 1105.1,259.2 1105.4,261.1 1105.6,263.0 1105.8,264.9 1106.0,266.7 1106.2,268.4 1106.4,270.0 1106.7,271.5 1106.9,272.8 1107.1,274.0 1107.3,274.9 1107.5,275.7 1107.8,276.3 1108.0,276.7 1108.2,276.9 1108.4,276.9 1108.6,276.8 1108.9,276.7 1109.1,276.5 1109.3,276.3 1109.5,276.1 1109.7,276.0 1110.0,276.0 1110.2,276.0 1110.4,276.2 1110.6,276.5 1110.8,276.9 1111.0,277.4 1111.3,277.9 1111.5,278.3 1111.7,278.8 1111.9,279.1 1112.1,279.2 1112.4,279.2 1112.6,278.9 1112.8,278.4 1113.0,277.7 1113.2,276.7 1113.5,275.5 1113.7,274.1 1113.9,272.5 1114.1,270.8 1114.3,269.0 1114.5,267.1 1114.8,265.2 1115.0,263.2 1115.2,261.1 1115.4,259.1 1115.6,257.0 1115.9,255.0 1116.1,253.0 1116.3,251.0 1116.5,249.2 1116.7,247.4 1117.0,245.8 1117.2,244.4 1117.4,243.2 1117.6,242.2 1117.8,241.5 1118.1,241.1 1118.3,241.0 1118.5,241.2 1118.7,241.5 1118.9,242.1 1119.1,242.7 1119.4,243.4 1119.6,244.1 1119.8,244.7 1120.0,245.2 1120.2,245.6 1120.5,245.8 1120.7,245.9 1120.9,245.8 1121.1,245.5 1121.3,245.1 1121.6,244.6 1121.8,243.9 1122.0,243.3 1122.2,242.6 1122.4,242.0 1122.7,241.6 1122.9,241.3 1123.1,241.2 1123.3,241.4 1123.5,241.8 1123.7,242.5 1124.0,243.4 1124.2,244.6 1124.4,246.0 1124.6,247.5 1124.8,249.1 1125.1,250.8 1125.3,252.6 1125.5,254.3 1125.7,256.1 1125.9,257.8 1126.2,259.5 1126.4,261.1 1126.6,262.6 1126.8,264.0 1127.0,265.3 1127.3,266.5 1127.5,267.6 1127.7,268.5 1127.9,269.3 1128.1,270.0 1128.3,270.5 1128.6,271.0 1128.8,271.4 1129.0,271.8 1129.2,272.1 1129.4,272.5 1129.7,272.9 1129.9,273.4 1130.1,273.9 1130.3,274.6 1130.5,275.4 1130.8,276.3 1131.0,277.3 1131.2,278.3 1131.4,279.4 1131.6,280.4 1131.8,281.3 1132.1,282.1 1132.3,282.5 1132.5,282.7 1132.7,282.5 1132.9,281.9 1133.2,281.0 1133.4,279.7 1133.6,278.2 1133.8,276.4 1134.0,274.4 1134.3,272.2 1134.5,269.9 1134.7,267.6 1134.9,265.1 1135.1,262.5 1135.4,259.9 1135.6,257.1 1135.8,254.3 1136.0,251.4 1136.2,248.4 1136.4,245.5 1136.7,242.6 1136.9,240.0 1137.1,237.6 1137.3,235.8 1137.5,234.6 1137.8,234.2 1138.0,234.5 1138.2,235.6 1138.4,237.3 1138.6,239.5 1138.9,242.0 1139.1,244.8 1139.3,247.6 1139.5,250.4 1139.7,253.2 1140.0,255.8 1140.2,258.4 1140.4,260.8 1140.6,263.1 1140.8,265.3 1141.0,267.3 1141.3,269.2 1141.5,270.9 1141.7,272.5 1141.9,274.0 1142.1,275.3 1142.4,276.4 1142.6,277.3 1142.8,278.0 1143.0,278.6 1143.2,279.0 1143.5,279.3 1143.7,279.4 1143.9,279.4 1144.1,279.4 1144.3,279.3 1144.6,279.2 1144.8,279.1 1145.0,279.0 1145.2,278.8 1145.4,278.7 1145.6,278.6 1145.9,278.4 1146.1,278.2 1146.3,277.9 1146.5,277.5 1146.7,277.0 1147.0,276.3 1147.2,275.6 1147.4,274.7 1147.6,273.6 1147.8,272.5 1148.1,271.1 1148.3,269.7 1148.5,268.2 1148.7,266.5 1148.9,264.8 1149.2,263.0 1149.4,261.2 1149.6,259.3 1149.8,257.3 1150.0,255.3 1150.2,253.3 1150.5,251.4 1150.7,249.5 1150.9,247.7 1151.1,246.0 1151.3,244.4 1151.6,243.1 1151.8,242.1 1152.0,241.3 1152.2,240.8 1152.4,240.7 1152.7,240.9 1152.9,241.3 1153.1,241.9 1153.3,242.7 1153.5,243.6 1153.8,244.5 1154.0,245.3 1154.2,246.1 1154.4,246.7 1154.6,247.2 1154.8,247.5 1155.1,247.6 1155.3,247.5 1155.5,247.2 1155.7,246.7 1155.9,246.1 1156.2,245.3 1156.4,244.5 1156.6,243.6 1156.8,242.8 1157.0,242.1 1157.3,241.5 1157.5,241.1 1157.7,241.0 1157.9,241.2 1158.1,241.6 1158.3,242.4 1158.6,243.4 1158.8,244.6 1159.0,246.0 1159.2,247.5 1159.4,249.2 1159.7,250.9 1159.9,252.6 1160.1,254.3 1160.3,256.0 1160.5,257.6 1160.8,259.1 1161.0,260.5 1161.2,261.8 1161.4,263.0 1161.6,264.0 1161.9,264.9 1162.1,265.7 1162.3,266.3 1162.5,266.8 1162.7,267.2 1162.9,267.5 1163.2,267.8 1163.4,268.1 1163.6,268.3 1163.8,268.6 1164.0,268.9 1164.3,269.4 1164.5,270.0 1164.7,270.7 1164.9,271.7 1165.1,272.8 1165.4,274.0 1165.6,275.5 1165.8,277.0 1166.0,278.6 1166.2,280.2 1166.5,281.6 1166.7,282.8 1166.9,283.7 1167.1,284.1 1167.3,284.1 1167.5,283.5 1167.8,282.4 1168.0,280.9 1168.2,279.0 1168.4,276.8 1168.6,274.3 1168.9,271.7 1169.1,269.0 1169.3,266.2 1169.5,263.3 1169.7,260.4 1170.0,257.3 1170.2,254.2 1170.4,251.0 1170.6,247.8 1170.8,244.5 1171.1,241.4 1171.3,238.5 1171.5,236.0 1171.7,234.2 1171.9,233.1 1172.1,232.9 1172.4,233.6 1172.6,235.1 1172.8,237.3 1173.0,240.0 1173.2,243.0 1173.5,246.1 1173.7,249.3 1173.9,252.5 1174.1,255.6 1174.3,258.7 1174.6,261.6 1174.8,264.5 1175.0,267.2 1175.2,269.8 1175.4,272.3 1175.6,274.7 1175.9,276.8 1176.1,278.6 1176.3,280.1 1176.5,281.2 1176.7,281.9 1177.0,282.1 1177.2,282.0 1177.4,281.4 1177.6,280.5 1177.8,279.5 1178.1,278.3 1178.3,277.0 1178.5,275.8 1178.7,274.7 1178.9,273.8 1179.2,273.0 1179.4,272.5 1179.6,272.1 1179.8,271.9 1180.0,271.9 1180.2,272.0 1180.5,272.3 1180.7,272.6 1180.9,273.0 1181.1,273.4 1181.3,273.7 1181.6,274.0 1181.8,274.2 1182.0,274.2 1182.2,274.1 1182.4,273.8 1182.7,273.4 1182.9,272.7 1183.1,272.0 1183.3,271.1 1183.5,270.1 1183.8,269.1 1184.0,268.0 1184.2,267.0 1184.4,266.0 1184.6,265.1 1184.8,264.2 1185.1,263.5 1185.3,263.0 1185.5,262.6 1185.7,262.4 1185.9,262.4 1186.2,262.6 1186.4,263.0 1186.6,263.5 1186.6,294.6" fill="url(#g2)"/>
<polyline points="967.6,259.8 967.8,259.8 968.0,259.8 968.3,259.6 968.5,259.4 968.7,259.1 968.9,258.6 969.1,258.0 969.4,257.2 969.6,256.1 969.8,254.9 970.0,253.5 970.2,252.0 970.4,250.2 970.7,248.4 970.9,246.5 971.1,244.5 971.3,242.6 971.5,240.9 971.8,239.4 972.0,238.3 972.2,237.6 972.4,237.4 972.6,237.8 972.9,238.6 973.1,239.8 973.3,241.5 973.5,243.4 973.7,245.4 974.0,247.6 974.2,249.8 974.4,252.0 974.6,254.1 974.8,256.1 975.0,258.1 975.3,259.9 975.5,261.5 975.7,263.1 975.9,264.5 976.1,265.7 976.4,266.9 976.6,267.8 976.8,268.7 977.0,269.5 977.2,270.2 977.5,270.8 977.7,271.4 977.9,272.0 978.1,272.6 978.3,273.2 978.6,273.9 978.8,274.7 979.0,275.6 979.2,276.5 979.4,277.6 979.6,278.7 979.9,279.8 980.1,280.8 980.3,281.7 980.5,282.5 980.7,282.9 981.0,283.1 981.2,282.9 981.4,282.3 981.6,281.4 981.8,280.1 982.1,278.6 982.3,276.8 982.5,274.8 982.7,272.7 982.9,270.4 983.1,268.0 983.4,265.6 983.6,263.0 983.8,260.4 984.0,257.6 984.2,254.7 984.5,251.7 984.7,248.7 984.9,245.6 985.1,242.6 985.3,239.8 985.6,237.3 985.8,235.2 986.0,233.9 986.2,233.3 986.4,233.6 986.7,234.8 986.9,236.6 987.1,239.0 987.3,241.8 987.5,244.8 987.7,247.9 988.0,251.0 988.2,254.1 988.4,257.1 988.6,260.0 988.8,262.8 989.1,265.6 989.3,268.3 989.5,270.8 989.7,273.2 989.9,275.4 990.2,277.4 990.4,279.1 990.6,280.4 990.8,281.3 991.0,281.8 991.3,281.9 991.5,281.6 991.7,280.9 991.9,280.0 992.1,278.9 992.3,277.7 992.6,276.5 992.8,275.3 993.0,274.3 993.2,273.5 993.4,272.8 993.7,272.3 993.9,272.0 994.1,271.9 994.3,272.0 994.5,272.2 994.8,272.5 995.0,272.9 995.2,273.4 995.4,273.8 995.6,274.2 995.9,274.4 996.1,274.6 996.3,274.6 996.5,274.4 996.7,274.1 996.9,273.6 997.2,272.9 997.4,272.1 997.6,271.1 997.8,270.1 998.0,269.0 998.3,267.9 998.5,266.8 998.7,265.8 998.9,264.9 999.1,264.0 999.4,263.3 999.6,262.8 999.8,262.4 1000.0,262.2 1000.2,262.2 1000.5,262.4 1000.7,262.8 1000.9,263.3 1001.1,264.1 1001.3,265.0 1001.5,266.0 1001.8,267.2 1002.0,268.4 1002.2,269.6 1002.4,270.9 1002.6,272.2 1002.9,273.3 1003.1,274.3 1003.3,275.2 1003.5,275.8 1003.7,276.3 1004.0,276.5 1004.2,276.4 1004.4,276.1 1004.6,275.6 1004.8,275.0 1005.0,274.3 1005.3,273.4 1005.5,272.6 1005.7,271.8 1005.9,271.1 1006.1,270.5 1006.4,270.0 1006.6,269.8 1006.8,269.7 1007.0,269.9 1007.2,270.2 1007.5,270.8 1007.7,271.6 1007.9,272.5 1008.1,273.6 1008.3,274.8 1008.6,276.1 1008.8,277.3 1009.0,278.5 1009.2,279.4 1009.4,280.1 1009.6,280.5 1009.9,280.5 1010.1,280.2 1010.3,279.4 1010.5,278.3 1010.7,276.9 1011.0,275.3 1011.2,273.5 1011.4,271.5 1011.6,269.5 1011.8,267.4 1012.1,265.4 1012.3,263.3 1012.5,261.3 1012.7,259.4 1012.9,257.6 1013.2,255.8 1013.4,254.1 1013.6,252.6 1013.8,251.2 1014.0,249.9 1014.2,248.7 1014.5,247.7 1014.7,246.8 1014.9,246.0 1015.1,245.4 1015.3,244.9 1015.6,244.5 1015.8,244.1 1016.0,243.8 1016.2,243.5 1016.4,243.2 1016.7,242.9 1016.9,242.5 1017.1,242.1 1017.3,241.6 1017.5,241.1 1017.8,240.6 1018.0,240.1 1018.2,239.6 1018.4,239.2 1018.6,239.0 1018.8,238.9 1019.1,239.0 1019.3,239.4 1019.5,240.0 1019.7,240.8 1019.9,241.9 1020.2,243.2 1020.4,244.7 1020.6,246.3 1020.8,248.1 1021.0,250.0 1021.3,252.0 1021.5,254.1 1021.7,256.3 1021.9,258.6 1022.1,260.9 1022.4,263.3 1022.6,265.8 1022.8,268.3 1023.0,270.8 1023.2,273.2 1023.4,275.6 1023.7,277.7 1023.9,279.6 1024.1,281.1 1024.3,282.2 1024.5,282.7 1024.8,282.6 1025.0,282.0 1025.2,281.0 1025.4,279.5 1025.6,277.8 1025.9,275.9 1026.1,273.9 1026.3,271.9 1026.5,270.0 1026.7,268.3 1026.9,266.7 1027.2,265.3 1027.4,264.1 1027.6,263.1 1027.8,262.3 1028.0,261.8 1028.3,261.4 1028.5,261.2 1028.7,261.2 1028.9,261.3 1029.1,261.5 1029.4,261.7 1029.6,262.0 1029.8,262.3 1030.0,262.6 1030.2,262.9 1030.5,263.1 1030.7,263.1 1030.9,263.1 1031.1,262.9 1031.3,262.6 1031.5,262.1 1031.8,261.5 1032.0,260.8 1032.2,259.9 1032.4,259.0 1032.6,257.9 1032.9,256.8 1033.1,255.7 1033.3,254.6 1033.5,253.5 1033.7,252.4 1034.0,251.4 1034.2,250.5 1034.4,249.7 1034.6,249.0 1034.8,248.5 1035.1,248.1 1035.3,247.9 1035.5,247.7 1035.7,247.7 1035.9,247.7 1036.1,247.8 1036.4,247.9 1036.6,247.9 1036.8,247.9 1037.0,247.8 1037.2,247.6 1037.5,247.2 1037.7,246.7 1037.9,246.0 1038.1,245.2 1038.3,244.1 1038.6,243.0 1038.8,241.8 1039.0,240.6 1039.2,239.5 1039.4,238.5 1039.7,237.7 1039.9,237.2 1040.1,237.2 1040.3,237.5 1040.5,238.2 1040.7,239.4 1041.0,240.8 1041.2,242.6 1041.4,244.6 1041.6,246.8 1041.8,249.1 1042.1,251.6 1042.3,254.1 1042.5,256.7 1042.7,259.3 1042.9,262.0 1043.2,264.7 1043.4,267.5 1043.6,270.2 1043.8,273.0 1044.0,275.6 1044.2,278.1 1044.5,280.3 1044.7,282.0 1044.9,283.3 1045.1,283.9 1045.3,283.9 1045.6,283.2 1045.8,282.0 1046.0,280.3 1046.2,278.3 1046.4,276.1 1046.7,273.8 1046.9,271.5 1047.1,269.3 1047.3,267.2 1047.5,265.3 1047.8,263.6 1048.0,262.1 1048.2,260.7 1048.4,259.6 1048.6,258.6 1048.8,257.8 1049.1,257.1 1049.3,256.6 1049.5,256.2 1049.7,255.8 1049.9,255.5 1050.2,255.2 1050.4,254.8 1050.6,254.4 1050.8,253.8 1051.0,253.1 1051.3,252.3 1051.5,251.2 1051.7,250.0 1051.9,248.5 1052.1,246.9 1052.4,245.1 1052.6,243.1 1052.8,241.1 1053.0,239.2 1053.2,237.4 1053.4,236.0 1053.7,235.0 1053.9,234.6 1054.1,234.7 1054.3,235.5 1054.5,236.9 1054.8,238.8 1055.0,241.1 1055.2,243.7 1055.4,246.5 1055.6,249.4 1055.9,252.4 1056.1,255.5 1056.3,258.6 1056.5,261.9 1056.7,265.1 1057.0,268.5 1057.2,271.9 1057.4,275.2 1057.6,278.4 1057.8,281.4 1058.0,283.9 1058.3,285.8 1058.5,286.8 1058.7,287.0 1058.9,286.2 1059.1,284.6 1059.4,282.3 1059.6,279.5 1059.8,276.4 1060.0,273.2 1060.2,269.9 1060.5,266.7 1060.7,263.6 1060.9,260.6 1061.1,257.6 1061.3,254.8 1061.6,252.0 1061.8,249.4 1062.0,247.0 1062.2,244.7 1062.4,242.6 1062.6,240.8 1062.9,239.4 1063.1,238.3 1063.3,237.7 1063.5,237.5 1063.7,237.7 1064.0,238.2 1064.2,239.1 1064.4,240.2 1064.6,241.3 1064.8,242.5 1065.1,243.7 1065.3,244.7 1065.5,245.6 1065.7,246.3 1065.9,246.9 1066.2,247.2 1066.4,247.4 1066.6,247.4 1066.8,247.2 1067.0,247.0 1067.2,246.7 1067.5,246.4 1067.7,246.0 1067.9,245.8 1068.1,245.6 1068.3,245.5 1068.6,245.6 1068.8,245.8 1069.0,246.2 1069.2,246.8 1069.4,247.5 1069.7,248.3 1069.9,249.2 1070.1,250.3 1070.3,251.3 1070.5,252.4 1070.7,253.4 1071.0,254.4 1071.2,255.4 1071.4,256.2 1071.6,256.8 1071.8,257.4 1072.1,257.7 1072.3,257.9 1072.5,257.9 1072.7,257.7 1072.9,257.3 1073.2,256.7 1073.4,256.0 1073.6,255.1 1073.8,254.1 1074.0,252.9 1074.3,251.7 1074.5,250.5 1074.7,249.3 1074.9,248.1 1075.1,246.9 1075.3,245.9 1075.6,245.1 1075.8,244.4 1076.0,244.0 1076.2,243.7 1076.4,243.7 1076.7,243.9 1076.9,244.3 1077.1,244.8 1077.3,245.5 1077.5,246.2 1077.8,246.9 1078.0,247.5 1078.2,248.1 1078.4,248.6 1078.6,248.9 1078.9,249.1 1079.1,249.0 1079.3,248.8 1079.5,248.3 1079.7,247.6 1079.9,246.8 1080.2,245.7 1080.4,244.6 1080.6,243.4 1080.8,242.2 1081.0,241.1 1081.3,240.1 1081.5,239.3 1081.7,238.9 1081.9,238.8 1082.1,239.0 1082.4,239.7 1082.6,240.7 1082.8,242.1 1083.0,243.7 1083.2,245.5 1083.5,247.5 1083.7,249.6 1083.9,251.7 1084.1,253.9 1084.3,256.1 1084.5,258.2 1084.8,260.3 1085.0,262.4 1085.2,264.4 1085.4,266.3 1085.6,268.2 1085.9,269.9 1086.1,271.5 1086.3,273.0 1086.5,274.2 1086.7,275.3 1087.0,276.2 1087.2,276.9 1087.4,277.3 1087.6,277.6 1087.8,277.6 1088.0,277.6 1088.3,277.4 1088.5,277.2 1088.7,277.0 1088.9,276.7 1089.1,276.6 1089.4,276.5 1089.6,276.4 1089.8,276.5 1090.0,276.7 1090.2,277.0 1090.5,277.3 1090.7,277.7 1090.9,278.0 1091.1,278.3 1091.3,278.5 1091.6,278.6 1091.8,278.5 1092.0,278.2 1092.2,277.7 1092.4,276.9 1092.6,276.0 1092.9,274.8 1093.1,273.5 1093.3,272.0 1093.5,270.4 1093.7,268.6 1094.0,266.8 1094.2,265.0 1094.4,263.1 1094.6,261.1 1094.8,259.2 1095.1,257.3 1095.3,255.4 1095.5,253.5 1095.7,251.7 1095.9,250.0 1096.2,248.4 1096.4,246.9 1096.6,245.6 1096.8,244.5 1097.0,243.6 1097.2,242.9 1097.5,242.4 1097.7,242.2 1097.9,242.2 1098.1,242.3 1098.3,242.6 1098.6,243.0 1098.8,243.4 1099.0,243.7 1099.2,244.1 1099.4,244.3 1099.7,244.5 1099.9,244.5 1100.1,244.3 1100.3,244.1 1100.5,243.7 1100.8,243.2 1101.0,242.6 1101.2,242.1 1101.4,241.5 1101.6,241.1 1101.8,240.8 1102.1,240.6 1102.3,240.7 1102.5,241.0 1102.7,241.6 1102.9,242.4 1103.2,243.5 1103.4,244.8 1103.6,246.3 1103.8,247.9 1104.0,249.7 1104.3,251.5 1104.5,253.4 1104.7,255.3 1104.9,257.2 1105.1,259.2 1105.4,261.1 1105.6,263.0 1105.8,264.9 1106.0,266.7 1106.2,268.4 1106.4,270.0 1106.7,271.5 1106.9,272.8 1107.1,274.0 1107.3,274.9 1107.5,275.7 1107.8,276.3 1108.0,276.7 1108.2,276.9 1108.4,276.9 1108.6,276.8 1108.9,276.7 1109.1,276.5 1109.3,276.3 1109.5,276.1 1109.7,276.0 1110.0,276.0 1110.2,276.0 1110.4,276.2 1110.6,276.5 1110.8,276.9 1111.0,277.4 1111.3,277.9 1111.5,278.3 1111.7,278.8 1111.9,279.1 1112.1,279.2 1112.4,279.2 1112.6,278.9 1112.8,278.4 1113.0,277.7 1113.2,276.7 1113.5,275.5 1113.7,274.1 1113.9,272.5 1114.1,270.8 1114.3,269.0 1114.5,267.1 1114.8,265.2 1115.0,263.2 1115.2,261.1 1115.4,259.1 1115.6,257.0 1115.9,255.0 1116.1,253.0 1116.3,251.0 1116.5,249.2 1116.7,247.4 1117.0,245.8 1117.2,244.4 1117.4,243.2 1117.6,242.2 1117.8,241.5 1118.1,241.1 1118.3,241.0 1118.5,241.2 1118.7,241.5 1118.9,242.1 1119.1,242.7 1119.4,243.4 1119.6,244.1 1119.8,244.7 1120.0,245.2 1120.2,245.6 1120.5,245.8 1120.7,245.9 1120.9,245.8 1121.1,245.5 1121.3,245.1 1121.6,244.6 1121.8,243.9 1122.0,243.3 1122.2,242.6 1122.4,242.0 1122.7,241.6 1122.9,241.3 1123.1,241.2 1123.3,241.4 1123.5,241.8 1123.7,242.5 1124.0,243.4 1124.2,244.6 1124.4,246.0 1124.6,247.5 1124.8,249.1 1125.1,250.8 1125.3,252.6 1125.5,254.3 1125.7,256.1 1125.9,257.8 1126.2,259.5 1126.4,261.1 1126.6,262.6 1126.8,264.0 1127.0,265.3 1127.3,266.5 1127.5,267.6 1127.7,268.5 1127.9,269.3 1128.1,270.0 1128.3,270.5 1128.6,271.0 1128.8,271.4 1129.0,271.8 1129.2,272.1 1129.4,272.5 1129.7,272.9 1129.9,273.4 1130.1,273.9 1130.3,274.6 1130.5,275.4 1130.8,276.3 1131.0,277.3 1131.2,278.3 1131.4,279.4 1131.6,280.4 1131.8,281.3 1132.1,282.1 1132.3,282.5 1132.5,282.7 1132.7,282.5 1132.9,281.9 1133.2,281.0 1133.4,279.7 1133.6,278.2 1133.8,276.4 1134.0,274.4 1134.3,272.2 1134.5,269.9 1134.7,267.6 1134.9,265.1 1135.1,262.5 1135.4,259.9 1135.6,257.1 1135.8,254.3 1136.0,251.4 1136.2,248.4 1136.4,245.5 1136.7,242.6 1136.9,240.0 1137.1,237.6 1137.3,235.8 1137.5,234.6 1137.8,234.2 1138.0,234.5 1138.2,235.6 1138.4,237.3 1138.6,239.5 1138.9,242.0 1139.1,244.8 1139.3,247.6 1139.5,250.4 1139.7,253.2 1140.0,255.8 1140.2,258.4 1140.4,260.8 1140.6,263.1 1140.8,265.3 1141.0,267.3 1141.3,269.2 1141.5,270.9 1141.7,272.5 1141.9,274.0 1142.1,275.3 1142.4,276.4 1142.6,277.3 1142.8,278.0 1143.0,278.6 1143.2,279.0 1143.5,279.3 1143.7,279.4 1143.9,279.4 1144.1,279.4 1144.3,279.3 1144.6,279.2 1144.8,279.1 1145.0,279.0 1145.2,278.8 1145.4,278.7 1145.6,278.6 1145.9,278.4 1146.1,278.2 1146.3,277.9 1146.5,277.5 1146.7,277.0 1147.0,276.3 1147.2,275.6 1147.4,274.7 1147.6,273.6 1147.8,272.5 1148.1,271.1 1148.3,269.7 1148.5,268.2 1148.7,266.5 1148.9,264.8 1149.2,263.0 1149.4,261.2 1149.6,259.3 1149.8,257.3 1150.0,255.3 1150.2,253.3 1150.5,251.4 1150.7,249.5 1150.9,247.7 1151.1,246.0 1151.3,244.4 1151.6,243.1 1151.8,242.1 1152.0,241.3 1152.2,240.8 1152.4,240.7 1152.7,240.9 1152.9,241.3 1153.1,241.9 1153.3,242.7 1153.5,243.6 1153.8,244.5 1154.0,245.3 1154.2,246.1 1154.4,246.7 1154.6,247.2 1154.8,247.5 1155.1,247.6 1155.3,247.5 1155.5,247.2 1155.7,246.7 1155.9,246.1 1156.2,245.3 1156.4,244.5 1156.6,243.6 1156.8,242.8 1157.0,242.1 1157.3,241.5 1157.5,241.1 1157.7,241.0 1157.9,241.2 1158.1,241.6 1158.3,242.4 1158.6,243.4 1158.8,244.6 1159.0,246.0 1159.2,247.5 1159.4,249.2 1159.7,250.9 1159.9,252.6 1160.1,254.3 1160.3,256.0 1160.5,257.6 1160.8,259.1 1161.0,260.5 1161.2,261.8 1161.4,263.0 1161.6,264.0 1161.9,264.9 1162.1,265.7 1162.3,266.3 1162.5,266.8 1162.7,267.2 1162.9,267.5 1163.2,267.8 1163.4,268.1 1163.6,268.3 1163.8,268.6 1164.0,268.9 1164.3,269.4 1164.5,270.0 1164.7,270.7 1164.9,271.7 1165.1,272.8 1165.4,274.0 1165.6,275.5 1165.8,277.0 1166.0,278.6 1166.2,280.2 1166.5,281.6 1166.7,282.8 1166.9,283.7 1167.1,284.1 1167.3,284.1 1167.5,283.5 1167.8,282.4 1168.0,280.9 1168.2,279.0 1168.4,276.8 1168.6,274.3 1168.9,271.7 1169.1,269.0 1169.3,266.2 1169.5,263.3 1169.7,260.4 1170.0,257.3 1170.2,254.2 1170.4,251.0 1170.6,247.8 1170.8,244.5 1171.1,241.4 1171.3,238.5 1171.5,236.0 1171.7,234.2 1171.9,233.1 1172.1,232.9 1172.4,233.6 1172.6,235.1 1172.8,237.3 1173.0,240.0 1173.2,243.0 1173.5,246.1 1173.7,249.3 1173.9,252.5 1174.1,255.6 1174.3,258.7 1174.6,261.6 1174.8,264.5 1175.0,267.2 1175.2,269.8 1175.4,272.3 1175.6,274.7 1175.9,276.8 1176.1,278.6 1176.3,280.1 1176.5,281.2 1176.7,281.9 1177.0,282.1 1177.2,282.0 1177.4,281.4 1177.6,280.5 1177.8,279.5 1178.1,278.3 1178.3,277.0 1178.5,275.8 1178.7,274.7 1178.9,273.8 1179.2,273.0 1179.4,272.5 1179.6,272.1 1179.8,271.9 1180.0,271.9 1180.2,272.0 1180.5,272.3 1180.7,272.6 1180.9,273.0 1181.1,273.4 1181.3,273.7 1181.6,274.0 1181.8,274.2 1182.0,274.2 1182.2,274.1 1182.4,273.8 1182.7,273.4 1182.9,272.7 1183.1,272.0 1183.3,271.1 1183.5,270.1 1183.8,269.1 1184.0,268.0 1184.2,267.0 1184.4,266.0 1184.6,265.1 1184.8,264.2 1185.1,263.5 1185.3,263.0 1185.5,262.6 1185.7,262.4 1185.9,262.4 1186.2,262.6 1186.4,263.0 1186.6,263.5" fill="none" stroke="#fbf79a" stroke-width="1.5" stroke-linejoin="round"/>
<rect x="967.60" y="225.00" width="219.00" height="69.60" fill="none" stroke="#e6e6e6" stroke-width="1.6"/>
<line x1="989.50" y1="294.60" x2="989.50" y2="288.60" stroke="#e6e6e6" stroke-width="1.3"/>
<line x1="1011.40" y1="294.60" x2="1011.40" y2="288.60" stroke="#e6e6e6" stroke-width="1.3"/>
<line x1="1011.40" y1="225.00" x2="1011.40" y2="231.00" stroke="#e6e6e6" stroke-width="1.3"/>
<line x1="1033.30" y1="294.60" x2="1033.30" y2="288.60" stroke="#e6e6e6" stroke-width="1.3"/>
<line x1="1055.20" y1="294.60" x2="1055.20" y2="288.60" stroke="#e6e6e6" stroke-width="1.3"/>
<line x1="1055.20" y1="225.00" x2="1055.20" y2="231.00" stroke="#e6e6e6" stroke-width="1.3"/>
<line x1="1077.10" y1="294.60" x2="1077.10" y2="288.60" stroke="#e6e6e6" stroke-width="1.3"/>
<line x1="1099.00" y1="294.60" x2="1099.00" y2="288.60" stroke="#e6e6e6" stroke-width="1.3"/>
<line x1="1099.00" y1="225.00" x2="1099.00" y2="231.00" stroke="#e6e6e6" stroke-width="1.3"/>
<line x1="1120.90" y1="294.60" x2="1120.90" y2="288.60" stroke="#e6e6e6" stroke-width="1.3"/>
<line x1="1142.80" y1="294.60" x2="1142.80" y2="288.60" stroke="#e6e6e6" stroke-width="1.3"/>
<line x1="1142.80" y1="225.00" x2="1142.80" y2="231.00" stroke="#e6e6e6" stroke-width="1.3"/>
<line x1="1164.70" y1="294.60" x2="1164.70" y2="288.60" stroke="#e6e6e6" stroke-width="1.3"/>
<line x1="967.60" y1="259.80" x2="973.60" y2="259.80" stroke="#e6e6e6" stroke-width="1.3"/>
<line x1="1186.60" y1="259.80" x2="1180.60" y2="259.80" stroke="#e6e6e6" stroke-width="1.3"/>
<text x="967.60" y="308.10" text-anchor="middle" font-size="10.3" fill="#ededed">0</text>
<text x="989.50" y="308.10" text-anchor="middle" font-size="10.3" fill="#ededed">10</text>
<text x="1011.40" y="308.10" text-anchor="middle" font-size="10.3" fill="#ededed">20</text>
<text x="1033.30" y="308.10" text-anchor="middle" font-size="10.3" fill="#ededed">30</text>
<text x="1055.20" y="308.10" text-anchor="middle" font-size="10.3" fill="#ededed">40</text>
<text x="1077.10" y="308.10" text-anchor="middle" font-size="10.3" fill="#ededed">50</text>
<text x="1099.00" y="308.10" text-anchor="middle" font-size="10.3" fill="#ededed">60</text>
<text x="1120.90" y="308.10" text-anchor="middle" font-size="10.3" fill="#ededed">70</text>
<text x="1142.80" y="308.10" text-anchor="middle" font-size="10.3" fill="#ededed">80</text>
<text x="1164.70" y="308.10" text-anchor="middle" font-size="10.3" fill="#ededed">90</text>
<text x="1186.60" y="308.10" text-anchor="middle" font-size="10.3" fill="#ededed">100</text>
<text x="964.10" y="230.30" text-anchor="end" font-size="10.3" fill="#ededed">5</text>
<text x="964.10" y="265.10" text-anchor="end" font-size="10.3" fill="#ededed">0</text>
<text x="964.10" y="299.90" text-anchor="end" font-size="10.3" fill="#ededed">-5</text>
<text x="1077.10" y="320.10" text-anchor="middle" font-size="10" font-weight="bold" fill="#2d3236">t</text>
<text x="948.10" y="266.10" text-anchor="middle" font-size="10" font-weight="bold" fill="#2d3236" transform="rotate(-90 948.10 262.80)">x(t)</text>
<rect x="656.80" y="330.80" width="275.40" height="128.40" fill="#686868" stroke="#0a0a0a" stroke-width="1.6"/>
<text x="794.50" y="340.20" text-anchor="middle" font-size="9.7" font-weight="bold" fill="#2d3236">Phase Diagram</text>
<line x1="696.50" y1="360.00" x2="696.50" y2="429.60" stroke="#7c7c7c" stroke-width="0.8" stroke-dasharray="1.5,1.5"/>
<line x1="718.30" y1="360.00" x2="718.30" y2="429.60" stroke="#7c7c7c" stroke-width="0.8" stroke-dasharray="1.5,1.5"/>
<line x1="740.10" y1="360.00" x2="740.10" y2="429.60" stroke="#7c7c7c" stroke-width="0.8" stroke-dasharray="1.5,1.5"/>
<line x1="761.90" y1="360.00" x2="761.90" y2="429.60" stroke="#7c7c7c" stroke-width="0.8" stroke-dasharray="1.5,1.5"/>
<line x1="783.70" y1="360.00" x2="783.70" y2="429.60" stroke="#7c7c7c" stroke-width="0.8" stroke-dasharray="1.5,1.5"/>
<line x1="805.50" y1="360.00" x2="805.50" y2="429.60" stroke="#7c7c7c" stroke-width="0.8" stroke-dasharray="1.5,1.5"/>
<line x1="827.30" y1="360.00" x2="827.30" y2="429.60" stroke="#7c7c7c" stroke-width="0.8" stroke-dasharray="1.5,1.5"/>
<line x1="849.10" y1="360.00" x2="849.10" y2="429.60" stroke="#7c7c7c" stroke-width="0.8" stroke-dasharray="1.5,1.5"/>
<line x1="870.90" y1="360.00" x2="870.90" y2="429.60" stroke="#7c7c7c" stroke-width="0.8" stroke-dasharray="1.5,1.5"/>
<line x1="892.70" y1="360.00" x2="892.70" y2="429.60" stroke="#7c7c7c" stroke-width="0.8" stroke-dasharray="1.5,1.5"/>
<line x1="707.40" y1="360.00" x2="707.40" y2="429.60" stroke="#8e8e8e" stroke-width="1"/>
<line x1="729.20" y1="360.00" x2="729.20" y2="429.60" stroke="#8e8e8e" stroke-width="1"/>
<line x1="751.00" y1="360.00" x2="751.00" y2="429.60" stroke="#8e8e8e" stroke-width="1"/>
<line x1="772.80" y1="360.00" x2="772.80" y2="429.60" stroke="#8e8e8e" stroke-width="1"/>
<line x1="794.60" y1="360.00" x2="794.60" y2="429.60" stroke="#8e8e8e" stroke-width="1"/>
<line x1="816.40" y1="360.00" x2="816.40" y2="429.60" stroke="#8e8e8e" stroke-width="1"/>
<line x1="838.20" y1="360.00" x2="838.20" y2="429.60" stroke="#8e8e8e" stroke-width="1"/>
<line x1="860.00" y1="360.00" x2="860.00" y2="429.60" stroke="#8e8e8e" stroke-width="1"/>
<line x1="881.80" y1="360.00" x2="881.80" y2="429.60" stroke="#8e8e8e" stroke-width="1"/>
<line x1="685.60" y1="394.80" x2="903.60" y2="394.80" stroke="#8a8a8a" stroke-width="0.9"/>
<line x1="685.60" y1="412.20" x2="903.60" y2="412.20" stroke="#8a8a8a" stroke-width="0.9"/>
<line x1="685.60" y1="377.40" x2="903.60" y2="377.40" stroke="#8a8a8a" stroke-width="0.9"/>
<polyline points="794.6,394.8 794.6,394.8 794.6,394.7 794.7,394.5 794.8,394.3 795.0,393.9 795.4,393.6 795.8,393.1 796.4,392.6 797.2,392.1 798.1,391.4 799.3,390.7 800.7,390.0 802.3,389.2 804.2,388.3 806.4,387.3 808.9,386.3 811.7,385.3 814.9,384.2 818.4,383.1 822.2,382.1 826.3,381.1 830.8,380.2 835.4,379.6 840.3,379.2 845.2,379.3 850.0,379.8 854.5,381.0 858.5,382.9 861.8,385.5 864.3,388.6 865.7,392.3 865.9,396.1 864.9,399.8 862.7,403.3 859.6,406.2 855.6,408.6 851.0,410.3 846.0,411.5 840.6,412.2 835.1,412.5 829.6,412.5 824.0,412.5 818.5,412.4 813.0,412.4 807.5,412.4 801.9,412.6 796.3,413.0 790.5,413.6 784.5,414.3 778.3,415.1 771.8,416.1 765.0,417.0 757.9,417.8 750.6,418.3 743.2,418.3 735.9,417.5 729.1,415.6 723.0,412.5 718.1,408.2 714.8,402.7 713.2,396.6 713.7,390.3 716.0,384.3 720.1,379.3 725.6,375.4 732.1,372.8 739.3,371.2 746.9,370.4 754.5,370.3 762.2,370.4 769.8,370.7 777.3,370.9 784.8,371.0 792.2,370.8 799.8,370.4 807.6,369.7 815.6,368.8 823.9,367.8 832.5,367.0 841.3,366.5 850.1,366.7 858.7,368.0 866.7,370.8 873.6,375.3 878.7,381.5 881.8,388.9 882.4,397.0 880.5,404.8 876.2,411.5 870.2,416.7 862.7,420.2 854.4,422.1 845.7,422.8 837.0,422.7 828.3,422.2 819.8,421.5 811.6,420.9 803.5,420.5 795.5,420.3 787.4,420.5 779.3,421.0 771.0,421.7 762.5,422.5 753.7,423.1 744.8,423.2 736.0,422.6 727.5,420.8 719.8,417.5 713.5,412.4 708.9,405.9 706.7,398.2 706.8,390.2 709.5,382.8 714.2,376.7 720.6,372.2 728.2,369.4 736.4,368.2 744.8,368.0 753.1,368.6 761.1,369.5 768.9,370.6 776.3,371.7 783.4,372.5 790.3,373.1 797.0,373.4 803.7,373.5 810.4,373.3 817.2,372.9 824.1,372.4 831.2,371.9 838.5,371.6 845.7,371.8 852.8,372.6 859.5,374.3 865.6,377.0 870.5,381.0 874.1,385.9 876.0,391.6 876.1,397.4 874.4,403.0 871.1,407.7 866.4,411.4 860.8,413.9 854.6,415.2 848.1,415.6 841.6,415.3 835.3,414.5 829.3,413.5 823.6,412.3 818.3,411.1 813.4,410.0 808.8,409.1 804.5,408.3 800.4,407.6 796.4,407.2 792.6,407.0 788.8,406.9 784.9,407.1 781.0,407.4 777.0,407.9 772.8,408.5 768.4,409.2 763.8,409.9 759.0,410.6 753.9,411.2 748.7,411.6 743.5,411.6 738.3,411.1 733.3,410.0 728.8,408.3 724.9,405.7 722.0,402.5 720.1,398.8 719.5,394.8 720.1,390.9 721.9,387.2 724.8,384.2 728.5,381.8 732.9,380.2 737.6,379.2 742.6,378.9 747.5,379.0 752.4,379.5 757.1,380.2 761.5,381.0 765.7,381.8 769.7,382.6 773.4,383.3 776.9,383.9 780.2,384.4 783.4,384.8 786.5,384.9 789.6,385.0 792.7,384.9 795.8,384.6 799.1,384.1 802.5,383.6 806.1,382.8 810.0,382.0 814.2,381.0 818.7,380.0 823.5,379.0 828.6,378.0 834.0,377.1 839.6,376.5 845.4,376.3 851.2,376.7 856.7,377.9 861.7,379.9 865.9,382.8 869.1,386.5 871.0,390.9 871.5,395.6 870.5,400.3 868.2,404.5 864.5,408.0 860.0,410.7 854.7,412.5 848.9,413.6 843.0,414.0 837.0,414.0 831.0,413.7 825.2,413.2 819.5,412.8 813.9,412.4 808.5,412.1 803.1,412.0 797.6,412.2 792.2,412.5 786.5,413.1 780.7,413.8 774.6,414.7 768.2,415.7 761.5,416.7 754.6,417.5 747.4,417.9 740.1,417.8 733.1,416.8 726.5,414.7 720.7,411.4 716.2,406.9 713.3,401.3 712.2,395.1 713.0,389.0 715.8,383.4 720.1,378.7 725.7,375.3 732.2,373.1 739.2,371.9 746.4,371.6 753.7,371.8 760.8,372.3 767.7,373.0 774.5,373.6 781.0,374.0 787.5,374.3 793.9,374.2 800.4,374.0 807.0,373.4 813.8,372.7 820.9,371.9 828.2,371.0 835.8,370.3 843.5,370.0 851.2,370.4 858.7,371.7 865.5,374.3 871.4,378.2 875.8,383.5 878.4,389.7 878.9,396.4 877.4,402.9 873.9,408.6 868.8,413.1 862.6,416.2 855.6,418.0 848.2,418.7 840.7,418.6 833.3,418.0 826.2,417.2 819.3,416.3 812.7,415.5 806.4,414.8 800.2,414.4 794.0,414.3 787.9,414.4 781.8,414.7 775.4,415.3 768.9,416.0 762.2,416.7 755.2,417.3 748.1,417.7 740.9,417.5 734.0,416.6 727.4,414.6 721.7,411.5 717.0,407.3 713.9,402.0 712.6,396.2 713.1,390.3 715.3,384.8 719.2,380.3 724.3,376.9 730.3,374.7 736.8,373.6 743.5,373.4 750.1,373.7 756.6,374.5 762.8,375.5 768.7,376.5 774.3,377.4 779.6,378.3 784.7,378.9 789.6,379.3 794.4,379.6 799.2,379.5 804.0,379.3 808.9,378.9 814.0,378.3 819.2,377.6 824.7,376.8 830.5,376.1 836.4,375.5 842.5,375.3 848.6,375.5 854.5,376.3 860.1,378.0 865.0,380.6 868.9,384.1 871.6,388.4 872.9,393.1 872.6,398.0 870.9,402.6 867.8,406.5 863.7,409.5 858.7,411.6 853.2,412.8 847.5,413.3 841.7,413.2 836.0,412.6 830.6,411.9 825.4,411.0 820.4,410.1 815.8,409.3 811.4,408.6 807.1,408.0 803.1,407.6 799.1,407.4 795.1,407.4 791.1,407.6 787.1,408.0 782.9,408.5 778.5,409.2 773.8,410.1 768.9,411.0 763.7,411.9 758.2,412.8 752.4,413.5 746.5,413.8 740.6,413.7 734.7,412.9 729.3,411.3 724.5,408.8 720.6,405.3 718.0,401.1 716.7,396.4 717.0,391.6 718.7,387.0 721.8,383.1 726.0,380.0 731.0,377.8 736.5,376.5 742.4,375.9 748.3,375.9 754.2,376.3 759.9,376.8 765.4,377.5 770.7,378.2 775.9,378.8 780.8,379.2 785.6,379.4 790.4,379.5 795.2,379.3 800.1,379.0 805.2,378.4 810.4,377.7 815.9,376.8 821.7,375.9 827.8,374.9 834.1,374.1 840.7,373.6 847.4,373.6 853.9,374.3 860.1,375.9 865.6,378.6 870.2,382.4 873.3,387.1 874.9,392.5 874.8,398.1 872.9,403.3 869.5,407.9 864.8,411.4 859.2,413.9 853.0,415.3 846.5,415.9 839.9,415.9 833.3,415.4 827.0,414.8 820.8,414.1 814.9,413.4 809.1,412.9 803.5,412.6 797.9,412.5 792.4,412.7 786.7,413.1 780.9,413.6 774.9,414.4 768.6,415.3 762.1,416.2 755.2,416.9 748.2,417.4 741.1,417.3 734.2,416.5 727.7,414.7 721.9,411.7 717.2,407.5 714.0,402.2 712.6,396.4 713.1,390.4 715.3,384.9 719.2,380.2 724.3,376.7 730.4,374.4 737.0,373.1 743.9,372.8 750.8,373.0 757.5,373.6 764.0,374.4 770.3,375.2 776.3,375.9 782.1,376.5 787.8,376.9 793.4,377.0 798.9,376.9 804.6,376.5 810.4,376.0 816.4,375.2 822.7,374.4 829.2,373.6 836.0,373.0 842.8,372.7 849.8,372.9 856.5,374.0 862.7,376.1 868.1,379.3 872.3,383.6 875.0,388.8 876.0,394.5 875.2,400.2 872.7,405.4 868.7,409.6 863.5,412.8 857.5,414.8 851.1,415.8 844.5,416.0 837.9,415.6 831.5,414.9 825.3,414.0 819.5,413.1 813.9,412.3 808.5,411.6 803.3,411.1 798.2,410.9 793.2,410.8 788.2,411.0 783.0,411.4 777.7,412.0 772.3,412.7 766.5,413.5 760.5,414.3 754.3,415.0 747.9,415.4 741.4,415.3 735.1,414.6 729.1,412.9 723.9,410.3 719.6,406.6 716.5,402.1 715.0,397.0 715.2,391.7 716.9,386.8 720.1,382.5 724.5,379.2 729.8,376.9 735.6,375.6 741.8,375.0 747.9,375.2 754.0,375.7 759.9,376.5 765.5,377.3 770.8,378.2 775.9,378.9 780.8,379.5 785.5,380.0 790.1,380.2 794.7,380.2 799.3,380.0 804.0,379.6 808.8,379.1 813.8,378.3 819.1,377.5 824.7,376.6 830.5,375.8 836.6,375.1 842.8,374.8 849.1,374.9 855.2,375.8 860.9,377.6 865.9,380.3 869.8,384.1 872.5,388.6 873.7,393.6 873.2,398.7 871.2,403.5 867.9,407.5 863.4,410.6 858.1,412.7 852.2,413.9 846.2,414.4 840.0,414.2 834.0,413.7 828.2,413.0 822.6,412.3 817.3,411.5 812.1,410.9 807.2,410.4 802.3,410.1 797.6,410.0 792.8,410.1 787.9,410.5 782.9,411.0 777.7,411.7 772.3,412.6 766.6,413.5 760.6,414.4 754.4,415.1 747.9,415.6 741.4,415.6 735.0,414.8 728.9,413.2 723.6,410.5 719.2,406.8 716.2,402.1 714.7,396.9 714.9,391.5 716.8,386.4 720.1,382.0 724.7,378.6 730.1,376.3 736.2,374.9 742.5,374.4 748.9,374.4 755.2,374.9 761.4,375.6 767.3,376.3 773.0,377.0 778.4,377.6 783.7,378.0 788.9,378.3 794.1,378.2 799.3,378.0 804.7,377.6 810.2,376.9 815.9,376.1 821.9,375.2 828.1,374.4 834.7,373.6 841.4,373.2 848.2,373.2 854.8,374.1 861.0,375.8 866.6,378.7 871.0,382.7 874.1,387.6 875.5,393.1 875.1,398.8 873.0,404.0 869.4,408.5 864.6,411.9 858.8,414.2 852.5,415.5 845.9,415.9 839.3,415.8 832.9,415.2 826.6,414.4 820.6,413.6 814.8,412.9 809.2,412.3 803.8,411.9 798.5,411.7 793.2,411.7 787.9,412.0 782.4,412.5 776.8,413.1 770.9,413.9 764.8,414.8 758.4,415.6 751.7,416.2 745.0,416.5 738.2,416.1 731.7,414.9 725.8,412.7 720.7,409.3 716.8,405.0 714.4,399.8 713.7,394.2 714.8,388.6 717.5,383.7 721.6,379.7 726.9,376.7 732.8,374.9 739.2,374.0 745.8,373.9 752.2,374.3 758.6,375.0 764.6,375.8 770.5,376.7 776.0,377.4 781.4,378.0 786.6,378.4 791.7,378.6 796.7,378.5 801.9,378.3 807.1,377.8 812.5,377.2 818.2,376.4 824.1,375.5 830.3,374.7 836.7,374.1 843.2,373.8 849.8,374.0 856.1,375.0 862.0,377.0 867.2,380.0 871.2,384.1 873.8,389.0 874.8,394.3 874.1,399.7 871.8,404.6 868.1,408.7 863.2,411.7 857.6,413.7 851.4,414.8 845.1,415.1 838.8,414.8 832.6,414.2 826.7,413.4 821.0,412.5 815.5,411.7 810.3,411.1 805.3,410.6 800.4,410.3 795.6,410.2 790.7,410.4 785.8,410.7 780.7,411.3 775.4,412.0 769.9,412.8 764.1,413.7 758.1,414.5 751.8,415.2 745.4,415.4 738.9,415.1 732.7,414.1 727.0,412.1 722.0,409.0 718.2,405.0 715.7,400.2 714.8,394.9 715.6,389.7 718.0,384.9 721.8,380.9 726.6,378.0 732.2,376.1 738.2,375.0 744.5,374.8 750.7,375.0 756.8,375.6 762.7,376.4 768.4,377.2 773.8,377.9 778.9,378.6 783.9,379.0 788.8,379.3 793.7,379.3 798.6,379.1 803.6,378.7 808.7,378.1 814.0,377.4 819.6,376.5 825.5,375.6 831.6,374.8 838.0,374.2 844.5,374.0 851.0,374.3 857.2,375.5 863.0,377.6 867.9,380.8 871.6,385.0 873.9,390.0 874.6,395.4 873.6,400.6 871.0,405.4 867.0,409.3 862.0,412.2 856.3,414.0 850.1,414.9 843.7,415.1 837.4,414.8 831.2,414.2 825.2,413.5 819.5,412.7 814.0,412.0 808.7,411.4 803.6,411.0 798.5,410.9 793.5,410.9 788.4,411.2 783.2,411.7 777.8,412.4 772.2,413.2 766.3,414.1 760.1,415.0 753.6,415.7 747.0,416.0 740.4,415.9 733.9,415.0 727.8,413.2 722.5,410.3 718.2,406.3 715.4,401.4 714.1,396.0 714.6,390.5 716.8,385.4 720.4,381.1 725.2,377.9 730.9,375.7 737.1,374.5 743.6,374.1 750.0,374.3 756.4,374.8 762.5,375.6 768.4,376.4 774.1,377.1 779.5,377.7 784.8,378.2 789.9,378.4 795.1,378.4 800.2,378.1 805.5,377.7 811.0,377.1 816.6,376.3 822.6,375.4 828.8,374.6 835.2,373.8 841.9,373.5 848.6,373.6 855.1,374.4 861.2,376.3 866.6,379.1 870.9,383.1 873.8,388.0 875.1,393.4 874.7,398.9 872.6,404.0 869.0,408.4 864.2,411.7 858.6,413.9 852.4,415.1 845.9,415.5 839.4,415.3 833.1,414.7 827.0,414.0 821.1,413.1 815.5,412.4 810.1,411.7 804.8,411.3 799.7,411.0 794.7,411.0 789.6,411.2 784.4,411.6 779.0,412.2 773.5,412.9 767.7,413.8 761.6,414.6 755.2,415.4 748.7,415.9 742.1,415.9 735.6,415.2 729.4,413.6 723.9,411.0 719.4,407.3 716.2,402.7 714.5,397.5 714.5,392.0 716.2,386.8 719.4,382.3 723.9,378.8 729.3,376.4 735.3,375.0 741.7,374.4 748.1,374.5 754.4,375.0 760.5,375.7 766.3,376.5 771.9,377.3 777.3,378.0 782.5,378.5 787.5,378.9 792.4,379.0 797.4,378.9 802.4,378.6 807.6,378.1 812.9,377.4 818.5,376.5 824.4,375.7 830.5,374.8 836.9,374.2 843.4,373.9 849.9,374.2 856.2,375.2 862.1,377.2 867.2,380.2 871.1,384.2 873.7,389.1 874.7,394.4 873.9,399.7 871.6,404.6 867.9,408.7 863.0,411.7 857.4,413.7 851.3,414.8 844.9,415.1 838.6,414.8 832.4,414.2 826.5,413.4 820.7,412.6 815.3,411.9 810.0,411.3 805.0,410.8 800.0,410.6 795.1,410.5 790.1,410.7 785.0,411.1 779.8,411.7 774.4,412.5 768.7,413.3 762.8,414.2 756.6,415.0 750.2,415.6 743.6,415.7 737.1,415.2 730.9,413.9 725.3,411.6 720.5,408.2 717.0,403.8 714.9,398.7 714.6,393.3 715.8,388.1 718.7,383.4 722.9,379.7 728.1,377.0 733.9,375.3 740.2,374.6 746.5,374.5 752.9,374.9 759.0,375.5 764.9,376.3 770.6,377.1 776.0,377.8 781.2,378.3 786.3,378.7 791.4,378.8 796.4,378.8 801.4,378.5 806.6,378.0 812.0,377.3 817.6,376.5 823.5,375.6 829.6,374.7 836.0,374.0 842.6,373.7 849.2,373.9 855.6,374.8 861.6,376.7 866.9,379.6 871.0,383.6 873.8,388.5 874.9,393.9 874.3,399.3 872.1,404.3 868.4,408.5 863.6,411.7 858.0,413.8 851.8,415.0 845.4,415.4 839.0,415.1 832.7,414.6 826.6,413.8 820.8,413.0 815.2,412.2 809.8,411.6 804.6,411.2 799.5,411.0 794.5,411.0 789.4,411.2 784.2,411.6 778.8,412.2 773.3,413.0 767.4,413.9 761.3,414.8 754.9,415.5 748.4,416.0 741.7,415.9 735.2,415.2 729.0,413.6 723.5,410.9 719.1,407.2 715.9,402.5 714.3,397.1 714.5,391.7 716.3,386.5 719.6,382.0 724.2,378.5 729.7,376.1 735.8,374.8 742.1,374.2 748.6,374.3 754.9,374.8 761.1,375.6 767.0,376.4 772.6,377.2 778.0,377.8 783.2,378.3 788.4,378.6 793.4,378.7 798.5,378.5 803.6,378.2 808.9,377.6 814.4,376.9 820.1,376.0 826.2,375.2 832.4,374.4 838.9,373.8 845.5,373.7 852.1,374.2 858.4,375.5 864.1,377.9 868.9,381.3 872.4,385.7 874.5,390.8 874.9,396.3 873.6,401.6 870.7,406.3 866.4,410.1 861.2,412.8 855.3,414.4 849.0,415.2 842.6,415.3 836.3,414.8 830.1,414.2 824.1,413.3 818.5,412.5 813.0,411.8 807.8,411.3 802.7,410.9 797.7,410.7 792.7,410.8 787.6,411.1 782.5,411.6 777.1,412.3 771.5,413.1 765.7,413.9 759.5,414.8 753.2,415.5 746.6,415.8 740.1,415.6 733.7,414.7 727.7,412.8 722.5,409.9 718.3,406.0 715.6,401.1 714.4,395.8 715.0,390.4 717.1,385.4 720.8,381.2 725.5,378.0 731.2,375.9 737.3,374.8 743.6,374.4" fill="none" stroke="#fbf79a" stroke-width="1.4" stroke-linejoin="round"/>
<rect x="685.60" y="360.00" width="218.00" height="69.60" fill="none" stroke="#e6e6e6" stroke-width="1.6"/>
<line x1="707.40" y1="429.60" x2="707.40" y2="423.60" stroke="#e6e6e6" stroke-width="1.3"/>
<line x1="729.20" y1="429.60" x2="729.20" y2="423.60" stroke="#e6e6e6" stroke-width="1.3"/>
<line x1="729.20" y1="360.00" x2="729.20" y2="366.00" stroke="#e6e6e6" stroke-width="1.3"/>
<line x1="751.00" y1="429.60" x2="751.00" y2="423.60" stroke="#e6e6e6" stroke-width="1.3"/>
<line x1="772.80" y1="429.60" x2="772.80" y2="423.60" stroke="#e6e6e6" stroke-width="1.3"/>
<line x1="772.80" y1="360.00" x2="772.80" y2="366.00" stroke="#e6e6e6" stroke-width="1.3"/>
<line x1="794.60" y1="429.60" x2="794.60" y2="423.60" stroke="#e6e6e6" stroke-width="1.3"/>
<line x1="816.40" y1="429.60" x2="816.40" y2="423.60" stroke="#e6e6e6" stroke-width="1.3"/>
<line x1="816.40" y1="360.00" x2="816.40" y2="366.00" stroke="#e6e6e6" stroke-width="1.3"/>
<line x1="838.20" y1="429.60" x2="838.20" y2="423.60" stroke="#e6e6e6" stroke-width="1.3"/>
<line x1="860.00" y1="429.60" x2="860.00" y2="423.60" stroke="#e6e6e6" stroke-width="1.3"/>
<line x1="860.00" y1="360.00" x2="860.00" y2="366.00" stroke="#e6e6e6" stroke-width="1.3"/>
<line x1="881.80" y1="429.60" x2="881.80" y2="423.60" stroke="#e6e6e6" stroke-width="1.3"/>
<line x1="685.60" y1="394.80" x2="691.60" y2="394.80" stroke="#e6e6e6" stroke-width="1.3"/>
<line x1="903.60" y1="394.80" x2="897.60" y2="394.80" stroke="#e6e6e6" stroke-width="1.3"/>
<text x="685.60" y="443.10" text-anchor="middle" font-size="10.3" fill="#ededed">-5</text>
<text x="707.40" y="443.10" text-anchor="middle" font-size="10.3" fill="#ededed">-4</text>
<text x="729.20" y="443.10" text-anchor="middle" font-size="10.3" fill="#ededed">-3</text>
<text x="751.00" y="443.10" text-anchor="middle" font-size="10.3" fill="#ededed">-2</text>
<text x="772.80" y="443.10" text-anchor="middle" font-size="10.3" fill="#ededed">-1</text>
<text x="794.60" y="443.10" text-anchor="middle" font-size="10.3" fill="#ededed">0</text>
<text x="816.40" y="443.10" text-anchor="middle" font-size="10.3" fill="#ededed">1</text>
<text x="838.20" y="443.10" text-anchor="middle" font-size="10.3" fill="#ededed">2</text>
<text x="860.00" y="443.10" text-anchor="middle" font-size="10.3" fill="#ededed">3</text>
<text x="881.80" y="443.10" text-anchor="middle" font-size="10.3" fill="#ededed">4</text>
<text x="903.60" y="443.10" text-anchor="middle" font-size="10.3" fill="#ededed">5</text>
<text x="682.10" y="365.30" text-anchor="end" font-size="10.3" fill="#ededed">5</text>
<text x="682.10" y="400.10" text-anchor="end" font-size="10.3" fill="#ededed">0</text>
<text x="682.10" y="434.90" text-anchor="end" font-size="10.3" fill="#ededed">-5</text>
<text x="794.60" y="455.10" text-anchor="middle" font-size="10" font-weight="bold" fill="#2d3236">x(t)</text>
<text x="666.10" y="401.10" text-anchor="middle" font-size="10" font-weight="bold" fill="#2d3236" transform="rotate(-90 666.10 397.80)">v(t)</text>
<rect x="938.80" y="330.80" width="276.40" height="128.40" fill="#686868" stroke="#0a0a0a" stroke-width="1.6"/>
<text x="1077.00" y="340.20" text-anchor="middle" font-size="9.7" font-weight="bold" fill="#2d3236">Phase Diagram</text>
<line x1="978.55" y1="360.00" x2="978.55" y2="429.60" stroke="#7c7c7c" stroke-width="0.8" stroke-dasharray="1.5,1.5"/>
<line x1="1000.45" y1="360.00" x2="1000.45" y2="429.60" stroke="#7c7c7c" stroke-width="0.8" stroke-dasharray="1.5,1.5"/>
<line x1="1022.35" y1="360.00" x2="1022.35" y2="429.60" stroke="#7c7c7c" stroke-width="0.8" stroke-dasharray="1.5,1.5"/>
<line x1="1044.25" y1="360.00" x2="1044.25" y2="429.60" stroke="#7c7c7c" stroke-width="0.8" stroke-dasharray="1.5,1.5"/>
<line x1="1066.15" y1="360.00" x2="1066.15" y2="429.60" stroke="#7c7c7c" stroke-width="0.8" stroke-dasharray="1.5,1.5"/>
<line x1="1088.05" y1="360.00" x2="1088.05" y2="429.60" stroke="#7c7c7c" stroke-width="0.8" stroke-dasharray="1.5,1.5"/>
<line x1="1109.95" y1="360.00" x2="1109.95" y2="429.60" stroke="#7c7c7c" stroke-width="0.8" stroke-dasharray="1.5,1.5"/>
<line x1="1131.85" y1="360.00" x2="1131.85" y2="429.60" stroke="#7c7c7c" stroke-width="0.8" stroke-dasharray="1.5,1.5"/>
<line x1="1153.75" y1="360.00" x2="1153.75" y2="429.60" stroke="#7c7c7c" stroke-width="0.8" stroke-dasharray="1.5,1.5"/>
<line x1="1175.65" y1="360.00" x2="1175.65" y2="429.60" stroke="#7c7c7c" stroke-width="0.8" stroke-dasharray="1.5,1.5"/>
<line x1="989.50" y1="360.00" x2="989.50" y2="429.60" stroke="#8e8e8e" stroke-width="1"/>
<line x1="1011.40" y1="360.00" x2="1011.40" y2="429.60" stroke="#8e8e8e" stroke-width="1"/>
<line x1="1033.30" y1="360.00" x2="1033.30" y2="429.60" stroke="#8e8e8e" stroke-width="1"/>
<line x1="1055.20" y1="360.00" x2="1055.20" y2="429.60" stroke="#8e8e8e" stroke-width="1"/>
<line x1="1077.10" y1="360.00" x2="1077.10" y2="429.60" stroke="#8e8e8e" stroke-width="1"/>
<line x1="1099.00" y1="360.00" x2="1099.00" y2="429.60" stroke="#8e8e8e" stroke-width="1"/>
<line x1="1120.90" y1="360.00" x2="1120.90" y2="429.60" stroke="#8e8e8e" stroke-width="1"/>
<line x1="1142.80" y1="360.00" x2="1142.80" y2="429.60" stroke="#8e8e8e" stroke-width="1"/>
<line x1="1164.70" y1="360.00" x2="1164.70" y2="429.60" stroke="#8e8e8e" stroke-width="1"/>
<line x1="967.60" y1="394.80" x2="1186.60" y2="394.80" stroke="#8a8a8a" stroke-width="0.9"/>
<line x1="967.60" y1="412.20" x2="1186.60" y2="412.20" stroke="#8a8a8a" stroke-width="0.9"/>
<line x1="967.60" y1="377.40" x2="1186.60" y2="377.40" stroke="#8a8a8a" stroke-width="0.9"/>
<polyline points="1077.1,394.8 1077.1,394.6 1077.2,394.1 1077.6,393.3 1078.2,392.2 1079.3,390.8 1080.8,389.2 1082.8,387.4 1085.4,385.6 1088.6,383.7 1092.4,381.7 1096.8,379.9 1101.8,378.3 1107.2,376.9 1113.0,375.9 1119.1,375.4 1125.2,375.6 1131.1,376.6 1136.5,378.7 1141.1,381.7 1144.7,385.6 1146.8,390.3 1147.4,395.4 1146.4,400.5 1143.9,405.3 1139.9,409.3 1134.8,412.5 1128.9,414.8 1122.3,416.1 1115.5,416.8 1108.6,416.8 1101.7,416.4 1095.0,415.6 1088.6,414.6 1082.6,413.5 1076.9,412.2 1071.6,410.9 1066.8,409.5 1062.4,408.1 1058.4,406.7 1054.9,405.3 1051.8,404.1 1049.0,403.0 1046.6,402.0 1044.5,401.3 1042.5,400.8 1040.7,400.6 1038.8,400.6 1037.0,400.9 1035.0,401.5 1032.7,402.3 1030.3,403.1 1027.5,404.1 1024.4,404.9 1021.2,405.5 1017.7,405.8 1014.3,405.6 1011.0,404.7 1008.1,403.2 1005.8,400.9 1004.3,398.0 1003.8,394.7 1004.4,391.0 1006.2,387.3 1009.1,383.8 1013.1,380.7 1018.0,378.0 1023.6,375.8 1029.9,374.1 1036.6,372.7 1043.7,371.6 1051.2,370.6 1058.9,369.7 1067.0,368.7 1075.4,367.7 1084.1,366.6 1093.1,365.6 1102.4,364.7 1112.0,364.1 1121.7,364.2 1131.2,365.3 1140.1,367.7 1148.0,371.8 1154.4,377.7 1158.6,385.1 1160.4,393.5 1159.4,402.0 1155.9,409.8 1150.1,416.2 1142.6,420.9 1133.9,423.9 1124.4,425.5 1114.7,426.0 1104.8,425.9 1095.2,425.3 1085.7,424.5 1076.5,423.7 1067.5,422.8 1058.8,421.9 1050.5,420.8 1042.5,419.5 1035.0,417.9 1028.0,415.8 1021.8,413.2 1016.5,410.0 1012.3,406.2 1009.4,402.0 1007.8,397.7 1007.6,393.5 1008.6,389.7 1010.7,386.7 1013.6,384.5 1017.1,383.2 1020.8,382.7 1024.6,383.0 1028.2,384.0 1031.4,385.4 1034.1,387.1 1036.2,389.0 1037.7,391.0 1038.6,392.9 1038.9,394.7 1038.7,396.3 1038.0,397.5 1037.0,398.5 1035.8,399.0 1034.4,399.1 1033.1,398.8 1031.9,398.1 1031.0,397.0 1030.6,395.6 1030.5,394.0 1031.1,392.3 1032.2,390.5 1033.8,388.8 1035.9,387.2 1038.5,385.9 1041.5,384.9 1044.7,384.2 1048.1,383.9 1051.6,383.9 1055.0,384.2 1058.2,384.9 1061.2,385.8 1063.8,387.0 1066.1,388.5 1067.8,390.1 1069.0,391.9 1069.6,393.8 1069.6,395.7 1069.0,397.7 1067.8,399.6 1066.0,401.4 1063.7,403.1 1060.8,404.5 1057.6,405.8 1054.0,406.7 1050.1,407.3 1046.1,407.6 1042.1,407.4 1038.2,406.8 1034.6,405.8 1031.4,404.3 1028.7,402.4 1026.6,400.3 1025.3,397.9 1024.7,395.4 1024.8,393.1 1025.7,390.9 1027.2,389.1 1029.3,387.7 1031.6,386.8 1034.2,386.5 1036.8,386.6 1039.3,387.2 1041.6,388.2 1043.5,389.5 1044.9,391.2 1045.7,393.1 1045.9,395.2 1045.5,397.4 1044.3,399.5 1042.5,401.6 1040.0,403.5 1037.0,405.2 1033.5,406.4 1029.8,407.2 1025.8,407.3 1022.0,406.7 1018.4,405.3 1015.4,403.2 1013.2,400.3 1012.0,396.9 1011.9,393.1 1013.1,389.3 1015.4,385.6 1018.8,382.3 1023.2,379.5 1028.4,377.4 1034.1,375.8 1040.2,374.8 1046.6,374.3 1053.1,374.1 1059.6,374.3 1066.0,374.6 1072.3,375.2 1078.3,375.9 1084.1,376.7 1089.7,377.6 1094.9,378.7 1099.8,379.9 1104.3,381.1 1108.4,382.5 1112.1,383.9 1115.3,385.3 1118.0,386.7 1120.4,388.0 1122.3,389.2 1123.9,390.2 1125.2,391.0 1126.3,391.5 1127.3,391.8 1128.2,391.9 1129.2,391.7 1130.2,391.3 1131.4,390.8 1132.7,390.3 1134.2,389.8 1135.8,389.5 1137.5,389.5 1139.2,389.8 1140.6,390.4 1141.9,391.5 1142.6,393.1 1142.9,395.0 1142.5,397.2 1141.4,399.6 1139.5,402.0 1136.8,404.4 1133.5,406.7 1129.4,408.7 1124.7,410.5 1119.6,412.0 1113.9,413.3 1107.9,414.4 1101.6,415.4 1095.0,416.3 1088.1,417.1 1081.0,417.8 1073.6,418.5 1066.1,419.1 1058.3,419.6 1050.5,419.8 1042.6,419.6 1034.9,418.9 1027.5,417.5 1020.7,415.2 1014.8,411.9 1010.0,407.7 1006.8,402.6 1005.2,397.1 1005.3,391.6 1007.2,386.4 1010.5,382.0 1015.1,378.6 1020.6,376.4 1026.6,375.2 1032.8,375.0 1039.0,375.5 1044.9,376.5 1050.4,378.0 1055.4,379.8 1059.8,381.8 1063.6,383.9 1066.7,386.0 1069.1,388.1 1070.9,390.1 1072.1,392.0 1072.7,393.7 1072.8,395.1 1072.5,396.3 1071.9,397.2 1071.1,397.7 1070.1,398.0 1069.1,397.9 1068.1,397.6 1067.4,396.9 1066.8,396.0 1066.6,394.9 1066.8,393.6 1067.4,392.3 1068.4,390.8 1069.8,389.4 1071.8,388.1 1074.1,386.8 1076.8,385.7 1079.8,384.8 1083.0,384.1 1086.4,383.7 1090.0,383.5 1093.5,383.5 1097.0,383.9 1100.4,384.4 1103.5,385.3 1106.4,386.3 1108.9,387.5 1110.9,388.8 1112.6,390.2 1113.8,391.6 1114.6,392.8 1115.1,393.9 1115.2,394.8 1115.1,395.4 1114.9,395.7 1114.6,395.6 1114.4,395.1 1114.4,394.3 1114.8,393.2 1115.5,391.9 1116.6,390.3 1118.3,388.7 1120.5,387.0 1123.2,385.4 1126.4,384.1 1129.9,383.1 1133.7,382.7 1137.5,382.9 1141.1,383.9 1144.2,385.8 1146.6,388.6 1148.1,392.0 1148.3,396.0 1147.3,400.1 1145.0,404.2 1141.4,408.0 1136.7,411.2 1131.2,413.8 1124.8,415.9 1117.9,417.5 1110.6,418.6 1103.0,419.5 1095.1,420.2 1087.0,420.8 1078.7,421.4 1070.3,421.9 1061.7,422.3 1053.0,422.6 1044.2,422.5 1035.6,421.9 1027.3,420.5 1019.5,418.2 1012.7,414.6 1007.2,409.9 1003.3,404.2 1001.3,397.8 1001.4,391.3 1003.5,385.2 1007.3,380.0 1012.6,376.1 1019.0,373.5 1025.9,372.1 1033.1,371.8 1040.3,372.3 1047.2,373.4 1053.7,374.9 1059.7,376.6 1065.2,378.5 1070.0,380.4 1074.2,382.4 1077.8,384.2 1080.9,386.0 1083.4,387.6 1085.5,389.0 1087.1,390.1 1088.5,390.9 1089.6,391.4 1090.6,391.6 1091.6,391.4 1092.8,390.8 1094.2,389.9 1095.9,388.7 1098.1,387.1 1100.8,385.3 1104.0,383.3 1108.0,381.3 1112.6,379.2 1117.8,377.4 1123.5,375.9 1129.6,375.0 1135.8,375.0 1141.9,376.1 1147.4,378.6 1152.0,382.4 1155.1,387.4 1156.5,393.3 1156.0,399.7 1153.5,405.9 1149.1,411.4 1143.2,415.9 1135.9,419.3 1127.8,421.8 1119.1,423.4 1109.9,424.5 1100.4,425.3 1090.7,426.0 1080.7,426.6 1070.6,427.3 1060.3,428.0 1049.8,428.5 1039.1,428.5 1028.6,427.8 1018.5,425.9 1009.2,422.4 1001.3,417.0 995.4,409.7 992.1,400.9 991.6,391.6 994.1,382.6 999.2,374.9 1006.4,369.1 1015.1,365.2 1024.8,363.1 1034.9,362.3 1045.2,362.4 1055.3,363.0 1065.2,363.9 1074.7,364.9 1084.0,365.9 1092.9,367.0 1101.5,368.1 1109.7,369.3 1117.5,370.9 1124.7,372.9 1131.2,375.4 1136.8,378.5 1141.4,382.2 1144.7,386.3 1146.7,390.6 1147.4,394.9 1146.7,398.8 1144.9,402.1 1142.2,404.5 1138.9,406.1 1135.3,406.7 1131.5,406.6 1127.9,405.8 1124.6,404.6 1121.8,402.9 1119.5,401.1 1117.8,399.2 1116.7,397.3 1116.2,395.6 1116.2,394.1 1116.6,392.9 1117.4,392.0 1118.3,391.5 1119.4,391.4 1120.4,391.7 1121.3,392.4 1121.9,393.4 1122.1,394.8 1121.9,396.3 1121.2,397.9 1119.9,399.6 1118.2,401.1 1115.9,402.6 1113.3,403.7 1110.3,404.7 1107.1,405.3 1103.8,405.5 1100.4,405.5 1097.1,405.1 1094.0,404.4 1091.1,403.5 1088.5,402.3 1086.4,400.8 1084.7,399.2 1083.6,397.5 1083.1,395.6 1083.1,393.7 1083.8,391.8 1085.0,389.9 1086.8,388.2 1089.1,386.6 1092.0,385.2 1095.2,384.0 1098.7,383.1 1102.5,382.6 1106.4,382.4 1110.3,382.5 1114.0,383.1 1117.6,384.1 1120.7,385.5 1123.4,387.2 1125.5,389.2 1126.9,391.4 1127.7,393.6 1127.7,395.8 1127.0,397.8 1125.8,399.4 1124.2,400.7 1122.2,401.5 1120.0,401.9 1117.8,401.7 1115.6,401.2 1113.8,400.2 1112.3,398.8 1111.3,397.1 1110.9,395.3 1111.0,393.2 1111.8,391.1 1113.3,389.1 1115.4,387.1 1118.1,385.4 1121.4,384.0 1124.9,383.0 1128.7,382.6 1132.5,383.0 1136.1,384.1 1139.2,386.0 1141.5,388.6 1143.0,391.9 1143.3,395.7 1142.4,399.5 1140.3,403.3 1137.1,406.8 1132.8,409.8 1127.7,412.2 1122.0,413.9 1115.7,415.2 1109.2,416.0 1102.4,416.4 1095.6,416.5 1088.8,416.4 1082.0,416.1 1075.4,415.7 1068.9,415.2 1062.6,414.5 1056.5,413.7 1050.7,412.7 1045.3,411.5 1040.2,410.1 1035.7,408.4 1031.7,406.6 1028.3,404.6 1025.5,402.5 1023.4,400.4 1022.0,398.3 1021.2,396.5 1020.9,394.9 1021.1,393.6 1021.6,392.8 1022.3,392.4 1023.1,392.4 1023.8,392.7 1024.4,393.4 1024.7,394.2 1024.7,395.2 1024.4,396.2 1023.8,397.1 1023.0,397.9 1021.9,398.3 1020.8,398.4 1019.7,398.1 1018.8,397.4 1018.1,396.2 1017.9,394.7 1018.2,392.8 1019.2,390.7 1020.8,388.5 1023.1,386.3 1026.2,384.2 1029.8,382.3 1034.0,380.6 1038.7,379.2 1043.8,378.0 1049.3,377.1 1054.9,376.4 1060.8,375.9 1066.8,375.6 1072.9,375.4 1079.0,375.4 1085.0,375.6 1091.0,375.9 1096.9,376.4 1102.6,377.1 1108.0,378.1 1113.1,379.3 1117.7,380.9 1121.8,382.6 1125.3,384.7 1128.2,386.9 1130.3,389.2 1131.7,391.5 1132.4,393.6 1132.5,395.5 1132.0,397.0 1131.2,398.0 1130.1,398.6 1128.8,398.7 1127.6,398.4 1126.6,397.7 1125.8,396.7 1125.4,395.5 1125.4,394.1 1125.8,392.8 1126.7,391.5 1127.9,390.4 1129.4,389.6 1131.1,389.2 1132.9,389.2 1134.6,389.8 1136.0,390.8 1137.0,392.4 1137.5,394.5 1137.2,396.8 1136.2,399.3 1134.4,401.9 1131.7,404.4 1128.3,406.7 1124.3,408.7 1119.6,410.3 1114.5,411.7 1109.0,412.7 1103.3,413.4 1097.3,413.9 1091.3,414.2 1085.2,414.3 1079.0,414.2 1073.0,414.0 1067.0,413.6 1061.1,413.1 1055.5,412.3 1050.1,411.4 1045.1,410.3 1040.4,408.9 1036.2,407.3 1032.6,405.5 1029.5,403.6 1027.0,401.6 1025.2,399.6 1024.0,397.7 1023.4,396.0 1023.3,394.6 1023.5,393.5 1024.0,392.9 1024.7,392.7 1025.3,392.8 1025.9,393.3 1026.2,394.1 1026.3,395.1 1026.0,396.2 1025.4,397.3 1024.5,398.3 1023.2,399.1 1021.8,399.6 1020.2,399.7 1018.7,399.4 1017.4,398.5 1016.4,397.2 1015.9,395.5 1016.1,393.4 1016.9,391.0 1018.4,388.6 1020.8,386.1 1023.9,383.8 1027.7,381.7 1032.1,379.9 1037.0,378.4 1042.4,377.2 1048.1,376.2 1054.0,375.5 1060.2,375.0 1066.5,374.6 1072.9,374.4 1079.3,374.3 1085.8,374.3 1092.2,374.5 1098.5,375.0 1104.7,375.6 1110.6,376.6 1116.1,377.9 1121.2,379.5 1125.7,381.6 1129.5,384.0 1132.5,386.6 1134.6,389.5 1135.8,392.3 1136.2,395.0 1135.7,397.4 1134.6,399.3 1132.9,400.7 1130.9,401.5 1128.8,401.7 1126.6,401.4 1124.7,400.6 1123.0,399.4 1121.8,398.0 1121.0,396.3 1120.8,394.6 1121.2,392.9 1122.0,391.3 1123.3,389.9 1125.0,388.9 1127.0,388.2 1129.1,388.1 1131.2,388.5 1133.0,389.4 1134.5,390.9 1135.4,392.9 1135.7,395.2 1135.1,397.8 1133.8,400.5 1131.6,403.1 1128.6,405.4 1124.9,407.5 1120.6,409.2 1115.9,410.6 1110.8,411.5 1105.4,412.1 1099.9,412.4 1094.4,412.4 1088.8,412.2 1083.4,411.8 1078.2,411.2 1073.1,410.4 1068.4,409.5 1063.9,408.4 1059.8,407.3 1056.0,406.1 1052.7,404.8 1049.8,403.5 1047.2,402.2 1045.1,401.0 1043.3,400.0 1041.8,399.2 1040.5,398.6 1039.4,398.3 1038.3,398.3 1037.1,398.6 1035.9,399.1 1034.4,399.9 1032.6,400.9 1030.5,402.1 1028.0,403.2 1025.2,404.2 1022.1,405.0 1018.8,405.4 1015.5,405.3 1012.3,404.6 1009.4,403.1 1007.1,400.9 1005.6,398.1 1005.1,394.7 1005.7,391.0 1007.4,387.3 1010.4,383.8 1014.3,380.6 1019.2,377.9 1024.9,375.7 1031.2,373.9 1038.0,372.6 1045.2,371.4 1052.7,370.5 1060.5,369.6 1068.5,368.7 1076.9,367.8 1085.5,366.9 1094.4,366.1 1103.6,365.5 1112.9,365.2 1122.1,365.6 1131.1,367.0 1139.5,369.6 1146.8,373.8 1152.6,379.4 1156.3,386.4 1157.8,394.1 1156.8,401.9 1153.4,408.9 1148.0,414.7 1141.1,418.9 1133.0,421.5 1124.4,422.8 1115.5,423.2 1106.6,422.8 1097.9,421.9 1089.6,420.8 1081.6,419.6 1073.9,418.3 1066.7,417.1 1059.9,415.8 1053.6,414.4 1047.6,413.0 1042.1,411.6 1037.0,410.1 1032.5,408.4 1028.5,406.7 1025.0,404.9 1022.1,403.1 1019.7,401.4 1017.9,399.7 1016.7,398.1 1015.8,396.7 1015.4,395.6 1015.3,394.8 1015.4,394.2 1015.7,393.8 1016.0,393.6 1016.4,393.6 1016.8,393.5 1017.2,393.5 1017.6,393.4 1018.1,393.2 1018.6,392.8 1019.3,392.2 1020.3,391.4 1021.5,390.4 1023.1,389.2 1025.1,387.9 1027.5,386.5 1030.3,385.1 1033.6,383.7 1037.3,382.4 1041.4,381.1 1045.9,380.0 1050.7,378.9 1055.9,378.0 1061.3,377.2 1066.9,376.5 1072.8,375.9 1078.8,375.5 1085.0,375.1 1091.2,375.0 1097.4,375.1 1103.6,375.4 1109.6,376.1 1115.3,377.1 1120.6,378.6 1125.5,380.5 1129.6,382.9 1132.9,385.6 1135.3,388.7 1136.8,391.8 1137.2,394.9 1136.7,397.8 1135.4,400.1 1133.4,402.0 1130.9,403.2 1128.2,403.7 1125.4,403.6 1122.7,403.0 1120.3,401.9 1118.3,400.4 1116.7,398.7 1115.8,396.8 1115.5,394.8 1115.8,392.8 1116.8,390.9 1118.3,389.2 1120.3,387.8 1122.7,386.8 1125.3,386.3 1128.0,386.3 1130.5,387.0 1132.8,388.2 1134.6,390.0 1135.8,392.3 1136.2,395.0 1135.7,397.8 1134.3,400.7 1132.0,403.5 1128.8,405.9 1125.0,408.0 1120.6,409.6 1115.7,410.8 1110.5,411.6 1105.2,411.9 1099.8,411.9 1094.4,411.7 1089.2,411.1 1084.2,410.4 1079.4,409.5 1075.0,408.4 1070.9,407.2 1067.2,405.9 1063.9,404.5 1061.1,403.1 1058.7,401.8 1056.7,400.5 1055.0,399.4 1053.8,398.4 1052.7,397.7 1051.9,397.3 1051.1,397.2 1050.4,397.4 1049.5,397.9 1048.3,398.8 1046.9,400.0 1045.0,401.5 1042.7,403.1 1039.8,404.9 1036.3,406.7 1032.3,408.3 1027.8,409.7 1023.0,410.6 1018.0,410.8 1013.0,410.1 1008.5,408.3 1004.7,405.4 1001.9,401.5 1000.5,396.8 1000.7,391.7 1002.5,386.5 1005.9,381.6 1010.7,377.4 1016.7,374.0 1023.7,371.5 1031.3,369.6 1039.5,368.2 1048.0,367.2 1056.9,366.4 1065.9,365.6 1075.3,364.8 1084.8,363.9 1094.7,363.1 1104.8,362.5 1115.0,362.2 1125.2,362.8 1135.0,364.5 1144.1,367.8 1151.8,372.9 1157.7,379.8 1161.1,388.2 1161.7,397.3 1159.6,406.0 1154.8,413.6 1147.9,419.5 1139.5,423.5 1130.1,425.8 1120.1,426.8 1110.0,426.9 1100.0,426.4 1090.2,425.6 1080.7,424.7 1071.4,423.7 1062.5,422.7 1053.8,421.7 1045.5,420.5 1037.7,419.0 1030.4,417.1 1023.7,414.6 1017.9,411.6 1013.2,407.9 1009.7,403.8 1007.6,399.4 1006.8,395.0 1007.4,391.0 1009.1,387.6 1011.9,385.0 1015.2,383.3 1019.0,382.5 1022.9,382.6 1026.6,383.3 1030.1,384.5 1033.0,386.2 1035.5,388.0 1037.3,390.0 1038.5,392.0 1039.1,393.8 1039.2,395.4 1038.7,396.8 1037.9,397.8 1036.9,398.5 1035.6,398.8 1034.4,398.6 1033.3,398.1 1032.4,397.2 1031.8,395.9 1031.7,394.4 1032.1,392.8 1033.0,391.1 1034.4,389.4 1036.4,387.9 1038.8,386.5 1041.6,385.5 1044.6,384.7 1047.9,384.3 1051.2,384.2 1054.5,384.5 1057.6,385.1 1060.6,386.0 1063.2,387.1 1065.4,388.5 1067.1,390.1 1068.3,391.9 1068.9,393.7 1069.0,395.7 1068.4,397.7 1067.2,399.6 1065.4,401.5" fill="none" stroke="#fbf79a" stroke-width="1.4" stroke-linejoin="round"/>
<rect x="967.60" y="360.00" width="219.00" height="69.60" fill="none" stroke="#e6e6e6" stroke-width="1.6"/>
<line x1="989.50" y1="429.60" x2="989.50" y2="423.60" stroke="#e6e6e6" stroke-width="1.3"/>
<line x1="1011.40" y1="429.60" x2="1011.40" y2="423.60" stroke="#e6e6e6" stroke-width="1.3"/>
<line x1="1011.40" y1="360.00" x2="1011.40" y2="366.00" stroke="#e6e6e6" stroke-width="1.3"/>
<line x1="1033.30" y1="429.60" x2="1033.30" y2="423.60" stroke="#e6e6e6" stroke-width="1.3"/>
<line x1="1055.20" y1="429.60" x2="1055.20" y2="423.60" stroke="#e6e6e6" stroke-width="1.3"/>
<line x1="1055.20" y1="360.00" x2="1055.20" y2="366.00" stroke="#e6e6e6" stroke-width="1.3"/>
<line x1="1077.10" y1="429.60" x2="1077.10" y2="423.60" stroke="#e6e6e6" stroke-width="1.3"/>
<line x1="1099.00" y1="429.60" x2="1099.00" y2="423.60" stroke="#e6e6e6" stroke-width="1.3"/>
<line x1="1099.00" y1="360.00" x2="1099.00" y2="366.00" stroke="#e6e6e6" stroke-width="1.3"/>
<line x1="1120.90" y1="429.60" x2="1120.90" y2="423.60" stroke="#e6e6e6" stroke-width="1.3"/>
<line x1="1142.80" y1="429.60" x2="1142.80" y2="423.60" stroke="#e6e6e6" stroke-width="1.3"/>
<line x1="1142.80" y1="360.00" x2="1142.80" y2="366.00" stroke="#e6e6e6" stroke-width="1.3"/>
<line x1="1164.70" y1="429.60" x2="1164.70" y2="423.60" stroke="#e6e6e6" stroke-width="1.3"/>
<line x1="967.60" y1="394.80" x2="973.60" y2="394.80" stroke="#e6e6e6" stroke-width="1.3"/>
<line x1="1186.60" y1="394.80" x2="1180.60" y2="394.80" stroke="#e6e6e6" stroke-width="1.3"/>
<text x="967.60" y="443.10" text-anchor="middle" font-size="10.3" fill="#ededed">-5</text>
<text x="989.50" y="443.10" text-anchor="middle" font-size="10.3" fill="#ededed">-4</text>
<text x="1011.40" y="443.10" text-anchor="middle" font-size="10.3" fill="#ededed">-3</text>
<text x="1033.30" y="443.10" text-anchor="middle" font-size="10.3" fill="#ededed">-2</text>
<text x="1055.20" y="443.10" text-anchor="middle" font-size="10.3" fill="#ededed">-1</text>
<text x="1077.10" y="443.10" text-anchor="middle" font-size="10.3" fill="#ededed">0</text>
<text x="1099.00" y="443.10" text-anchor="middle" font-size="10.3" fill="#ededed">1</text>
<text x="1120.90" y="443.10" text-anchor="middle" font-size="10.3" fill="#ededed">2</text>
<text x="1142.80" y="443.10" text-anchor="middle" font-size="10.3" fill="#ededed">3</text>
<text x="1164.70" y="443.10" text-anchor="middle" font-size="10.3" fill="#ededed">4</text>
<text x="1186.60" y="443.10" text-anchor="middle" font-size="10.3" fill="#ededed">5</text>
<text x="964.10" y="365.30" text-anchor="end" font-size="10.3" fill="#ededed">5</text>
<text x="964.10" y="400.10" text-anchor="end" font-size="10.3" fill="#ededed">0</text>
<text x="964.10" y="434.90" text-anchor="end" font-size="10.3" fill="#ededed">-5</text>
<text x="1077.10" y="455.10" text-anchor="middle" font-size="10" font-weight="bold" fill="#2d3236">x(t)</text>
<text x="948.10" y="401.10" text-anchor="middle" font-size="10" font-weight="bold" fill="#2d3236" transform="rotate(-90 948.10 397.80)">v(t)</text>
<rect x="656.80" y="465.80" width="275.40" height="127.40" fill="#686868" stroke="#0a0a0a" stroke-width="1.6"/>
<text x="794.50" y="475.20" text-anchor="middle" font-size="9.7" font-weight="bold" fill="#2d3236">Poincare Map</text>
<line x1="707.40" y1="495.00" x2="707.40" y2="564.60" stroke="#7c7c7c" stroke-width="0.8" stroke-dasharray="1.5,1.5"/>
<line x1="751.00" y1="495.00" x2="751.00" y2="564.60" stroke="#7c7c7c" stroke-width="0.8" stroke-dasharray="1.5,1.5"/>
<line x1="794.60" y1="495.00" x2="794.60" y2="564.60" stroke="#7c7c7c" stroke-width="0.8" stroke-dasharray="1.5,1.5"/>
<line x1="838.20" y1="495.00" x2="838.20" y2="564.60" stroke="#7c7c7c" stroke-width="0.8" stroke-dasharray="1.5,1.5"/>
<line x1="881.80" y1="495.00" x2="881.80" y2="564.60" stroke="#7c7c7c" stroke-width="0.8" stroke-dasharray="1.5,1.5"/>
<line x1="729.20" y1="495.00" x2="729.20" y2="564.60" stroke="#8e8e8e" stroke-width="1"/>
<line x1="772.80" y1="495.00" x2="772.80" y2="564.60" stroke="#8e8e8e" stroke-width="1"/>
<line x1="816.40" y1="495.00" x2="816.40" y2="564.60" stroke="#8e8e8e" stroke-width="1"/>
<line x1="860.00" y1="495.00" x2="860.00" y2="564.60" stroke="#8e8e8e" stroke-width="1"/>
<line x1="685.60" y1="557.64" x2="903.60" y2="557.64" stroke="#808080" stroke-width="0.8" stroke-dasharray="1.5,1.5"/>
<line x1="685.60" y1="550.68" x2="903.60" y2="550.68" stroke="#8a8a8a" stroke-width="0.9"/>
<line x1="685.60" y1="543.72" x2="903.60" y2="543.72" stroke="#808080" stroke-width="0.8" stroke-dasharray="1.5,1.5"/>
<line x1="685.60" y1="536.76" x2="903.60" y2="536.76" stroke="#8a8a8a" stroke-width="0.9"/>
<line x1="685.60" y1="529.80" x2="903.60" y2="529.80" stroke="#808080" stroke-width="0.8" stroke-dasharray="1.5,1.5"/>
<line x1="685.60" y1="522.84" x2="903.60" y2="522.84" stroke="#8a8a8a" stroke-width="0.9"/>
<line x1="685.60" y1="515.88" x2="903.60" y2="515.88" stroke="#808080" stroke-width="0.8" stroke-dasharray="1.5,1.5"/>
<line x1="685.60" y1="508.92" x2="903.60" y2="508.92" stroke="#8a8a8a" stroke-width="0.9"/>
<line x1="685.60" y1="501.96" x2="903.60" y2="501.96" stroke="#808080" stroke-width="0.8" stroke-dasharray="1.5,1.5"/>
<circle cx="697.6" cy="556.6" r="1.3" fill="#fbf79a"/>
<circle cx="859.7" cy="511.0" r="1.3" fill="#fbf79a"/>
<circle cx="813.5" cy="535.0" r="1.3" fill="#fbf79a"/>
<circle cx="767.7" cy="506.7" r="1.3" fill="#fbf79a"/>
<circle cx="841.3" cy="525.0" r="1.3" fill="#fbf79a"/>
<circle cx="790.0" cy="519.6" r="1.3" fill="#fbf79a"/>
<circle cx="808.6" cy="515.2" r="1.3" fill="#fbf79a"/>
<circle cx="818.7" cy="524.2" r="1.3" fill="#fbf79a"/>
<circle cx="798.8" cy="517.3" r="1.3" fill="#fbf79a"/>
<circle cx="814.8" cy="519.8" r="1.3" fill="#fbf79a"/>
<circle cx="808.7" cy="520.8" r="1.3" fill="#fbf79a"/>
<circle cx="806.9" cy="518.5" r="1.3" fill="#fbf79a"/>
<circle cx="812.1" cy="520.5" r="1.3" fill="#fbf79a"/>
<circle cx="807.5" cy="519.6" r="1.3" fill="#fbf79a"/>
<circle cx="809.6" cy="519.5" r="1.3" fill="#fbf79a"/>
<circle cx="809.8" cy="520.1" r="1.3" fill="#fbf79a"/>
<circle cx="808.5" cy="519.5" r="1.3" fill="#fbf79a"/>
<circle cx="809.8" cy="519.8" r="1.3" fill="#fbf79a"/>
<circle cx="809.1" cy="519.8" r="1.3" fill="#fbf79a"/>
<circle cx="809.1" cy="519.6" r="1.3" fill="#fbf79a"/>
<circle cx="809.5" cy="519.8" r="1.3" fill="#fbf79a"/>
<circle cx="809.1" cy="519.7" r="1.3" fill="#fbf79a"/>
<circle cx="809.3" cy="519.7" r="1.3" fill="#fbf79a"/>
<circle cx="809.3" cy="519.7" r="1.3" fill="#fbf79a"/>
<circle cx="809.2" cy="519.7" r="1.3" fill="#fbf79a"/>
<circle cx="809.3" cy="519.7" r="1.3" fill="#fbf79a"/>
<circle cx="809.2" cy="519.7" r="1.3" fill="#fbf79a"/>
<circle cx="809.3" cy="519.7" r="1.3" fill="#fbf79a"/>
<circle cx="809.3" cy="519.7" r="1.3" fill="#fbf79a"/>
<circle cx="809.3" cy="519.7" r="1.3" fill="#fbf79a"/>
<circle cx="809.3" cy="519.7" r="1.3" fill="#fbf79a"/>
<circle cx="809.3" cy="519.7" r="1.3" fill="#fbf79a"/>
<circle cx="809.3" cy="519.7" r="1.3" fill="#fbf79a"/>
<circle cx="809.3" cy="519.7" r="1.3" fill="#fbf79a"/>
<circle cx="809.3" cy="519.7" r="1.3" fill="#fbf79a"/>
<circle cx="809.3" cy="519.7" r="1.3" fill="#fbf79a"/>
<circle cx="809.3" cy="519.7" r="1.3" fill="#fbf79a"/>
<circle cx="809.3" cy="519.7" r="1.3" fill="#fbf79a"/>
<circle cx="809.3" cy="519.7" r="1.3" fill="#fbf79a"/>
<circle cx="809.3" cy="519.7" r="1.3" fill="#fbf79a"/>
<circle cx="809.3" cy="519.7" r="1.3" fill="#fbf79a"/>
<circle cx="809.3" cy="519.7" r="1.3" fill="#fbf79a"/>
<circle cx="809.3" cy="519.7" r="1.3" fill="#fbf79a"/>
<circle cx="809.3" cy="519.7" r="1.3" fill="#fbf79a"/>
<circle cx="809.3" cy="519.7" r="1.3" fill="#fbf79a"/>
<circle cx="809.3" cy="519.7" r="1.3" fill="#fbf79a"/>
<circle cx="809.3" cy="519.7" r="1.3" fill="#fbf79a"/>
<circle cx="809.3" cy="519.7" r="1.3" fill="#fbf79a"/>
<circle cx="809.3" cy="519.7" r="1.3" fill="#fbf79a"/>
<circle cx="809.3" cy="519.7" r="1.3" fill="#fbf79a"/>
<circle cx="809.3" cy="519.7" r="1.3" fill="#fbf79a"/>
<circle cx="809.3" cy="519.7" r="1.3" fill="#fbf79a"/>
<circle cx="809.3" cy="519.7" r="1.3" fill="#fbf79a"/>
<circle cx="809.3" cy="519.7" r="1.3" fill="#fbf79a"/>
<circle cx="809.3" cy="519.7" r="1.3" fill="#fbf79a"/>
<circle cx="809.3" cy="519.7" r="1.3" fill="#fbf79a"/>
<circle cx="809.3" cy="519.7" r="1.3" fill="#fbf79a"/>
<circle cx="809.3" cy="519.7" r="1.3" fill="#fbf79a"/>
<circle cx="809.3" cy="519.7" r="1.3" fill="#fbf79a"/>
<circle cx="809.3" cy="519.7" r="1.3" fill="#fbf79a"/>
<circle cx="809.3" cy="519.7" r="1.3" fill="#fbf79a"/>
<circle cx="809.3" cy="519.7" r="1.3" fill="#fbf79a"/>
<circle cx="809.3" cy="519.7" r="1.3" fill="#fbf79a"/>
<circle cx="809.3" cy="519.7" r="1.3" fill="#fbf79a"/>
<circle cx="809.3" cy="519.7" r="1.3" fill="#fbf79a"/>
<circle cx="809.3" cy="519.7" r="1.3" fill="#fbf79a"/>
<circle cx="809.3" cy="519.7" r="1.3" fill="#fbf79a"/>
<circle cx="809.3" cy="519.7" r="1.3" fill="#fbf79a"/>
<circle cx="809.3" cy="519.7" r="1.3" fill="#fbf79a"/>
<circle cx="809.3" cy="519.7" r="1.3" fill="#fbf79a"/>
<circle cx="809.3" cy="519.7" r="1.3" fill="#fbf79a"/>
<circle cx="809.3" cy="519.7" r="1.3" fill="#fbf79a"/>
<circle cx="809.3" cy="519.7" r="1.3" fill="#fbf79a"/>
<circle cx="809.3" cy="519.7" r="1.3" fill="#fbf79a"/>
<circle cx="809.3" cy="519.7" r="1.3" fill="#fbf79a"/>
<circle cx="809.3" cy="519.7" r="1.3" fill="#fbf79a"/>
<circle cx="809.3" cy="519.7" r="1.3" fill="#fbf79a"/>
<circle cx="809.3" cy="519.7" r="1.3" fill="#fbf79a"/>
<circle cx="809.3" cy="519.7" r="1.3" fill="#fbf79a"/>
<circle cx="809.3" cy="519.7" r="1.3" fill="#fbf79a"/>
<circle cx="809.3" cy="519.7" r="1.3" fill="#fbf79a"/>
<circle cx="809.3" cy="519.7" r="1.3" fill="#fbf79a"/>
<circle cx="809.3" cy="519.7" r="1.3" fill="#fbf79a"/>
<circle cx="809.3" cy="519.7" r="1.3" fill="#fbf79a"/>
<circle cx="809.3" cy="519.7" r="1.3" fill="#fbf79a"/>
<circle cx="809.3" cy="519.7" r="1.3" fill="#fbf79a"/>
<circle cx="809.3" cy="519.7" r="1.3" fill="#fbf79a"/>
<circle cx="809.3" cy="519.7" r="1.3" fill="#fbf79a"/>
<circle cx="809.3" cy="519.7" r="1.3" fill="#fbf79a"/>
<circle cx="809.3" cy="519.7" r="1.3" fill="#fbf79a"/>
<circle cx="809.3" cy="519.7" r="1.3" fill="#fbf79a"/>
<circle cx="809.3" cy="519.7" r="1.3" fill="#fbf79a"/>
<circle cx="809.3" cy="519.7" r="1.3" fill="#fbf79a"/>
<circle cx="809.3" cy="519.7" r="1.3" fill="#fbf79a"/>
<circle cx="809.3" cy="519.7" r="1.3" fill="#fbf79a"/>
<circle cx="809.3" cy="519.7" r="1.3" fill="#fbf79a"/>
<circle cx="809.3" cy="519.7" r="1.3" fill="#fbf79a"/>
<circle cx="809.3" cy="519.7" r="1.3" fill="#fbf79a"/>
<circle cx="809.3" cy="519.7" r="1.3" fill="#fbf79a"/>
<circle cx="809.3" cy="519.7" r="1.3" fill="#fbf79a"/>
<circle cx="809.3" cy="519.7" r="1.3" fill="#fbf79a"/>
<circle cx="809.3" cy="519.7" r="1.3" fill="#fbf79a"/>
<circle cx="809.3" cy="519.7" r="1.3" fill="#fbf79a"/>
<circle cx="809.3" cy="519.7" r="1.3" fill="#fbf79a"/>
<circle cx="809.3" cy="519.7" r="1.3" fill="#fbf79a"/>
<circle cx="809.3" cy="519.7" r="1.3" fill="#fbf79a"/>
<circle cx="809.3" cy="519.7" r="1.3" fill="#fbf79a"/>
<circle cx="809.3" cy="519.7" r="1.3" fill="#fbf79a"/>
<circle cx="809.3" cy="519.7" r="1.3" fill="#fbf79a"/>
<circle cx="809.3" cy="519.7" r="1.3" fill="#fbf79a"/>
<circle cx="809.3" cy="519.7" r="1.3" fill="#fbf79a"/>
<circle cx="809.3" cy="519.7" r="1.3" fill="#fbf79a"/>
<circle cx="809.3" cy="519.7" r="1.3" fill="#fbf79a"/>
<circle cx="809.3" cy="519.7" r="1.3" fill="#fbf79a"/>
<circle cx="809.3" cy="519.7" r="1.3" fill="#fbf79a"/>
<circle cx="809.3" cy="519.7" r="1.3" fill="#fbf79a"/>
<circle cx="809.3" cy="519.7" r="1.3" fill="#fbf79a"/>
<circle cx="809.3" cy="519.7" r="1.3" fill="#fbf79a"/>
<circle cx="809.3" cy="519.7" r="1.3" fill="#fbf79a"/>
<circle cx="809.3" cy="519.7" r="1.3" fill="#fbf79a"/>
<circle cx="809.3" cy="519.7" r="1.3" fill="#fbf79a"/>
<circle cx="809.3" cy="519.7" r="1.3" fill="#fbf79a"/>
<circle cx="809.3" cy="519.7" r="1.3" fill="#fbf79a"/>
<circle cx="809.3" cy="519.7" r="1.3" fill="#fbf79a"/>
<circle cx="809.3" cy="519.7" r="1.3" fill="#fbf79a"/>
<circle cx="809.3" cy="519.7" r="1.3" fill="#fbf79a"/>
<circle cx="809.3" cy="519.7" r="1.3" fill="#fbf79a"/>
<circle cx="809.3" cy="519.7" r="1.3" fill="#fbf79a"/>
<circle cx="809.3" cy="519.7" r="1.3" fill="#fbf79a"/>
<circle cx="809.3" cy="519.7" r="1.3" fill="#fbf79a"/>
<circle cx="809.3" cy="519.7" r="1.3" fill="#fbf79a"/>
<circle cx="809.3" cy="519.7" r="1.3" fill="#fbf79a"/>
<circle cx="809.3" cy="519.7" r="1.3" fill="#fbf79a"/>
<circle cx="809.3" cy="519.7" r="1.3" fill="#fbf79a"/>
<circle cx="809.3" cy="519.7" r="1.3" fill="#fbf79a"/>
<circle cx="809.3" cy="519.7" r="1.3" fill="#fbf79a"/>
<circle cx="809.3" cy="519.7" r="1.3" fill="#fbf79a"/>
<circle cx="809.3" cy="519.7" r="1.3" fill="#fbf79a"/>
<circle cx="809.3" cy="519.7" r="1.3" fill="#fbf79a"/>
<circle cx="809.3" cy="519.7" r="1.3" fill="#fbf79a"/>
<circle cx="809.3" cy="519.7" r="1.3" fill="#fbf79a"/>
<circle cx="809.3" cy="519.7" r="1.3" fill="#fbf79a"/>
<circle cx="809.3" cy="519.7" r="1.3" fill="#fbf79a"/>
<circle cx="809.3" cy="519.7" r="1.3" fill="#fbf79a"/>
<circle cx="809.3" cy="519.7" r="1.3" fill="#fbf79a"/>
<circle cx="809.3" cy="519.7" r="1.3" fill="#fbf79a"/>
<circle cx="809.3" cy="519.7" r="1.3" fill="#fbf79a"/>
<circle cx="809.3" cy="519.7" r="1.3" fill="#fbf79a"/>
<circle cx="809.3" cy="519.7" r="1.3" fill="#fbf79a"/>
<circle cx="809.3" cy="519.7" r="1.3" fill="#fbf79a"/>
<circle cx="809.3" cy="519.7" r="1.3" fill="#fbf79a"/>
<circle cx="809.3" cy="519.7" r="1.3" fill="#fbf79a"/>
<circle cx="809.3" cy="519.7" r="1.3" fill="#fbf79a"/>
<circle cx="809.3" cy="519.7" r="1.3" fill="#fbf79a"/>
<circle cx="809.3" cy="519.7" r="1.3" fill="#fbf79a"/>
<circle cx="809.3" cy="519.7" r="1.3" fill="#fbf79a"/>
<circle cx="809.3" cy="519.7" r="1.3" fill="#fbf79a"/>
<circle cx="809.3" cy="519.7" r="1.3" fill="#fbf79a"/>
<circle cx="809.3" cy="519.7" r="1.3" fill="#fbf79a"/>
<circle cx="809.3" cy="519.7" r="1.3" fill="#fbf79a"/>
<circle cx="809.3" cy="519.7" r="1.3" fill="#fbf79a"/>
<circle cx="809.3" cy="519.7" r="1.3" fill="#fbf79a"/>
<circle cx="809.3" cy="519.7" r="1.3" fill="#fbf79a"/>
<circle cx="809.3" cy="519.7" r="1.3" fill="#fbf79a"/>
<circle cx="809.3" cy="519.7" r="1.3" fill="#fbf79a"/>
<circle cx="809.3" cy="519.7" r="1.3" fill="#fbf79a"/>
<circle cx="809.3" cy="519.7" r="1.3" fill="#fbf79a"/>
<circle cx="809.3" cy="519.7" r="1.3" fill="#fbf79a"/>
<circle cx="809.3" cy="519.7" r="1.3" fill="#fbf79a"/>
<circle cx="809.3" cy="519.7" r="1.3" fill="#fbf79a"/>
<circle cx="809.3" cy="519.7" r="1.3" fill="#fbf79a"/>
<circle cx="809.3" cy="519.7" r="1.3" fill="#fbf79a"/>
<circle cx="809.3" cy="519.7" r="1.3" fill="#fbf79a"/>
<circle cx="809.3" cy="519.7" r="1.3" fill="#fbf79a"/>
<circle cx="809.3" cy="519.7" r="1.3" fill="#fbf79a"/>
<circle cx="809.3" cy="519.7" r="1.3" fill="#fbf79a"/>
<circle cx="809.3" cy="519.7" r="1.3" fill="#fbf79a"/>
<circle cx="809.3" cy="519.7" r="1.3" fill="#fbf79a"/>
<circle cx="809.3" cy="519.7" r="1.3" fill="#fbf79a"/>
<circle cx="809.3" cy="519.7" r="1.3" fill="#fbf79a"/>
<circle cx="809.3" cy="519.7" r="1.3" fill="#fbf79a"/>
<circle cx="809.3" cy="519.7" r="1.3" fill="#fbf79a"/>
<circle cx="809.3" cy="519.7" r="1.3" fill="#fbf79a"/>
<circle cx="809.3" cy="519.7" r="1.3" fill="#fbf79a"/>
<circle cx="809.3" cy="519.7" r="1.3" fill="#fbf79a"/>
<circle cx="809.3" cy="519.7" r="1.3" fill="#fbf79a"/>
<circle cx="809.3" cy="519.7" r="1.3" fill="#fbf79a"/>
<circle cx="809.3" cy="519.7" r="1.3" fill="#fbf79a"/>
<circle cx="809.3" cy="519.7" r="1.3" fill="#fbf79a"/>
<circle cx="809.3" cy="519.7" r="1.3" fill="#fbf79a"/>
<circle cx="809.3" cy="519.7" r="1.3" fill="#fbf79a"/>
<circle cx="809.3" cy="519.7" r="1.3" fill="#fbf79a"/>
<circle cx="809.3" cy="519.7" r="1.3" fill="#fbf79a"/>
<circle cx="809.3" cy="519.7" r="1.3" fill="#fbf79a"/>
<circle cx="809.3" cy="519.7" r="1.3" fill="#fbf79a"/>
<circle cx="809.3" cy="519.7" r="1.3" fill="#fbf79a"/>
<circle cx="809.3" cy="519.7" r="1.3" fill="#fbf79a"/>
<circle cx="809.3" cy="519.7" r="1.3" fill="#fbf79a"/>
<circle cx="809.3" cy="519.7" r="1.3" fill="#fbf79a"/>
<circle cx="809.3" cy="519.7" r="1.3" fill="#fbf79a"/>
<circle cx="809.3" cy="519.7" r="1.3" fill="#fbf79a"/>
<circle cx="809.3" cy="519.7" r="1.3" fill="#fbf79a"/>
<circle cx="809.3" cy="519.7" r="1.3" fill="#fbf79a"/>
<circle cx="809.3" cy="519.7" r="1.3" fill="#fbf79a"/>
<circle cx="809.3" cy="519.7" r="1.3" fill="#fbf79a"/>
<circle cx="809.3" cy="519.7" r="1.3" fill="#fbf79a"/>
<circle cx="809.3" cy="519.7" r="1.3" fill="#fbf79a"/>
<circle cx="809.3" cy="519.7" r="1.3" fill="#fbf79a"/>
<circle cx="809.3" cy="519.7" r="1.3" fill="#fbf79a"/>
<circle cx="809.3" cy="519.7" r="1.3" fill="#fbf79a"/>
<circle cx="809.3" cy="519.7" r="1.3" fill="#fbf79a"/>
<circle cx="809.3" cy="519.7" r="1.3" fill="#fbf79a"/>
<circle cx="809.3" cy="519.7" r="1.3" fill="#fbf79a"/>
<circle cx="809.3" cy="519.7" r="1.3" fill="#fbf79a"/>
<circle cx="809.3" cy="519.7" r="1.3" fill="#fbf79a"/>
<circle cx="809.3" cy="519.7" r="1.3" fill="#fbf79a"/>
<circle cx="809.3" cy="519.7" r="1.3" fill="#fbf79a"/>
<circle cx="809.3" cy="519.7" r="1.3" fill="#fbf79a"/>
<circle cx="809.3" cy="519.7" r="1.3" fill="#fbf79a"/>
<circle cx="809.3" cy="519.7" r="1.3" fill="#fbf79a"/>
<circle cx="809.3" cy="519.7" r="1.3" fill="#fbf79a"/>
<circle cx="809.3" cy="519.7" r="1.3" fill="#fbf79a"/>
<circle cx="809.3" cy="519.7" r="1.3" fill="#fbf79a"/>
<circle cx="809.3" cy="519.7" r="1.3" fill="#fbf79a"/>
<circle cx="809.3" cy="519.7" r="1.3" fill="#fbf79a"/>
<circle cx="809.3" cy="519.7" r="1.3" fill="#fbf79a"/>
<circle cx="809.3" cy="519.7" r="1.3" fill="#fbf79a"/>
<circle cx="809.3" cy="519.7" r="1.3" fill="#fbf79a"/>
<circle cx="809.3" cy="519.7" r="1.3" fill="#fbf79a"/>
<circle cx="809.3" cy="519.7" r="1.3" fill="#fbf79a"/>
<circle cx="809.3" cy="519.7" r="1.3" fill="#fbf79a"/>
<circle cx="809.3" cy="519.7" r="1.3" fill="#fbf79a"/>
<circle cx="809.3" cy="519.7" r="1.3" fill="#fbf79a"/>
<circle cx="809.3" cy="519.7" r="1.3" fill="#fbf79a"/>
<circle cx="809.3" cy="519.7" r="1.3" fill="#fbf79a"/>
<circle cx="809.3" cy="519.7" r="1.3" fill="#fbf79a"/>
<circle cx="809.3" cy="519.7" r="1.3" fill="#fbf79a"/>
<circle cx="809.3" cy="519.7" r="1.3" fill="#fbf79a"/>
<circle cx="809.3" cy="519.7" r="1.3" fill="#fbf79a"/>
<circle cx="809.3" cy="519.7" r="1.3" fill="#fbf79a"/>
<circle cx="809.3" cy="519.7" r="1.3" fill="#fbf79a"/>
<circle cx="809.3" cy="519.7" r="1.3" fill="#fbf79a"/>
<circle cx="809.3" cy="519.7" r="1.3" fill="#fbf79a"/>
<circle cx="809.3" cy="519.7" r="1.3" fill="#fbf79a"/>
<circle cx="809.3" cy="519.7" r="1.3" fill="#fbf79a"/>
<circle cx="809.3" cy="519.7" r="1.3" fill="#fbf79a"/>
<circle cx="809.3" cy="519.7" r="1.3" fill="#fbf79a"/>
<circle cx="809.3" cy="519.7" r="1.3" fill="#fbf79a"/>
<circle cx="809.3" cy="519.7" r="1.3" fill="#fbf79a"/>
<circle cx="809.3" cy="519.7" r="1.3" fill="#fbf79a"/>
<circle cx="809.3" cy="519.7" r="1.3" fill="#fbf79a"/>
<circle cx="809.3" cy="519.7" r="1.3" fill="#fbf79a"/>
<circle cx="809.3" cy="519.7" r="1.3" fill="#fbf79a"/>
<circle cx="809.3" cy="519.7" r="1.3" fill="#fbf79a"/>
<circle cx="809.3" cy="519.7" r="1.3" fill="#fbf79a"/>
<circle cx="809.3" cy="519.7" r="1.3" fill="#fbf79a"/>
<circle cx="809.3" cy="519.7" r="1.3" fill="#fbf79a"/>
<circle cx="809.3" cy="519.7" r="1.3" fill="#fbf79a"/>
<circle cx="809.3" cy="519.7" r="1.3" fill="#fbf79a"/>
<circle cx="809.3" cy="519.7" r="1.3" fill="#fbf79a"/>
<circle cx="809.3" cy="519.7" r="1.3" fill="#fbf79a"/>
<circle cx="809.3" cy="519.7" r="1.3" fill="#fbf79a"/>
<circle cx="809.3" cy="519.7" r="1.3" fill="#fbf79a"/>
<circle cx="809.3" cy="519.7" r="1.3" fill="#fbf79a"/>
<circle cx="809.3" cy="519.7" r="1.3" fill="#fbf79a"/>
<circle cx="809.3" cy="519.7" r="1.3" fill="#fbf79a"/>
<circle cx="809.3" cy="519.7" r="1.3" fill="#fbf79a"/>
<circle cx="809.3" cy="519.7" r="1.3" fill="#fbf79a"/>
<circle cx="809.3" cy="519.7" r="1.3" fill="#fbf79a"/>
<circle cx="809.3" cy="519.7" r="1.3" fill="#fbf79a"/>
<circle cx="809.3" cy="519.7" r="1.3" fill="#fbf79a"/>
<circle cx="809.3" cy="519.7" r="1.3" fill="#fbf79a"/>
<circle cx="809.3" cy="519.7" r="1.3" fill="#fbf79a"/>
<circle cx="809.3" cy="519.7" r="1.3" fill="#fbf79a"/>
<circle cx="809.3" cy="519.7" r="1.3" fill="#fbf79a"/>
<circle cx="809.3" cy="519.7" r="1.3" fill="#fbf79a"/>
<circle cx="809.3" cy="519.7" r="1.3" fill="#fbf79a"/>
<circle cx="809.3" cy="519.7" r="1.3" fill="#fbf79a"/>
<circle cx="809.3" cy="519.7" r="1.3" fill="#fbf79a"/>
<circle cx="809.3" cy="519.7" r="1.3" fill="#fbf79a"/>
<circle cx="809.3" cy="519.7" r="1.3" fill="#fbf79a"/>
<circle cx="809.3" cy="519.7" r="1.3" fill="#fbf79a"/>
<circle cx="809.3" cy="519.7" r="1.3" fill="#fbf79a"/>
<circle cx="809.3" cy="519.7" r="1.3" fill="#fbf79a"/>
<circle cx="809.3" cy="519.7" r="1.3" fill="#fbf79a"/>
<circle cx="809.3" cy="519.7" r="1.3" fill="#fbf79a"/>
<circle cx="809.3" cy="519.7" r="1.3" fill="#fbf79a"/>
<circle cx="809.3" cy="519.7" r="1.3" fill="#fbf79a"/>
<circle cx="809.3" cy="519.7" r="1.3" fill="#fbf79a"/>
<circle cx="809.3" cy="519.7" r="1.3" fill="#fbf79a"/>
<circle cx="809.3" cy="519.7" r="1.3" fill="#fbf79a"/>
<circle cx="809.3" cy="519.7" r="1.3" fill="#fbf79a"/>
<circle cx="809.3" cy="519.7" r="1.3" fill="#fbf79a"/>
<circle cx="809.3" cy="519.7" r="1.3" fill="#fbf79a"/>
<circle cx="809.3" cy="519.7" r="1.3" fill="#fbf79a"/>
<circle cx="809.3" cy="519.7" r="1.3" fill="#fbf79a"/>
<circle cx="809.3" cy="519.7" r="1.3" fill="#fbf79a"/>
<circle cx="809.3" cy="519.7" r="1.3" fill="#fbf79a"/>
<circle cx="809.3" cy="519.7" r="1.3" fill="#fbf79a"/>
<circle cx="809.3" cy="519.7" r="1.3" fill="#fbf79a"/>
<circle cx="809.3" cy="519.7" r="1.3" fill="#fbf79a"/>
<circle cx="809.3" cy="519.7" r="1.3" fill="#fbf79a"/>
<circle cx="809.3" cy="519.7" r="1.3" fill="#fbf79a"/>
<circle cx="809.3" cy="519.7" r="1.3" fill="#fbf79a"/>
<circle cx="809.3" cy="519.7" r="1.3" fill="#fbf79a"/>
<circle cx="809.3" cy="519.7" r="1.3" fill="#fbf79a"/>
<circle cx="809.3" cy="519.7" r="1.3" fill="#fbf79a"/>
<circle cx="809.3" cy="519.7" r="1.3" fill="#fbf79a"/>
<circle cx="809.3" cy="519.7" r="1.3" fill="#fbf79a"/>
<circle cx="809.3" cy="519.7" r="1.3" fill="#fbf79a"/>
<circle cx="809.3" cy="519.7" r="1.3" fill="#fbf79a"/>
<circle cx="809.3" cy="519.7" r="1.3" fill="#fbf79a"/>
<circle cx="809.3" cy="519.7" r="1.3" fill="#fbf79a"/>
<circle cx="809.3" cy="519.7" r="1.3" fill="#fbf79a"/>
<circle cx="809.3" cy="519.7" r="1.3" fill="#fbf79a"/>
<circle cx="809.3" cy="519.7" r="1.3" fill="#fbf79a"/>
<circle cx="809.3" cy="519.7" r="1.3" fill="#fbf79a"/>
<circle cx="809.3" cy="519.7" r="1.3" fill="#fbf79a"/>
<circle cx="809.3" cy="519.7" r="1.3" fill="#fbf79a"/>
<circle cx="809.3" cy="519.7" r="1.3" fill="#fbf79a"/>
<circle cx="809.3" cy="519.7" r="1.3" fill="#fbf79a"/>
<circle cx="809.3" cy="519.7" r="1.3" fill="#fbf79a"/>
<circle cx="809.3" cy="519.7" r="1.3" fill="#fbf79a"/>
<circle cx="809.3" cy="519.7" r="1.3" fill="#fbf79a"/>
<circle cx="809.3" cy="519.7" r="1.3" fill="#fbf79a"/>
<circle cx="809.3" cy="519.7" r="1.3" fill="#fbf79a"/>
<circle cx="809.3" cy="519.7" r="1.3" fill="#fbf79a"/>
<circle cx="809.3" cy="519.7" r="1.3" fill="#fbf79a"/>
<circle cx="809.3" cy="519.7" r="1.3" fill="#fbf79a"/>
<circle cx="809.3" cy="519.7" r="1.3" fill="#fbf79a"/>
<circle cx="809.3" cy="519.7" r="1.3" fill="#fbf79a"/>
<circle cx="809.3" cy="519.7" r="1.3" fill="#fbf79a"/>
<circle cx="809.3" cy="519.7" r="1.3" fill="#fbf79a"/>
<circle cx="809.3" cy="519.7" r="1.3" fill="#fbf79a"/>
<circle cx="809.3" cy="519.7" r="1.3" fill="#fbf79a"/>
<circle cx="809.3" cy="519.7" r="1.3" fill="#fbf79a"/>
<circle cx="809.3" cy="519.7" r="1.3" fill="#fbf79a"/>
<circle cx="809.3" cy="519.7" r="1.3" fill="#fbf79a"/>
<circle cx="809.3" cy="519.7" r="1.3" fill="#fbf79a"/>
<circle cx="809.3" cy="519.7" r="1.3" fill="#fbf79a"/>
<circle cx="809.3" cy="519.7" r="1.3" fill="#fbf79a"/>
<circle cx="809.3" cy="519.7" r="1.3" fill="#fbf79a"/>
<circle cx="809.3" cy="519.7" r="1.3" fill="#fbf79a"/>
<circle cx="809.3" cy="519.7" r="1.3" fill="#fbf79a"/>
<circle cx="809.3" cy="519.7" r="1.3" fill="#fbf79a"/>
<circle cx="809.3" cy="519.7" r="1.3" fill="#fbf79a"/>
<circle cx="809.3" cy="519.7" r="1.3" fill="#fbf79a"/>
<circle cx="809.3" cy="519.7" r="1.3" fill="#fbf79a"/>
<circle cx="809.3" cy="519.7" r="1.3" fill="#fbf79a"/>
<circle cx="809.3" cy="519.7" r="1.3" fill="#fbf79a"/>
<circle cx="809.3" cy="519.7" r="1.3" fill="#fbf79a"/>
<circle cx="809.3" cy="519.7" r="1.3" fill="#fbf79a"/>
<circle cx="809.3" cy="519.7" r="1.3" fill="#fbf79a"/>
<circle cx="809.3" cy="519.7" r="1.3" fill="#fbf79a"/>
<circle cx="809.3" cy="519.7" r="1.3" fill="#fbf79a"/>
<circle cx="809.3" cy="519.7" r="1.3" fill="#fbf79a"/>
<circle cx="809.3" cy="519.7" r="1.3" fill="#fbf79a"/>
<circle cx="809.3" cy="519.7" r="1.3" fill="#fbf79a"/>
<circle cx="809.3" cy="519.7" r="1.3" fill="#fbf79a"/>
<circle cx="809.3" cy="519.7" r="1.3" fill="#fbf79a"/>
<circle cx="809.3" cy="519.7" r="1.3" fill="#fbf79a"/>
<circle cx="809.3" cy="519.7" r="1.3" fill="#fbf79a"/>
<circle cx="809.3" cy="519.7" r="1.3" fill="#fbf79a"/>
<circle cx="809.3" cy="519.7" r="1.3" fill="#fbf79a"/>
<circle cx="809.3" cy="519.7" r="1.3" fill="#fbf79a"/>
<circle cx="809.3" cy="519.7" r="1.3" fill="#fbf79a"/>
<circle cx="809.3" cy="519.7" r="1.3" fill="#fbf79a"/>
<circle cx="809.3" cy="519.7" r="1.3" fill="#fbf79a"/>
<circle cx="809.3" cy="519.7" r="1.3" fill="#fbf79a"/>
<circle cx="809.3" cy="519.7" r="1.3" fill="#fbf79a"/>
<circle cx="809.3" cy="519.7" r="1.3" fill="#fbf79a"/>
<circle cx="809.3" cy="519.7" r="1.3" fill="#fbf79a"/>
<circle cx="809.3" cy="519.7" r="1.3" fill="#fbf79a"/>
<circle cx="809.3" cy="519.7" r="1.3" fill="#fbf79a"/>
<circle cx="809.3" cy="519.7" r="1.3" fill="#fbf79a"/>
<circle cx="809.3" cy="519.7" r="1.3" fill="#fbf79a"/>
<circle cx="809.3" cy="519.7" r="1.3" fill="#fbf79a"/>
<circle cx="809.3" cy="519.7" r="1.3" fill="#fbf79a"/>
<circle cx="809.3" cy="519.7" r="1.3" fill="#fbf79a"/>
<circle cx="809.3" cy="519.7" r="1.3" fill="#fbf79a"/>
<circle cx="809.3" cy="519.7" r="1.3" fill="#fbf79a"/>
<circle cx="809.3" cy="519.7" r="1.3" fill="#fbf79a"/>
<circle cx="809.3" cy="519.7" r="1.3" fill="#fbf79a"/>
<circle cx="809.3" cy="519.7" r="1.3" fill="#fbf79a"/>
<circle cx="809.3" cy="519.7" r="1.3" fill="#fbf79a"/>
<circle cx="809.3" cy="519.7" r="1.3" fill="#fbf79a"/>
<circle cx="809.3" cy="519.7" r="1.3" fill="#fbf79a"/>
<circle cx="809.3" cy="519.7" r="1.3" fill="#fbf79a"/>
<circle cx="809.3" cy="519.7" r="1.3" fill="#fbf79a"/>
<circle cx="809.3" cy="519.7" r="1.3" fill="#fbf79a"/>
<circle cx="809.3" cy="519.7" r="1.3" fill="#fbf79a"/>
<circle cx="809.3" cy="519.7" r="1.3" fill="#fbf79a"/>
<circle cx="809.3" cy="519.7" r="1.3" fill="#fbf79a"/>
<circle cx="809.3" cy="519.7" r="1.3" fill="#fbf79a"/>
<circle cx="809.3" cy="519.7" r="1.3" fill="#fbf79a"/>
<circle cx="809.3" cy="519.7" r="1.3" fill="#fbf79a"/>
<circle cx="809.3" cy="519.7" r="1.3" fill="#fbf79a"/>
<circle cx="809.3" cy="519.7" r="1.3" fill="#fbf79a"/>
<circle cx="809.3" cy="519.7" r="1.3" fill="#fbf79a"/>
<circle cx="809.3" cy="519.7" r="1.3" fill="#fbf79a"/>
<circle cx="809.3" cy="519.7" r="1.3" fill="#fbf79a"/>
<circle cx="809.3" cy="519.7" r="1.3" fill="#fbf79a"/>
<circle cx="809.3" cy="519.7" r="1.3" fill="#fbf79a"/>
<circle cx="809.3" cy="519.7" r="1.3" fill="#fbf79a"/>
<circle cx="809.3" cy="519.7" r="1.3" fill="#fbf79a"/>
<circle cx="809.3" cy="519.7" r="1.3" fill="#fbf79a"/>
<circle cx="809.3" cy="519.7" r="1.3" fill="#fbf79a"/>
<circle cx="809.3" cy="519.7" r="1.3" fill="#fbf79a"/>
<circle cx="809.3" cy="519.7" r="1.3" fill="#fbf79a"/>
<circle cx="809.3" cy="519.7" r="1.3" fill="#fbf79a"/>
<circle cx="809.3" cy="519.7" r="1.3" fill="#fbf79a"/>
<circle cx="809.3" cy="519.7" r="1.3" fill="#fbf79a"/>
<circle cx="809.3" cy="519.7" r="1.3" fill="#fbf79a"/>
<circle cx="809.3" cy="519.7" r="1.3" fill="#fbf79a"/>
<circle cx="809.3" cy="519.7" r="1.3" fill="#fbf79a"/>
<circle cx="809.3" cy="519.7" r="1.3" fill="#fbf79a"/>
<circle cx="809.3" cy="519.7" r="1.3" fill="#fbf79a"/>
<circle cx="809.3" cy="519.7" r="1.3" fill="#fbf79a"/>
<circle cx="809.3" cy="519.7" r="1.3" fill="#fbf79a"/>
<circle cx="809.3" cy="519.7" r="1.3" fill="#fbf79a"/>
<circle cx="809.3" cy="519.7" r="1.3" fill="#fbf79a"/>
<circle cx="809.3" cy="519.7" r="1.3" fill="#fbf79a"/>
<circle cx="809.3" cy="519.7" r="1.3" fill="#fbf79a"/>
<circle cx="809.3" cy="519.7" r="1.3" fill="#fbf79a"/>
<circle cx="809.3" cy="519.7" r="1.3" fill="#fbf79a"/>
<circle cx="809.3" cy="519.7" r="1.3" fill="#fbf79a"/>
<circle cx="809.3" cy="519.7" r="1.3" fill="#fbf79a"/>
<circle cx="809.3" cy="519.7" r="1.3" fill="#fbf79a"/>
<circle cx="809.3" cy="519.7" r="1.3" fill="#fbf79a"/>
<circle cx="809.3" cy="519.7" r="1.3" fill="#fbf79a"/>
<circle cx="809.3" cy="519.7" r="1.3" fill="#fbf79a"/>
<circle cx="809.3" cy="519.7" r="1.3" fill="#fbf79a"/>
<circle cx="809.3" cy="519.7" r="1.3" fill="#fbf79a"/>
<circle cx="809.3" cy="519.7" r="1.3" fill="#fbf79a"/>
<circle cx="809.3" cy="519.7" r="1.3" fill="#fbf79a"/>
<circle cx="809.3" cy="519.7" r="1.3" fill="#fbf79a"/>
<circle cx="809.3" cy="519.7" r="1.3" fill="#fbf79a"/>
<circle cx="809.3" cy="519.7" r="1.3" fill="#fbf79a"/>
<circle cx="809.3" cy="519.7" r="1.3" fill="#fbf79a"/>
<circle cx="809.3" cy="519.7" r="1.3" fill="#fbf79a"/>
<circle cx="809.3" cy="519.7" r="1.3" fill="#fbf79a"/>
<circle cx="809.3" cy="519.7" r="1.3" fill="#fbf79a"/>
<circle cx="809.3" cy="519.7" r="1.3" fill="#fbf79a"/>
<circle cx="809.3" cy="519.7" r="1.3" fill="#fbf79a"/>
<circle cx="809.3" cy="519.7" r="1.3" fill="#fbf79a"/>
<circle cx="809.3" cy="519.7" r="1.3" fill="#fbf79a"/>
<circle cx="809.3" cy="519.7" r="1.3" fill="#fbf79a"/>
<circle cx="809.3" cy="519.7" r="1.3" fill="#fbf79a"/>
<circle cx="809.3" cy="519.7" r="1.3" fill="#fbf79a"/>
<circle cx="809.3" cy="519.7" r="1.3" fill="#fbf79a"/>
<circle cx="809.3" cy="519.7" r="1.3" fill="#fbf79a"/>
<circle cx="809.3" cy="519.7" r="1.3" fill="#fbf79a"/>
<circle cx="809.3" cy="519.7" r="1.3" fill="#fbf79a"/>
<circle cx="809.3" cy="519.7" r="1.3" fill="#fbf79a"/>
<circle cx="809.3" cy="519.7" r="1.3" fill="#fbf79a"/>
<circle cx="809.3" cy="519.7" r="1.3" fill="#fbf79a"/>
<circle cx="809.3" cy="519.7" r="1.3" fill="#fbf79a"/>
<circle cx="809.3" cy="519.7" r="1.3" fill="#fbf79a"/>
<circle cx="809.3" cy="519.7" r="1.3" fill="#fbf79a"/>
<circle cx="809.3" cy="519.7" r="1.3" fill="#fbf79a"/>
<circle cx="809.3" cy="519.7" r="1.3" fill="#fbf79a"/>
<circle cx="809.3" cy="519.7" r="1.3" fill="#fbf79a"/>
<circle cx="809.3" cy="519.7" r="1.3" fill="#fbf79a"/>
<circle cx="809.3" cy="519.7" r="1.3" fill="#fbf79a"/>
<circle cx="809.3" cy="519.7" r="1.3" fill="#fbf79a"/>
<circle cx="809.3" cy="519.7" r="1.3" fill="#fbf79a"/>
<circle cx="809.3" cy="519.7" r="1.3" fill="#fbf79a"/>
<circle cx="809.3" cy="519.7" r="1.3" fill="#fbf79a"/>
<circle cx="809.3" cy="519.7" r="1.3" fill="#fbf79a"/>
<circle cx="809.3" cy="519.7" r="1.3" fill="#fbf79a"/>
<circle cx="809.3" cy="519.7" r="1.3" fill="#fbf79a"/>
<circle cx="809.3" cy="519.7" r="1.3" fill="#fbf79a"/>
<circle cx="809.3" cy="519.7" r="1.3" fill="#fbf79a"/>
<circle cx="809.3" cy="519.7" r="1.3" fill="#fbf79a"/>
<circle cx="809.3" cy="519.7" r="1.3" fill="#fbf79a"/>
<circle cx="809.3" cy="519.7" r="1.3" fill="#fbf79a"/>
<circle cx="809.3" cy="519.7" r="1.3" fill="#fbf79a"/>
<circle cx="809.3" cy="519.7" r="1.3" fill="#fbf79a"/>
<circle cx="809.3" cy="519.7" r="1.3" fill="#fbf79a"/>
<circle cx="809.3" cy="519.7" r="1.3" fill="#fbf79a"/>
<circle cx="809.3" cy="519.7" r="1.3" fill="#fbf79a"/>
<circle cx="809.3" cy="519.7" r="1.3" fill="#fbf79a"/>
<circle cx="809.3" cy="519.7" r="1.3" fill="#fbf79a"/>
<circle cx="809.3" cy="519.7" r="1.3" fill="#fbf79a"/>
<circle cx="809.3" cy="519.7" r="1.3" fill="#fbf79a"/>
<circle cx="809.3" cy="519.7" r="1.3" fill="#fbf79a"/>
<circle cx="809.3" cy="519.7" r="1.3" fill="#fbf79a"/>
<circle cx="809.3" cy="519.7" r="1.3" fill="#fbf79a"/>
<circle cx="809.3" cy="519.7" r="1.3" fill="#fbf79a"/>
<circle cx="809.3" cy="519.7" r="1.3" fill="#fbf79a"/>
<circle cx="809.3" cy="519.7" r="1.3" fill="#fbf79a"/>
<circle cx="809.3" cy="519.7" r="1.3" fill="#fbf79a"/>
<circle cx="809.3" cy="519.7" r="1.3" fill="#fbf79a"/>
<circle cx="809.3" cy="519.7" r="1.3" fill="#fbf79a"/>
<circle cx="809.3" cy="519.7" r="1.3" fill="#fbf79a"/>
<circle cx="809.3" cy="519.7" r="1.3" fill="#fbf79a"/>
<circle cx="809.3" cy="519.7" r="1.3" fill="#fbf79a"/>
<circle cx="809.3" cy="519.7" r="1.3" fill="#fbf79a"/>
<circle cx="809.3" cy="519.7" r="1.3" fill="#fbf79a"/>
<circle cx="809.3" cy="519.7" r="1.3" fill="#fbf79a"/>
<rect x="685.60" y="495.00" width="218.00" height="69.60" fill="none" stroke="#e6e6e6" stroke-width="1.6"/>
<line x1="685.60" y1="564.60" x2="685.60" y2="558.60" stroke="#e6e6e6" stroke-width="1.3"/>
<line x1="729.20" y1="564.60" x2="729.20" y2="558.60" stroke="#e6e6e6" stroke-width="1.3"/>
<line x1="729.20" y1="495.00" x2="729.20" y2="501.00" stroke="#e6e6e6" stroke-width="1.3"/>
<line x1="772.80" y1="564.60" x2="772.80" y2="558.60" stroke="#e6e6e6" stroke-width="1.3"/>
<line x1="816.40" y1="564.60" x2="816.40" y2="558.60" stroke="#e6e6e6" stroke-width="1.3"/>
<line x1="816.40" y1="495.00" x2="816.40" y2="501.00" stroke="#e6e6e6" stroke-width="1.3"/>
<line x1="860.00" y1="564.60" x2="860.00" y2="558.60" stroke="#e6e6e6" stroke-width="1.3"/>
<line x1="685.60" y1="529.80" x2="691.60" y2="529.80" stroke="#e6e6e6" stroke-width="1.3"/>
<line x1="903.60" y1="550.68" x2="897.60" y2="550.68" stroke="#e6e6e6" stroke-width="1.3"/>
<line x1="903.60" y1="536.76" x2="897.60" y2="536.76" stroke="#e6e6e6" stroke-width="1.3"/>
<line x1="903.60" y1="522.84" x2="897.60" y2="522.84" stroke="#e6e6e6" stroke-width="1.3"/>
<line x1="903.60" y1="508.92" x2="897.60" y2="508.92" stroke="#e6e6e6" stroke-width="1.3"/>
<text x="685.60" y="578.10" text-anchor="middle" font-size="10.3" fill="#ededed">-4</text>
<text x="729.20" y="578.10" text-anchor="middle" font-size="10.3" fill="#ededed">-3</text>
<text x="772.80" y="578.10" text-anchor="middle" font-size="10.3" fill="#ededed">-2</text>
<text x="816.40" y="578.10" text-anchor="middle" font-size="10.3" fill="#ededed">-1</text>
<text x="860.00" y="578.10" text-anchor="middle" font-size="10.3" fill="#ededed">0</text>
<text x="903.60" y="578.10" text-anchor="middle" font-size="10.3" fill="#ededed">1</text>
<text x="682.10" y="500.30" text-anchor="end" font-size="10.3" fill="#ededed">4</text>
<text x="682.10" y="535.10" text-anchor="end" font-size="10.3" fill="#ededed">2</text>
<text x="682.10" y="569.90" text-anchor="end" font-size="10.3" fill="#ededed">0</text>
<text x="794.60" y="590.10" text-anchor="middle" font-size="10" font-weight="bold" fill="#2d3236">x(t)</text>
<text x="666.10" y="536.10" text-anchor="middle" font-size="10" font-weight="bold" fill="#2d3236" transform="rotate(-90 666.10 532.80)">v(t)</text>
<rect x="938.80" y="465.80" width="276.40" height="127.40" fill="#686868" stroke="#0a0a0a" stroke-width="1.6"/>
<text x="1077.00" y="475.20" text-anchor="middle" font-size="9.7" font-weight="bold" fill="#2d3236">Poincare Map</text>
<line x1="978.55" y1="495.00" x2="978.55" y2="564.60" stroke="#7c7c7c" stroke-width="0.8" stroke-dasharray="1.5,1.5"/>
<line x1="1000.45" y1="495.00" x2="1000.45" y2="564.60" stroke="#7c7c7c" stroke-width="0.8" stroke-dasharray="1.5,1.5"/>
<line x1="1022.35" y1="495.00" x2="1022.35" y2="564.60" stroke="#7c7c7c" stroke-width="0.8" stroke-dasharray="1.5,1.5"/>
<line x1="1044.25" y1="495.00" x2="1044.25" y2="564.60" stroke="#7c7c7c" stroke-width="0.8" stroke-dasharray="1.5,1.5"/>
<line x1="1066.15" y1="495.00" x2="1066.15" y2="564.60" stroke="#7c7c7c" stroke-width="0.8" stroke-dasharray="1.5,1.5"/>
<line x1="1088.05" y1="495.00" x2="1088.05" y2="564.60" stroke="#7c7c7c" stroke-width="0.8" stroke-dasharray="1.5,1.5"/>
<line x1="1109.95" y1="495.00" x2="1109.95" y2="564.60" stroke="#7c7c7c" stroke-width="0.8" stroke-dasharray="1.5,1.5"/>
<line x1="1131.85" y1="495.00" x2="1131.85" y2="564.60" stroke="#7c7c7c" stroke-width="0.8" stroke-dasharray="1.5,1.5"/>
<line x1="1153.75" y1="495.00" x2="1153.75" y2="564.60" stroke="#7c7c7c" stroke-width="0.8" stroke-dasharray="1.5,1.5"/>
<line x1="1175.65" y1="495.00" x2="1175.65" y2="564.60" stroke="#7c7c7c" stroke-width="0.8" stroke-dasharray="1.5,1.5"/>
<line x1="989.50" y1="495.00" x2="989.50" y2="564.60" stroke="#8e8e8e" stroke-width="1"/>
<line x1="1011.40" y1="495.00" x2="1011.40" y2="564.60" stroke="#8e8e8e" stroke-width="1"/>
<line x1="1033.30" y1="495.00" x2="1033.30" y2="564.60" stroke="#8e8e8e" stroke-width="1"/>
<line x1="1055.20" y1="495.00" x2="1055.20" y2="564.60" stroke="#8e8e8e" stroke-width="1"/>
<line x1="1077.10" y1="495.00" x2="1077.10" y2="564.60" stroke="#8e8e8e" stroke-width="1"/>
<line x1="1099.00" y1="495.00" x2="1099.00" y2="564.60" stroke="#8e8e8e" stroke-width="1"/>
<line x1="1120.90" y1="495.00" x2="1120.90" y2="564.60" stroke="#8e8e8e" stroke-width="1"/>
<line x1="1142.80" y1="495.00" x2="1142.80" y2="564.60" stroke="#8e8e8e" stroke-width="1"/>
<line x1="1164.70" y1="495.00" x2="1164.70" y2="564.60" stroke="#8e8e8e" stroke-width="1"/>
<line x1="967.60" y1="557.64" x2="1186.60" y2="557.64" stroke="#808080" stroke-width="0.8" stroke-dasharray="1.5,1.5"/>
<line x1="967.60" y1="550.68" x2="1186.60" y2="550.68" stroke="#8a8a8a" stroke-width="0.9"/>
<line x1="967.60" y1="543.72" x2="1186.60" y2="543.72" stroke="#808080" stroke-width="0.8" stroke-dasharray="1.5,1.5"/>
<line x1="967.60" y1="536.76" x2="1186.60" y2="536.76" stroke="#8a8a8a" stroke-width="0.9"/>
<line x1="967.60" y1="529.80" x2="1186.60" y2="529.80" stroke="#808080" stroke-width="0.8" stroke-dasharray="1.5,1.5"/>
<line x1="967.60" y1="522.84" x2="1186.60" y2="522.84" stroke="#8a8a8a" stroke-width="0.9"/>
<line x1="967.60" y1="515.88" x2="1186.60" y2="515.88" stroke="#808080" stroke-width="0.8" stroke-dasharray="1.5,1.5"/>
<line x1="967.60" y1="508.92" x2="1186.60" y2="508.92" stroke="#8a8a8a" stroke-width="0.9"/>
<line x1="967.60" y1="501.96" x2="1186.60" y2="501.96" stroke="#808080" stroke-width="0.8" stroke-dasharray="1.5,1.5"/>
<circle cx="1106.0" cy="534.8" r="1.3" fill="#fbf79a"/>
<circle cx="1004.2" cy="507.1" r="1.3" fill="#fbf79a"/>
<circle cx="1102.9" cy="544.9" r="1.3" fill="#fbf79a"/>
<circle cx="1036.3" cy="515.0" r="1.3" fill="#fbf79a"/>
<circle cx="1053.8" cy="523.7" r="1.3" fill="#fbf79a"/>
<circle cx="1024.1" cy="524.2" r="1.3" fill="#fbf79a"/>
<circle cx="1125.1" cy="506.1" r="1.3" fill="#fbf79a"/>
<circle cx="1063.9" cy="537.7" r="1.3" fill="#fbf79a"/>
<circle cx="1071.5" cy="513.5" r="1.3" fill="#fbf79a"/>
<circle cx="1115.8" cy="511.6" r="1.3" fill="#fbf79a"/>
<circle cx="1066.7" cy="540.4" r="1.3" fill="#fbf79a"/>
<circle cx="1084.4" cy="508.9" r="1.3" fill="#fbf79a"/>
<circle cx="1077.8" cy="542.8" r="1.3" fill="#fbf79a"/>
<circle cx="1071.8" cy="512.0" r="1.3" fill="#fbf79a"/>
<circle cx="1124.8" cy="519.0" r="1.3" fill="#fbf79a"/>
<circle cx="1092.1" cy="532.7" r="1.3" fill="#fbf79a"/>
<circle cx="1011.4" cy="509.3" r="1.3" fill="#fbf79a"/>
<circle cx="1128.1" cy="532.0" r="1.3" fill="#fbf79a"/>
<circle cx="1075.7" cy="520.7" r="1.3" fill="#fbf79a"/>
<circle cx="1012.1" cy="527.6" r="1.3" fill="#fbf79a"/>
<circle cx="1132.0" cy="534.2" r="1.3" fill="#fbf79a"/>
<circle cx="1031.1" cy="532.7" r="1.3" fill="#fbf79a"/>
<circle cx="1133.5" cy="506.9" r="1.3" fill="#fbf79a"/>
<circle cx="1076.3" cy="532.3" r="1.3" fill="#fbf79a"/>
<circle cx="1023.0" cy="518.1" r="1.3" fill="#fbf79a"/>
<circle cx="1117.5" cy="506.5" r="1.3" fill="#fbf79a"/>
<circle cx="1055.9" cy="541.7" r="1.3" fill="#fbf79a"/>
<circle cx="1124.4" cy="501.3" r="1.3" fill="#fbf79a"/>
<circle cx="1054.8" cy="539.2" r="1.3" fill="#fbf79a"/>
<circle cx="1109.4" cy="502.8" r="1.3" fill="#fbf79a"/>
<circle cx="1040.6" cy="546.5" r="1.3" fill="#fbf79a"/>
<circle cx="1142.2" cy="532.6" r="1.3" fill="#fbf79a"/>
<circle cx="1042.3" cy="531.2" r="1.3" fill="#fbf79a"/>
<circle cx="1091.1" cy="509.0" r="1.3" fill="#fbf79a"/>
<circle cx="1066.4" cy="545.0" r="1.3" fill="#fbf79a"/>
<circle cx="1120.8" cy="500.2" r="1.3" fill="#fbf79a"/>
<circle cx="1047.8" cy="541.6" r="1.3" fill="#fbf79a"/>
<circle cx="1138.6" cy="506.3" r="1.3" fill="#fbf79a"/>
<circle cx="1082.0" cy="529.1" r="1.3" fill="#fbf79a"/>
<circle cx="1011.1" cy="512.4" r="1.3" fill="#fbf79a"/>
<circle cx="1131.0" cy="530.0" r="1.3" fill="#fbf79a"/>
<circle cx="1103.8" cy="514.6" r="1.3" fill="#fbf79a"/>
<circle cx="1079.4" cy="539.9" r="1.3" fill="#fbf79a"/>
<circle cx="1048.9" cy="518.1" r="1.3" fill="#fbf79a"/>
<circle cx="1021.9" cy="526.5" r="1.3" fill="#fbf79a"/>
<circle cx="1135.8" cy="511.1" r="1.3" fill="#fbf79a"/>
<circle cx="1085.4" cy="530.2" r="1.3" fill="#fbf79a"/>
<circle cx="1010.9" cy="511.3" r="1.3" fill="#fbf79a"/>
<circle cx="1129.6" cy="531.1" r="1.3" fill="#fbf79a"/>
<circle cx="1091.4" cy="516.3" r="1.3" fill="#fbf79a"/>
<circle cx="1110.4" cy="531.3" r="1.3" fill="#fbf79a"/>
<circle cx="1018.2" cy="531.7" r="1.3" fill="#fbf79a"/>
<circle cx="1138.2" cy="528.5" r="1.3" fill="#fbf79a"/>
<circle cx="1105.9" cy="515.4" r="1.3" fill="#fbf79a"/>
<circle cx="1081.6" cy="539.0" r="1.3" fill="#fbf79a"/>
<circle cx="1040.5" cy="518.9" r="1.3" fill="#fbf79a"/>
<circle cx="1040.3" cy="526.0" r="1.3" fill="#fbf79a"/>
<circle cx="1066.1" cy="518.0" r="1.3" fill="#fbf79a"/>
<circle cx="1014.1" cy="527.5" r="1.3" fill="#fbf79a"/>
<circle cx="1135.7" cy="530.1" r="1.3" fill="#fbf79a"/>
<circle cx="1098.3" cy="515.4" r="1.3" fill="#fbf79a"/>
<circle cx="1090.7" cy="537.5" r="1.3" fill="#fbf79a"/>
<circle cx="1024.6" cy="514.9" r="1.3" fill="#fbf79a"/>
<circle cx="1109.1" cy="507.5" r="1.3" fill="#fbf79a"/>
<circle cx="1052.4" cy="544.8" r="1.3" fill="#fbf79a"/>
<circle cx="1143.8" cy="510.0" r="1.3" fill="#fbf79a"/>
<circle cx="1092.7" cy="525.3" r="1.3" fill="#fbf79a"/>
<circle cx="1026.1" cy="531.5" r="1.3" fill="#fbf79a"/>
<circle cx="1138.6" cy="512.1" r="1.3" fill="#fbf79a"/>
<circle cx="1090.3" cy="528.3" r="1.3" fill="#fbf79a"/>
<circle cx="1003.0" cy="514.0" r="1.3" fill="#fbf79a"/>
<circle cx="1108.6" cy="544.1" r="1.3" fill="#fbf79a"/>
<circle cx="1028.7" cy="511.8" r="1.3" fill="#fbf79a"/>
<circle cx="1096.5" cy="510.6" r="1.3" fill="#fbf79a"/>
<circle cx="1067.6" cy="544.0" r="1.3" fill="#fbf79a"/>
<circle cx="1109.8" cy="501.5" r="1.3" fill="#fbf79a"/>
<circle cx="1037.9" cy="546.6" r="1.3" fill="#fbf79a"/>
<circle cx="1138.9" cy="536.5" r="1.3" fill="#fbf79a"/>
<circle cx="1000.7" cy="524.0" r="1.3" fill="#fbf79a"/>
<circle cx="1098.5" cy="549.4" r="1.3" fill="#fbf79a"/>
<circle cx="1066.6" cy="511.5" r="1.3" fill="#fbf79a"/>
<circle cx="1119.6" cy="512.3" r="1.3" fill="#fbf79a"/>
<circle cx="1070.7" cy="538.6" r="1.3" fill="#fbf79a"/>
<circle cx="1060.3" cy="516.4" r="1.3" fill="#fbf79a"/>
<circle cx="1017.4" cy="528.2" r="1.3" fill="#fbf79a"/>
<circle cx="1139.1" cy="523.7" r="1.3" fill="#fbf79a"/>
<circle cx="1109.9" cy="521.5" r="1.3" fill="#fbf79a"/>
<circle cx="1107.6" cy="530.2" r="1.3" fill="#fbf79a"/>
<circle cx="1024.9" cy="532.1" r="1.3" fill="#fbf79a"/>
<circle cx="1140.4" cy="515.6" r="1.3" fill="#fbf79a"/>
<circle cx="1097.4" cy="526.3" r="1.3" fill="#fbf79a"/>
<circle cx="1038.0" cy="530.6" r="1.3" fill="#fbf79a"/>
<circle cx="1102.4" cy="506.2" r="1.3" fill="#fbf79a"/>
<circle cx="1046.9" cy="547.4" r="1.3" fill="#fbf79a"/>
<circle cx="1145.7" cy="527.5" r="1.3" fill="#fbf79a"/>
<circle cx="1091.2" cy="517.4" r="1.3" fill="#fbf79a"/>
<circle cx="1116.9" cy="527.5" r="1.3" fill="#fbf79a"/>
<circle cx="1116.0" cy="515.8" r="1.3" fill="#fbf79a"/>
<circle cx="1079.5" cy="537.6" r="1.3" fill="#fbf79a"/>
<circle cx="1037.8" cy="519.3" r="1.3" fill="#fbf79a"/>
<circle cx="1049.8" cy="523.9" r="1.3" fill="#fbf79a"/>
<circle cx="1031.2" cy="525.1" r="1.3" fill="#fbf79a"/>
<circle cx="1099.1" cy="508.0" r="1.3" fill="#fbf79a"/>
<circle cx="1054.1" cy="546.7" r="1.3" fill="#fbf79a"/>
<circle cx="1146.6" cy="514.3" r="1.3" fill="#fbf79a"/>
<circle cx="1100.1" cy="522.4" r="1.3" fill="#fbf79a"/>
<circle cx="1120.8" cy="518.2" r="1.3" fill="#fbf79a"/>
<circle cx="1088.5" cy="534.5" r="1.3" fill="#fbf79a"/>
<circle cx="1018.6" cy="513.0" r="1.3" fill="#fbf79a"/>
<circle cx="1131.8" cy="512.2" r="1.3" fill="#fbf79a"/>
<circle cx="1082.3" cy="532.4" r="1.3" fill="#fbf79a"/>
<circle cx="1018.4" cy="514.7" r="1.3" fill="#fbf79a"/>
<circle cx="1131.9" cy="511.7" r="1.3" fill="#fbf79a"/>
<circle cx="1081.5" cy="532.5" r="1.3" fill="#fbf79a"/>
<circle cx="1019.2" cy="515.3" r="1.3" fill="#fbf79a"/>
<circle cx="1129.9" cy="510.0" r="1.3" fill="#fbf79a"/>
<circle cx="1076.3" cy="534.0" r="1.3" fill="#fbf79a"/>
<circle cx="1028.2" cy="519.3" r="1.3" fill="#fbf79a"/>
<circle cx="1093.7" cy="510.3" r="1.3" fill="#fbf79a"/>
<circle cx="1069.5" cy="543.9" r="1.3" fill="#fbf79a"/>
<circle cx="1103.9" cy="502.7" r="1.3" fill="#fbf79a"/>
<circle cx="1036.9" cy="548.5" r="1.3" fill="#fbf79a"/>
<circle cx="1132.6" cy="542.2" r="1.3" fill="#fbf79a"/>
<circle cx="1009.3" cy="499.9" r="1.3" fill="#fbf79a"/>
<circle cx="1096.9" cy="545.4" r="1.3" fill="#fbf79a"/>
<circle cx="1046.1" cy="516.0" r="1.3" fill="#fbf79a"/>
<circle cx="1026.9" cy="527.9" r="1.3" fill="#fbf79a"/>
<circle cx="1127.6" cy="505.9" r="1.3" fill="#fbf79a"/>
<circle cx="1066.8" cy="536.2" r="1.3" fill="#fbf79a"/>
<circle cx="1054.1" cy="518.5" r="1.3" fill="#fbf79a"/>
<circle cx="1015.9" cy="524.8" r="1.3" fill="#fbf79a"/>
<circle cx="1138.4" cy="522.2" r="1.3" fill="#fbf79a"/>
<circle cx="1107.4" cy="523.7" r="1.3" fill="#fbf79a"/>
<circle cx="1119.0" cy="521.9" r="1.3" fill="#fbf79a"/>
<circle cx="1102.6" cy="530.7" r="1.3" fill="#fbf79a"/>
<circle cx="1002.4" cy="521.3" r="1.3" fill="#fbf79a"/>
<circle cx="1107.2" cy="546.0" r="1.3" fill="#fbf79a"/>
<circle cx="1035.8" cy="514.0" r="1.3" fill="#fbf79a"/>
<circle cx="1057.7" cy="522.7" r="1.3" fill="#fbf79a"/>
<circle cx="1017.3" cy="522.3" r="1.3" fill="#fbf79a"/>
<circle cx="1137.2" cy="515.8" r="1.3" fill="#fbf79a"/>
<circle cx="1094.6" cy="528.3" r="1.3" fill="#fbf79a"/>
<circle cx="1003.0" cy="520.6" r="1.3" fill="#fbf79a"/>
<circle cx="1109.6" cy="544.9" r="1.3" fill="#fbf79a"/>
<circle cx="1030.3" cy="512.1" r="1.3" fill="#fbf79a"/>
<circle cx="1087.6" cy="513.1" r="1.3" fill="#fbf79a"/>
<circle cx="1098.6" cy="536.4" r="1.3" fill="#fbf79a"/>
<circle cx="1015.4" cy="508.7" r="1.3" fill="#fbf79a"/>
<circle cx="1133.1" cy="524.3" r="1.3" fill="#fbf79a"/>
<circle cx="1110.1" cy="523.9" r="1.3" fill="#fbf79a"/>
<circle cx="1117.6" cy="523.4" r="1.3" fill="#fbf79a"/>
<circle cx="1109.3" cy="528.1" r="1.3" fill="#fbf79a"/>
<circle cx="1085.9" cy="516.9" r="1.3" fill="#fbf79a"/>
<circle cx="1122.8" cy="520.8" r="1.3" fill="#fbf79a"/>
<circle cx="1097.8" cy="531.6" r="1.3" fill="#fbf79a"/>
<circle cx="1003.5" cy="510.1" r="1.3" fill="#fbf79a"/>
<circle cx="1105.7" cy="544.4" r="1.3" fill="#fbf79a"/>
<circle cx="1032.0" cy="513.5" r="1.3" fill="#fbf79a"/>
<circle cx="1075.0" cy="517.1" r="1.3" fill="#fbf79a"/>
<circle cx="1070.6" cy="520.8" r="1.3" fill="#fbf79a"/>
<circle cx="1007.5" cy="522.0" r="1.3" fill="#fbf79a"/>
<circle cx="1124.6" cy="538.2" r="1.3" fill="#fbf79a"/>
<circle cx="999.6" cy="507.8" r="1.3" fill="#fbf79a"/>
<circle cx="1086.2" cy="550.6" r="1.3" fill="#fbf79a"/>
<circle cx="1109.8" cy="499.8" r="1.3" fill="#fbf79a"/>
<circle cx="1034.0" cy="547.0" r="1.3" fill="#fbf79a"/>
<circle cx="1132.7" cy="541.4" r="1.3" fill="#fbf79a"/>
<circle cx="1006.4" cy="500.4" r="1.3" fill="#fbf79a"/>
<circle cx="1090.5" cy="547.7" r="1.3" fill="#fbf79a"/>
<circle cx="1074.2" cy="510.0" r="1.3" fill="#fbf79a"/>
<circle cx="1112.0" cy="532.5" r="1.3" fill="#fbf79a"/>
<circle cx="1008.6" cy="528.5" r="1.3" fill="#fbf79a"/>
<circle cx="1121.8" cy="541.3" r="1.3" fill="#fbf79a"/>
<circle cx="1011.8" cy="502.1" r="1.3" fill="#fbf79a"/>
<circle cx="1111.6" cy="540.2" r="1.3" fill="#fbf79a"/>
<circle cx="1015.7" cy="505.3" r="1.3" fill="#fbf79a"/>
<circle cx="1128.6" cy="529.8" r="1.3" fill="#fbf79a"/>
<circle cx="1106.9" cy="514.4" r="1.3" fill="#fbf79a"/>
<circle cx="1076.4" cy="540.1" r="1.3" fill="#fbf79a"/>
<circle cx="1056.6" cy="516.7" r="1.3" fill="#fbf79a"/>
<circle cx="1015.8" cy="526.6" r="1.3" fill="#fbf79a"/>
<circle cx="1138.2" cy="525.0" r="1.3" fill="#fbf79a"/>
<circle cx="1111.3" cy="520.2" r="1.3" fill="#fbf79a"/>
<circle cx="1100.0" cy="532.9" r="1.3" fill="#fbf79a"/>
<circle cx="1004.7" cy="508.4" r="1.3" fill="#fbf79a"/>
<circle cx="1107.2" cy="543.5" r="1.3" fill="#fbf79a"/>
<circle cx="1028.0" cy="511.9" r="1.3" fill="#fbf79a"/>
<circle cx="1099.1" cy="509.9" r="1.3" fill="#fbf79a"/>
<circle cx="1062.1" cy="544.9" r="1.3" fill="#fbf79a"/>
<circle cx="1130.0" cy="501.1" r="1.3" fill="#fbf79a"/>
<circle cx="1062.4" cy="535.6" r="1.3" fill="#fbf79a"/>
<circle cx="1061.2" cy="517.0" r="1.3" fill="#fbf79a"/>
<circle cx="1014.9" cy="527.2" r="1.3" fill="#fbf79a"/>
<circle cx="1137.1" cy="527.8" r="1.3" fill="#fbf79a"/>
<circle cx="1110.1" cy="516.4" r="1.3" fill="#fbf79a"/>
<circle cx="1083.1" cy="537.9" r="1.3" fill="#fbf79a"/>
<circle cx="1033.9" cy="518.6" r="1.3" fill="#fbf79a"/>
<circle cx="1064.1" cy="519.9" r="1.3" fill="#fbf79a"/>
<circle cx="1009.5" cy="521.7" r="1.3" fill="#fbf79a"/>
<circle cx="1130.0" cy="534.2" r="1.3" fill="#fbf79a"/>
<circle cx="1030.4" cy="532.7" r="1.3" fill="#fbf79a"/>
<circle cx="1134.9" cy="507.8" r="1.3" fill="#fbf79a"/>
<circle cx="1079.5" cy="531.2" r="1.3" fill="#fbf79a"/>
<circle cx="1017.7" cy="515.4" r="1.3" fill="#fbf79a"/>
<circle cx="1133.1" cy="512.7" r="1.3" fill="#fbf79a"/>
<circle cx="1084.6" cy="531.6" r="1.3" fill="#fbf79a"/>
<circle cx="1014.6" cy="512.5" r="1.3" fill="#fbf79a"/>
<circle cx="1135.0" cy="521.5" r="1.3" fill="#fbf79a"/>
<circle cx="1104.3" cy="526.4" r="1.3" fill="#fbf79a"/>
<circle cx="1093.2" cy="514.8" r="1.3" fill="#fbf79a"/>
<circle cx="1097.1" cy="536.2" r="1.3" fill="#fbf79a"/>
<circle cx="1016.2" cy="509.4" r="1.3" fill="#fbf79a"/>
<circle cx="1134.0" cy="521.6" r="1.3" fill="#fbf79a"/>
<circle cx="1104.0" cy="526.8" r="1.3" fill="#fbf79a"/>
<circle cx="1082.2" cy="517.8" r="1.3" fill="#fbf79a"/>
<circle cx="1110.2" cy="511.7" r="1.3" fill="#fbf79a"/>
<circle cx="1065.3" cy="542.0" r="1.3" fill="#fbf79a"/>
<circle cx="1101.4" cy="503.7" r="1.3" fill="#fbf79a"/>
<circle cx="1039.0" cy="548.9" r="1.3" fill="#fbf79a"/>
<circle cx="1134.6" cy="541.1" r="1.3" fill="#fbf79a"/>
<circle cx="1004.7" cy="500.6" r="1.3" fill="#fbf79a"/>
<circle cx="1086.1" cy="549.3" r="1.3" fill="#fbf79a"/>
<circle cx="1098.8" cy="502.6" r="1.3" fill="#fbf79a"/>
<circle cx="1035.2" cy="550.0" r="1.3" fill="#fbf79a"/>
<circle cx="1125.2" cy="546.7" r="1.3" fill="#fbf79a"/>
<circle cx="1026.2" cy="506.4" r="1.3" fill="#fbf79a"/>
<circle cx="1127.6" cy="511.6" r="1.3" fill="#fbf79a"/>
<circle cx="1076.5" cy="534.9" r="1.3" fill="#fbf79a"/>
<circle cx="1031.2" cy="519.7" r="1.3" fill="#fbf79a"/>
<circle cx="1078.9" cy="514.9" r="1.3" fill="#fbf79a"/>
<circle cx="1123.7" cy="517.9" r="1.3" fill="#fbf79a"/>
<circle cx="1088.4" cy="533.9" r="1.3" fill="#fbf79a"/>
<circle cx="1017.2" cy="512.4" r="1.3" fill="#fbf79a"/>
<circle cx="1134.0" cy="515.6" r="1.3" fill="#fbf79a"/>
<circle cx="1090.8" cy="530.2" r="1.3" fill="#fbf79a"/>
<circle cx="1006.4" cy="510.1" r="1.3" fill="#fbf79a"/>
<circle cx="1115.9" cy="540.2" r="1.3" fill="#fbf79a"/>
<circle cx="1012.5" cy="503.5" r="1.3" fill="#fbf79a"/>
<circle cx="1117.7" cy="537.5" r="1.3" fill="#fbf79a"/>
<circle cx="1002.0" cy="506.1" r="1.3" fill="#fbf79a"/>
<circle cx="1092.5" cy="548.3" r="1.3" fill="#fbf79a"/>
<circle cx="1073.0" cy="510.2" r="1.3" fill="#fbf79a"/>
<circle cx="1116.2" cy="530.3" r="1.3" fill="#fbf79a"/>
<circle cx="1075.9" cy="520.2" r="1.3" fill="#fbf79a"/>
<circle cx="1016.5" cy="529.4" r="1.3" fill="#fbf79a"/>
<circle cx="1137.8" cy="527.9" r="1.3" fill="#fbf79a"/>
<circle cx="1109.0" cy="516.0" r="1.3" fill="#fbf79a"/>
<circle cx="1082.2" cy="538.3" r="1.3" fill="#fbf79a"/>
<circle cx="1036.6" cy="518.9" r="1.3" fill="#fbf79a"/>
<circle cx="1053.3" cy="523.1" r="1.3" fill="#fbf79a"/>
<circle cx="1023.4" cy="524.3" r="1.3" fill="#fbf79a"/>
<circle cx="1127.5" cy="506.8" r="1.3" fill="#fbf79a"/>
<circle cx="1068.1" cy="536.0" r="1.3" fill="#fbf79a"/>
<circle cx="1050.4" cy="519.3" r="1.3" fill="#fbf79a"/>
<circle cx="1020.5" cy="525.6" r="1.3" fill="#fbf79a"/>
<circle cx="1136.6" cy="512.5" r="1.3" fill="#fbf79a"/>
<circle cx="1088.4" cy="529.5" r="1.3" fill="#fbf79a"/>
<circle cx="1006.7" cy="510.7" r="1.3" fill="#fbf79a"/>
<circle cx="1117.8" cy="539.4" r="1.3" fill="#fbf79a"/>
<circle cx="1008.0" cy="503.0" r="1.3" fill="#fbf79a"/>
<circle cx="1104.6" cy="543.3" r="1.3" fill="#fbf79a"/>
<circle cx="1029.5" cy="513.1" r="1.3" fill="#fbf79a"/>
<circle cx="1088.4" cy="512.7" r="1.3" fill="#fbf79a"/>
<circle cx="1094.2" cy="537.7" r="1.3" fill="#fbf79a"/>
<circle cx="1022.2" cy="512.9" r="1.3" fill="#fbf79a"/>
<circle cx="1121.8" cy="507.8" r="1.3" fill="#fbf79a"/>
<circle cx="1062.9" cy="539.1" r="1.3" fill="#fbf79a"/>
<circle cx="1085.3" cy="508.9" r="1.3" fill="#fbf79a"/>
<circle cx="1076.4" cy="543.1" r="1.3" fill="#fbf79a"/>
<circle cx="1077.6" cy="510.2" r="1.3" fill="#fbf79a"/>
<circle cx="1104.5" cy="535.3" r="1.3" fill="#fbf79a"/>
<circle cx="1007.3" cy="506.1" r="1.3" fill="#fbf79a"/>
<circle cx="1111.1" cy="541.5" r="1.3" fill="#fbf79a"/>
<circle cx="1019.7" cy="507.1" r="1.3" fill="#fbf79a"/>
<circle cx="1133.1" cy="518.8" r="1.3" fill="#fbf79a"/>
<circle cx="1096.9" cy="529.3" r="1.3" fill="#fbf79a"/>
<circle cx="1002.1" cy="519.1" r="1.3" fill="#fbf79a"/>
<circle cx="1106.7" cy="545.7" r="1.3" fill="#fbf79a"/>
<circle cx="1035.5" cy="514.1" r="1.3" fill="#fbf79a"/>
<circle cx="1058.8" cy="522.4" r="1.3" fill="#fbf79a"/>
<circle cx="1015.7" cy="521.8" r="1.3" fill="#fbf79a"/>
<circle cx="1137.7" cy="519.3" r="1.3" fill="#fbf79a"/>
<circle cx="1101.5" cy="526.4" r="1.3" fill="#fbf79a"/>
<circle cx="1071.9" cy="521.1" r="1.3" fill="#fbf79a"/>
<circle cx="1007.2" cy="521.9" r="1.3" fill="#fbf79a"/>
<circle cx="1123.6" cy="538.8" r="1.3" fill="#fbf79a"/>
<circle cx="1001.7" cy="505.1" r="1.3" fill="#fbf79a"/>
<circle cx="1088.6" cy="549.4" r="1.3" fill="#fbf79a"/>
<circle cx="1092.5" cy="504.2" r="1.3" fill="#fbf79a"/>
<circle cx="1042.8" cy="550.1" r="1.3" fill="#fbf79a"/>
<circle cx="1136.1" cy="540.8" r="1.3" fill="#fbf79a"/>
<circle cx="1003.3" cy="501.1" r="1.3" fill="#fbf79a"/>
<circle cx="1082.9" cy="550.4" r="1.3" fill="#fbf79a"/>
<circle cx="1117.2" cy="498.9" r="1.3" fill="#fbf79a"/>
<circle cx="1040.4" cy="543.8" r="1.3" fill="#fbf79a"/>
<circle cx="1145.1" cy="524.2" r="1.3" fill="#fbf79a"/>
<circle cx="1106.3" cy="517.3" r="1.3" fill="#fbf79a"/>
<circle cx="1090.2" cy="536.6" r="1.3" fill="#fbf79a"/>
<circle cx="1022.5" cy="514.2" r="1.3" fill="#fbf79a"/>
<circle cx="1119.0" cy="507.2" r="1.3" fill="#fbf79a"/>
<circle cx="1058.9" cy="540.8" r="1.3" fill="#fbf79a"/>
<circle cx="1109.8" cy="502.4" r="1.3" fill="#fbf79a"/>
<circle cx="1039.8" cy="546.5" r="1.3" fill="#fbf79a"/>
<circle cx="1141.4" cy="533.6" r="1.3" fill="#fbf79a"/>
<circle cx="1028.9" cy="533.3" r="1.3" fill="#fbf79a"/>
<circle cx="1138.6" cy="511.1" r="1.3" fill="#fbf79a"/>
<circle cx="1088.7" cy="528.5" r="1.3" fill="#fbf79a"/>
<circle cx="1004.2" cy="512.4" r="1.3" fill="#fbf79a"/>
<circle cx="1111.6" cy="542.6" r="1.3" fill="#fbf79a"/>
<circle cx="1022.4" cy="508.2" r="1.3" fill="#fbf79a"/>
<circle cx="1129.6" cy="512.2" r="1.3" fill="#fbf79a"/>
<circle cx="1079.9" cy="533.6" r="1.3" fill="#fbf79a"/>
<circle cx="1023.5" cy="517.4" r="1.3" fill="#fbf79a"/>
<circle cx="1114.3" cy="506.7" r="1.3" fill="#fbf79a"/>
<circle cx="1053.4" cy="543.2" r="1.3" fill="#fbf79a"/>
<circle cx="1136.9" cy="504.3" r="1.3" fill="#fbf79a"/>
<circle cx="1077.1" cy="530.5" r="1.3" fill="#fbf79a"/>
<circle cx="1017.8" cy="516.1" r="1.3" fill="#fbf79a"/>
<circle cx="1133.1" cy="512.4" r="1.3" fill="#fbf79a"/>
<circle cx="1084.2" cy="531.6" r="1.3" fill="#fbf79a"/>
<circle cx="1015.0" cy="512.8" r="1.3" fill="#fbf79a"/>
<circle cx="1135.1" cy="520.3" r="1.3" fill="#fbf79a"/>
<circle cx="1101.8" cy="527.2" r="1.3" fill="#fbf79a"/>
<circle cx="1053.1" cy="527.1" r="1.3" fill="#fbf79a"/>
<circle cx="1036.2" cy="523.9" r="1.3" fill="#fbf79a"/>
<circle cx="1071.6" cy="516.6" r="1.3" fill="#fbf79a"/>
<circle cx="1054.6" cy="525.8" r="1.3" fill="#fbf79a"/>
<circle cx="1029.0" cy="524.1" r="1.3" fill="#fbf79a"/>
<circle cx="1104.9" cy="506.8" r="1.3" fill="#fbf79a"/>
<circle cx="1049.2" cy="546.4" r="1.3" fill="#fbf79a"/>
<circle cx="1147.0" cy="520.6" r="1.3" fill="#fbf79a"/>
<circle cx="1105.5" cy="519.0" r="1.3" fill="#fbf79a"/>
<circle cx="1100.2" cy="533.7" r="1.3" fill="#fbf79a"/>
<circle cx="1006.5" cy="507.4" r="1.3" fill="#fbf79a"/>
<circle cx="1111.6" cy="541.5" r="1.3" fill="#fbf79a"/>
<circle cx="1019.5" cy="506.8" r="1.3" fill="#fbf79a"/>
<circle cx="1133.1" cy="519.7" r="1.3" fill="#fbf79a"/>
<circle cx="1099.0" cy="528.7" r="1.3" fill="#fbf79a"/>
<circle cx="1008.0" cy="527.1" r="1.3" fill="#fbf79a"/>
<circle cx="1121.8" cy="541.0" r="1.3" fill="#fbf79a"/>
<circle cx="1010.8" cy="502.0" r="1.3" fill="#fbf79a"/>
<circle cx="1109.0" cy="541.3" r="1.3" fill="#fbf79a"/>
<circle cx="1020.8" cy="508.1" r="1.3" fill="#fbf79a"/>
<circle cx="1131.9" cy="514.8" r="1.3" fill="#fbf79a"/>
<circle cx="1087.1" cy="531.6" r="1.3" fill="#fbf79a"/>
<circle cx="1012.9" cy="511.1" r="1.3" fill="#fbf79a"/>
<circle cx="1132.7" cy="526.9" r="1.3" fill="#fbf79a"/>
<circle cx="1113.7" cy="519.3" r="1.3" fill="#fbf79a"/>
<circle cx="1093.7" cy="534.5" r="1.3" fill="#fbf79a"/>
<circle cx="1014.5" cy="509.7" r="1.3" fill="#fbf79a"/>
<circle cx="1133.2" cy="525.0" r="1.3" fill="#fbf79a"/>
<circle cx="1111.4" cy="522.8" r="1.3" fill="#fbf79a"/>
<circle cx="1112.2" cy="527.6" r="1.3" fill="#fbf79a"/>
<circle cx="1108.5" cy="513.3" r="1.3" fill="#fbf79a"/>
<circle cx="1071.1" cy="541.1" r="1.3" fill="#fbf79a"/>
<circle cx="1077.0" cy="511.0" r="1.3" fill="#fbf79a"/>
<circle cx="1111.2" cy="532.6" r="1.3" fill="#fbf79a"/>
<circle cx="1005.5" cy="526.2" r="1.3" fill="#fbf79a"/>
<circle cx="1114.6" cy="544.1" r="1.3" fill="#fbf79a"/>
<circle cx="1024.6" cy="508.4" r="1.3" fill="#fbf79a"/>
<circle cx="1124.5" cy="509.5" r="1.3" fill="#fbf79a"/>
<circle cx="1069.2" cy="537.2" r="1.3" fill="#fbf79a"/>
<circle cx="1054.6" cy="518.1" r="1.3" fill="#fbf79a"/>
<circle cx="1015.4" cy="525.0" r="1.3" fill="#fbf79a"/>
<circle cx="1138.2" cy="523.6" r="1.3" fill="#fbf79a"/>
<circle cx="1109.6" cy="522.3" r="1.3" fill="#fbf79a"/>
<circle cx="1111.6" cy="528.2" r="1.3" fill="#fbf79a"/>
<circle cx="1096.9" cy="514.3" r="1.3" fill="#fbf79a"/>
<circle cx="1087.0" cy="538.8" r="1.3" fill="#fbf79a"/>
<circle cx="1032.3" cy="517.7" r="1.3" fill="#fbf79a"/>
<circle cx="1070.3" cy="518.0" r="1.3" fill="#fbf79a"/>
<circle cx="1022.1" cy="530.2" r="1.3" fill="#fbf79a"/>
<circle cx="1140.1" cy="517.2" r="1.3" fill="#fbf79a"/>
<circle cx="1099.7" cy="525.9" r="1.3" fill="#fbf79a"/>
<circle cx="1067.7" cy="522.4" r="1.3" fill="#fbf79a"/>
<circle cx="1009.1" cy="518.3" r="1.3" fill="#fbf79a"/>
<circle cx="1129.5" cy="533.6" r="1.3" fill="#fbf79a"/>
<circle cx="1043.3" cy="530.5" r="1.3" fill="#fbf79a"/>
<circle cx="1082.9" cy="511.7" r="1.3" fill="#fbf79a"/>
<circle cx="1100.4" cy="536.2" r="1.3" fill="#fbf79a"/>
<circle cx="1013.7" cy="507.6" r="1.3" fill="#fbf79a"/>
<circle cx="1129.6" cy="529.6" r="1.3" fill="#fbf79a"/>
<circle cx="1107.6" cy="514.6" r="1.3" fill="#fbf79a"/>
<circle cx="1076.7" cy="539.9" r="1.3" fill="#fbf79a"/>
<circle cx="1054.8" cy="517.2" r="1.3" fill="#fbf79a"/>
<circle cx="1015.9" cy="526.0" r="1.3" fill="#fbf79a"/>
<circle cx="1138.4" cy="523.7" r="1.3" fill="#fbf79a"/>
<circle cx="1109.8" cy="521.9" r="1.3" fill="#fbf79a"/>
<circle cx="1110.0" cy="529.1" r="1.3" fill="#fbf79a"/>
<circle cx="1067.6" cy="522.7" r="1.3" fill="#fbf79a"/>
<circle cx="1009.5" cy="518.1" r="1.3" fill="#fbf79a"/>
<circle cx="1130.6" cy="532.5" r="1.3" fill="#fbf79a"/>
<circle cx="1066.0" cy="523.9" r="1.3" fill="#fbf79a"/>
<circle cx="1012.5" cy="518.5" r="1.3" fill="#fbf79a"/>
<circle cx="1135.6" cy="525.6" r="1.3" fill="#fbf79a"/>
<circle cx="1112.2" cy="520.7" r="1.3" fill="#fbf79a"/>
<circle cx="1101.7" cy="532.2" r="1.3" fill="#fbf79a"/>
<circle cx="1001.7" cy="511.6" r="1.3" fill="#fbf79a"/>
<circle cx="1100.8" cy="546.5" r="1.3" fill="#fbf79a"/>
<circle cx="1045.5" cy="515.5" r="1.3" fill="#fbf79a"/>
<circle cx="1028.7" cy="528.1" r="1.3" fill="#fbf79a"/>
<circle cx="1122.7" cy="504.9" r="1.3" fill="#fbf79a"/>
<circle cx="1058.8" cy="539.3" r="1.3" fill="#fbf79a"/>
<circle cx="1099.3" cy="504.9" r="1.3" fill="#fbf79a"/>
<circle cx="1042.8" cy="548.8" r="1.3" fill="#fbf79a"/>
<circle cx="1139.6" cy="537.1" r="1.3" fill="#fbf79a"/>
<circle cx="997.7" cy="518.7" r="1.3" fill="#fbf79a"/>
<circle cx="1087.8" cy="551.9" r="1.3" fill="#fbf79a"/>
<circle cx="1115.1" cy="498.7" r="1.3" fill="#fbf79a"/>
<circle cx="1037.4" cy="544.9" r="1.3" fill="#fbf79a"/>
<circle cx="1141.9" cy="531.9" r="1.3" fill="#fbf79a"/>
<circle cx="1056.5" cy="527.3" r="1.3" fill="#fbf79a"/>
<circle cx="1031.2" cy="523.6" r="1.3" fill="#fbf79a"/>
<circle cx="1092.8" cy="509.9" r="1.3" fill="#fbf79a"/>
<circle cx="1068.9" cy="544.2" r="1.3" fill="#fbf79a"/>
<circle cx="1108.0" cy="501.8" r="1.3" fill="#fbf79a"/>
<circle cx="1037.0" cy="547.3" r="1.3" fill="#fbf79a"/>
<circle cx="1136.1" cy="539.2" r="1.3" fill="#fbf79a"/>
<circle cx="998.4" cy="506.6" r="1.3" fill="#fbf79a"/>
<circle cx="1078.7" cy="552.8" r="1.3" fill="#fbf79a"/>
<circle cx="1141.7" cy="502.8" r="1.3" fill="#fbf79a"/>
<circle cx="1080.4" cy="527.8" r="1.3" fill="#fbf79a"/>
<circle cx="1009.4" cy="512.8" r="1.3" fill="#fbf79a"/>
<circle cx="1127.8" cy="533.4" r="1.3" fill="#fbf79a"/>
<circle cx="1043.2" cy="530.5" r="1.3" fill="#fbf79a"/>
<circle cx="1082.9" cy="511.7" r="1.3" fill="#fbf79a"/>
<circle cx="1100.6" cy="536.2" r="1.3" fill="#fbf79a"/>
<circle cx="1013.3" cy="507.4" r="1.3" fill="#fbf79a"/>
<circle cx="1128.7" cy="530.7" r="1.3" fill="#fbf79a"/>
<circle cx="1097.8" cy="515.0" r="1.3" fill="#fbf79a"/>
<circle cx="1089.4" cy="538.0" r="1.3" fill="#fbf79a"/>
<circle cx="1027.2" cy="516.0" r="1.3" fill="#fbf79a"/>
<circle cx="1095.8" cy="510.1" r="1.3" fill="#fbf79a"/>
<circle cx="1066.3" cy="544.4" r="1.3" fill="#fbf79a"/>
<circle cx="1116.5" cy="500.6" r="1.3" fill="#fbf79a"/>
<circle cx="1042.9" cy="543.8" r="1.3" fill="#fbf79a"/>
<circle cx="1145.8" cy="520.1" r="1.3" fill="#fbf79a"/>
<circle cx="1106.0" cy="520.2" r="1.3" fill="#fbf79a"/>
<circle cx="1105.8" cy="531.5" r="1.3" fill="#fbf79a"/>
<circle cx="1002.9" cy="522.7" r="1.3" fill="#fbf79a"/>
<circle cx="1108.5" cy="545.8" r="1.3" fill="#fbf79a"/>
<circle cx="1034.0" cy="513.4" r="1.3" fill="#fbf79a"/>
<circle cx="1066.8" cy="519.9" r="1.3" fill="#fbf79a"/>
<circle cx="1008.7" cy="522.4" r="1.3" fill="#fbf79a"/>
<circle cx="1127.7" cy="536.2" r="1.3" fill="#fbf79a"/>
<circle cx="1002.0" cy="524.2" r="1.3" fill="#fbf79a"/>
<circle cx="1103.4" cy="547.8" r="1.3" fill="#fbf79a"/>
<circle cx="1048.1" cy="514.8" r="1.3" fill="#fbf79a"/>
<circle cx="1026.5" cy="528.5" r="1.3" fill="#fbf79a"/>
<circle cx="1130.4" cy="506.7" r="1.3" fill="#fbf79a"/>
<circle cx="1071.8" cy="534.3" r="1.3" fill="#fbf79a"/>
<circle cx="1035.0" cy="520.7" r="1.3" fill="#fbf79a"/>
<circle cx="1064.3" cy="519.5" r="1.3" fill="#fbf79a"/>
<circle cx="1009.6" cy="522.5" r="1.3" fill="#fbf79a"/>
<circle cx="1129.9" cy="534.5" r="1.3" fill="#fbf79a"/>
<circle cx="1024.4" cy="533.0" r="1.3" fill="#fbf79a"/>
<circle cx="1141.2" cy="518.6" r="1.3" fill="#fbf79a"/>
<circle cx="1102.9" cy="524.5" r="1.3" fill="#fbf79a"/>
<circle cx="1114.6" cy="513.5" r="1.3" fill="#fbf79a"/>
<circle cx="1071.8" cy="539.6" r="1.3" fill="#fbf79a"/>
<circle cx="1064.6" cy="515.0" r="1.3" fill="#fbf79a"/>
<circle cx="1043.2" cy="528.4" r="1.3" fill="#fbf79a"/>
<circle cx="1069.7" cy="516.3" r="1.3" fill="#fbf79a"/>
<circle cx="1046.7" cy="527.8" r="1.3" fill="#fbf79a"/>
<circle cx="1055.4" cy="520.6" r="1.3" fill="#fbf79a"/>
<circle cx="1016.3" cy="523.4" r="1.3" fill="#fbf79a"/>
<circle cx="1138.2" cy="519.4" r="1.3" fill="#fbf79a"/>
<circle cx="1102.0" cy="526.0" r="1.3" fill="#fbf79a"/>
<circle cx="1085.0" cy="517.0" r="1.3" fill="#fbf79a"/>
<circle cx="1123.1" cy="518.8" r="1.3" fill="#fbf79a"/>
<circle cx="1090.9" cy="533.4" r="1.3" fill="#fbf79a"/>
<circle cx="1014.1" cy="510.4" r="1.3" fill="#fbf79a"/>
<circle cx="1133.4" cy="524.9" r="1.3" fill="#fbf79a"/>
<circle cx="1111.3" cy="522.9" r="1.3" fill="#fbf79a"/>
<circle cx="1112.4" cy="527.5" r="1.3" fill="#fbf79a"/>
<circle cx="1110.0" cy="513.4" r="1.3" fill="#fbf79a"/>
<circle cx="1071.2" cy="540.8" r="1.3" fill="#fbf79a"/>
<circle cx="1074.2" cy="511.9" r="1.3" fill="#fbf79a"/>
<circle cx="1122.5" cy="524.7" r="1.3" fill="#fbf79a"/>
<circle cx="1111.7" cy="525.8" r="1.3" fill="#fbf79a"/>
<circle cx="1118.6" cy="517.7" r="1.3" fill="#fbf79a"/>
<circle cx="1086.3" cy="535.5" r="1.3" fill="#fbf79a"/>
<circle cx="1022.9" cy="515.4" r="1.3" fill="#fbf79a"/>
<circle cx="1117.0" cy="506.9" r="1.3" fill="#fbf79a"/>
<circle cx="1056.3" cy="541.9" r="1.3" fill="#fbf79a"/>
<circle cx="1124.1" cy="501.2" r="1.3" fill="#fbf79a"/>
<circle cx="1054.2" cy="539.4" r="1.3" fill="#fbf79a"/>
<circle cx="1112.9" cy="502.3" r="1.3" fill="#fbf79a"/>
<circle cx="1042.5" cy="545.2" r="1.3" fill="#fbf79a"/>
<circle cx="1145.3" cy="525.7" r="1.3" fill="#fbf79a"/>
<circle cx="1102.5" cy="516.3" r="1.3" fill="#fbf79a"/>
<circle cx="1089.8" cy="537.3" r="1.3" fill="#fbf79a"/>
<circle cx="1024.7" cy="515.1" r="1.3" fill="#fbf79a"/>
<circle cx="1108.6" cy="507.6" r="1.3" fill="#fbf79a"/>
<circle cx="1052.3" cy="545.0" r="1.3" fill="#fbf79a"/>
<circle cx="1144.3" cy="510.6" r="1.3" fill="#fbf79a"/>
<circle cx="1094.0" cy="524.9" r="1.3" fill="#fbf79a"/>
<circle cx="1044.9" cy="529.0" r="1.3" fill="#fbf79a"/>
<circle cx="1068.1" cy="516.7" r="1.3" fill="#fbf79a"/>
<circle cx="1031.1" cy="530.3" r="1.3" fill="#fbf79a"/>
<rect x="967.60" y="495.00" width="219.00" height="69.60" fill="none" stroke="#e6e6e6" stroke-width="1.6"/>
<line x1="989.50" y1="564.60" x2="989.50" y2="558.60" stroke="#e6e6e6" stroke-width="1.3"/>
<line x1="1011.40" y1="564.60" x2="1011.40" y2="558.60" stroke="#e6e6e6" stroke-width="1.3"/>
<line x1="1011.40" y1="495.00" x2="1011.40" y2="501.00" stroke="#e6e6e6" stroke-width="1.3"/>
<line x1="1033.30" y1="564.60" x2="1033.30" y2="558.60" stroke="#e6e6e6" stroke-width="1.3"/>
<line x1="1055.20" y1="564.60" x2="1055.20" y2="558.60" stroke="#e6e6e6" stroke-width="1.3"/>
<line x1="1055.20" y1="495.00" x2="1055.20" y2="501.00" stroke="#e6e6e6" stroke-width="1.3"/>
<line x1="1077.10" y1="564.60" x2="1077.10" y2="558.60" stroke="#e6e6e6" stroke-width="1.3"/>
<line x1="1099.00" y1="564.60" x2="1099.00" y2="558.60" stroke="#e6e6e6" stroke-width="1.3"/>
<line x1="1099.00" y1="495.00" x2="1099.00" y2="501.00" stroke="#e6e6e6" stroke-width="1.3"/>
<line x1="1120.90" y1="564.60" x2="1120.90" y2="558.60" stroke="#e6e6e6" stroke-width="1.3"/>
<line x1="1142.80" y1="564.60" x2="1142.80" y2="558.60" stroke="#e6e6e6" stroke-width="1.3"/>
<line x1="1142.80" y1="495.00" x2="1142.80" y2="501.00" stroke="#e6e6e6" stroke-width="1.3"/>
<line x1="1164.70" y1="564.60" x2="1164.70" y2="558.60" stroke="#e6e6e6" stroke-width="1.3"/>
<line x1="967.60" y1="529.80" x2="973.60" y2="529.80" stroke="#e6e6e6" stroke-width="1.3"/>
<line x1="1186.60" y1="550.68" x2="1180.60" y2="550.68" stroke="#e6e6e6" stroke-width="1.3"/>
<line x1="1186.60" y1="536.76" x2="1180.60" y2="536.76" stroke="#e6e6e6" stroke-width="1.3"/>
<line x1="1186.60" y1="522.84" x2="1180.60" y2="522.84" stroke="#e6e6e6" stroke-width="1.3"/>
<line x1="1186.60" y1="508.92" x2="1180.60" y2="508.92" stroke="#e6e6e6" stroke-width="1.3"/>
<text x="967.60" y="578.10" text-anchor="middle" font-size="10.3" fill="#ededed">-5</text>
<text x="989.50" y="578.10" text-anchor="middle" font-size="10.3" fill="#ededed">-4</text>
<text x="1011.40" y="578.10" text-anchor="middle" font-size="10.3" fill="#ededed">-3</text>
<text x="1033.30" y="578.10" text-anchor="middle" font-size="10.3" fill="#ededed">-2</text>
<text x="1055.20" y="578.10" text-anchor="middle" font-size="10.3" fill="#ededed">-1</text>
<text x="1077.10" y="578.10" text-anchor="middle" font-size="10.3" fill="#ededed">0</text>
<text x="1099.00" y="578.10" text-anchor="middle" font-size="10.3" fill="#ededed">1</text>
<text x="1120.90" y="578.10" text-anchor="middle" font-size="10.3" fill="#ededed">2</text>
<text x="1142.80" y="578.10" text-anchor="middle" font-size="10.3" fill="#ededed">3</text>
<text x="1164.70" y="578.10" text-anchor="middle" font-size="10.3" fill="#ededed">4</text>
<text x="1186.60" y="578.10" text-anchor="middle" font-size="10.3" fill="#ededed">5</text>
<text x="964.10" y="500.30" text-anchor="end" font-size="10.3" fill="#ededed">2</text>
<text x="964.10" y="535.10" text-anchor="end" font-size="10.3" fill="#ededed">-2</text>
<text x="964.10" y="569.90" text-anchor="end" font-size="10.3" fill="#ededed">-7</text>
<text x="1077.10" y="590.10" text-anchor="middle" font-size="10" font-weight="bold" fill="#2d3236">x(t)</text>
<text x="948.10" y="536.10" text-anchor="middle" font-size="10" font-weight="bold" fill="#2d3236" transform="rotate(-90 948.10 532.80)">v(t)</text>
</svg>
</body></html>
